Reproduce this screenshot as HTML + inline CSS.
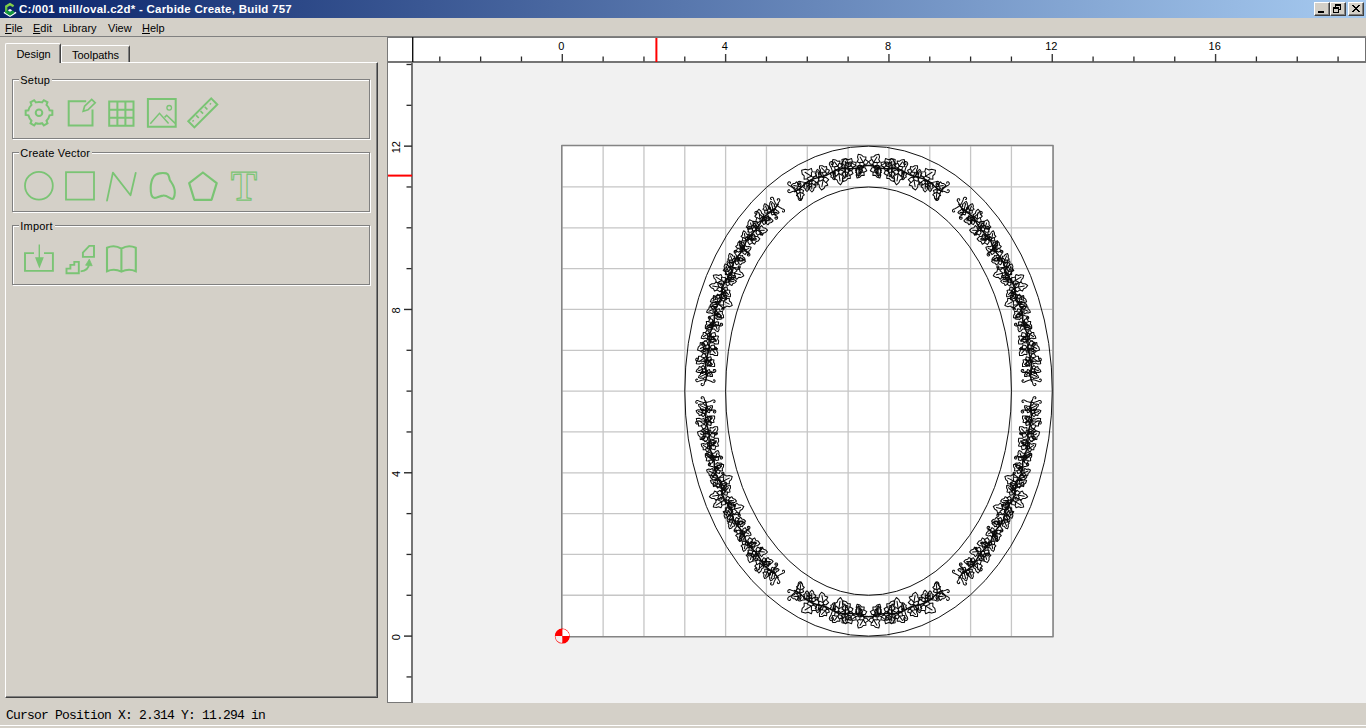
<!DOCTYPE html>
<html lang="en"><head><meta charset="utf-8"><title>Carbide Create</title>
<style>
*{box-sizing:border-box;margin:0;padding:0}
html,body{width:1366px;height:728px;overflow:hidden;background:#d4d0c8}
body{position:relative;font-family:"Liberation Sans",sans-serif;font-size:11px;color:#000;-webkit-font-smoothing:none}
.abs{position:absolute}
#title{position:absolute;left:0;top:0;width:1366px;height:18px;background:linear-gradient(to right,#0a246a 0%,#a6caf0 100%)}
#title .t{position:absolute;left:19px;top:0.5px;height:16px;line-height:16px;color:#fff;font-weight:bold;font-size:11.5px;white-space:nowrap;letter-spacing:0.25px}
.wb{position:absolute;top:2px;width:16px;height:14px;background:#d4d0c8;border-top:1px solid #fff;border-left:1px solid #fff;border-right:1px solid #404040;border-bottom:1px solid #404040}
.wb:after{content:"";position:absolute;left:0;top:0;right:0;bottom:0;border-right:1px solid #808080;border-bottom:1px solid #808080}
#menu{position:absolute;left:0;top:18px;width:1366px;height:18px}
#menu span{position:absolute;top:3px;line-height:14px;white-space:nowrap}
#menu u{text-decoration:underline;text-underline-offset:1px}
.hl{position:absolute;height:1px}
.vl{position:absolute;width:1px}
.tab{position:absolute;background:#d4d0c8;border-top:1px solid #fff;border-left:1px solid #fff;border-right:1px solid #404040;border-top-left-radius:2px;border-top-right-radius:2px;text-align:center;white-space:nowrap}
.tab:after{content:"";position:absolute;top:1px;right:0;bottom:0;width:1px;background:#808080}
.grp{position:absolute;border:1px solid #808080;box-shadow:1px 1px 0 #fff, inset 1px 1px 0 #fff}
.grp .lbl{position:absolute;left:5.8px;top:-7px;background:#d4d0c8;padding:0 2px 0 1.5px;line-height:14px;white-space:nowrap;letter-spacing:0.2px}
#status{position:absolute;left:6px;top:708px;font-family:"Liberation Mono","DejaVu Sans Mono",monospace;font-size:13px;line-height:16px;white-space:pre;letter-spacing:-0.8px}
svg{position:absolute;left:0;top:0;overflow:visible}
svg text{font-family:"Liberation Sans",sans-serif;font-size:11px;fill:#000}
</style></head>
<body>
<svg width="1366" height="728" viewBox="0 0 1366 728">
<rect x="387" y="36" width="979" height="667" fill="#787878"/>
<rect x="388" y="38" width="978" height="24" fill="#fff"/>
<rect x="388" y="62" width="24" height="640" fill="#fff"/>
<rect x="413" y="63" width="953" height="640" fill="#f1f1f1"/>
<rect x="388" y="61" width="978" height="2" fill="#757575"/>
<rect x="411" y="62" width="2" height="641" fill="#757575"/>
<rect x="412" y="37" width="1.4" height="25" fill="#111"/>
<rect x="1365" y="38" width="1" height="24" fill="#707070"/>
<rect x="439.16" y="56.5" width="1.3" height="5" fill="#2a2a2a"/>
<rect x="479.99" y="56.5" width="1.3" height="5" fill="#2a2a2a"/>
<rect x="520.82" y="56.5" width="1.3" height="5" fill="#2a2a2a"/>
<rect x="561.60" y="54" width="1.4" height="8" fill="#3a3a3a"/>
<text x="561.40" y="50" text-anchor="middle">0</text>
<rect x="602.48" y="56.5" width="1.3" height="5" fill="#2a2a2a"/>
<rect x="643.31" y="56.5" width="1.3" height="5" fill="#2a2a2a"/>
<rect x="684.14" y="56.5" width="1.3" height="5" fill="#2a2a2a"/>
<rect x="724.92" y="54" width="1.4" height="8" fill="#3a3a3a"/>
<text x="724.72" y="50" text-anchor="middle">4</text>
<rect x="765.80" y="56.5" width="1.3" height="5" fill="#2a2a2a"/>
<rect x="806.63" y="56.5" width="1.3" height="5" fill="#2a2a2a"/>
<rect x="847.46" y="56.5" width="1.3" height="5" fill="#2a2a2a"/>
<rect x="888.24" y="54" width="1.4" height="8" fill="#3a3a3a"/>
<text x="888.04" y="50" text-anchor="middle">8</text>
<rect x="929.12" y="56.5" width="1.3" height="5" fill="#2a2a2a"/>
<rect x="969.95" y="56.5" width="1.3" height="5" fill="#2a2a2a"/>
<rect x="1010.78" y="56.5" width="1.3" height="5" fill="#2a2a2a"/>
<rect x="1051.56" y="54" width="1.4" height="8" fill="#3a3a3a"/>
<text x="1051.36" y="50" text-anchor="middle">12</text>
<rect x="1092.44" y="56.5" width="1.3" height="5" fill="#2a2a2a"/>
<rect x="1133.27" y="56.5" width="1.3" height="5" fill="#2a2a2a"/>
<rect x="1174.10" y="56.5" width="1.3" height="5" fill="#2a2a2a"/>
<rect x="1214.88" y="54" width="1.4" height="8" fill="#3a3a3a"/>
<text x="1214.68" y="50" text-anchor="middle">16</text>
<rect x="1255.76" y="56.5" width="1.3" height="5" fill="#2a2a2a"/>
<rect x="1296.59" y="56.5" width="1.3" height="5" fill="#2a2a2a"/>
<rect x="1337.42" y="56.5" width="1.3" height="5" fill="#2a2a2a"/>
<rect x="406.5" y="676.28" width="5" height="1.3" fill="#2a2a2a"/>
<rect x="404" y="635.40" width="8" height="1.4" fill="#2a2a2a"/>
<text transform="translate(399.9 637.20) rotate(-90)" text-anchor="middle">0</text>
<rect x="406.5" y="594.62" width="5" height="1.3" fill="#2a2a2a"/>
<rect x="406.5" y="553.79" width="5" height="1.3" fill="#2a2a2a"/>
<rect x="406.5" y="512.96" width="5" height="1.3" fill="#2a2a2a"/>
<rect x="404" y="472.08" width="8" height="1.4" fill="#2a2a2a"/>
<text transform="translate(399.9 473.88) rotate(-90)" text-anchor="middle">4</text>
<rect x="406.5" y="431.30" width="5" height="1.3" fill="#2a2a2a"/>
<rect x="406.5" y="390.47" width="5" height="1.3" fill="#2a2a2a"/>
<rect x="406.5" y="349.64" width="5" height="1.3" fill="#2a2a2a"/>
<rect x="404" y="308.76" width="8" height="1.4" fill="#2a2a2a"/>
<text transform="translate(399.9 310.56) rotate(-90)" text-anchor="middle">8</text>
<rect x="406.5" y="267.98" width="5" height="1.3" fill="#2a2a2a"/>
<rect x="406.5" y="227.15" width="5" height="1.3" fill="#2a2a2a"/>
<rect x="406.5" y="186.32" width="5" height="1.3" fill="#2a2a2a"/>
<rect x="404" y="145.44" width="8" height="1.4" fill="#2a2a2a"/>
<text transform="translate(399.9 147.24) rotate(-90)" text-anchor="middle">12</text>
<rect x="406.5" y="104.66" width="5" height="1.3" fill="#2a2a2a"/>
<rect x="406.5" y="63.83" width="5" height="1.3" fill="#2a2a2a"/>
<rect x="655.4" y="38" width="2" height="24" fill="#f00"/>
<rect x="388" y="174.6" width="24" height="2" fill="#f00"/>
<rect x="562.30" y="146.14" width="489.96" height="489.96" fill="#fff"/>
<path d="M603.13 146.14V636.10M562.30 595.27H1052.26M643.96 146.14V636.10M562.30 554.44H1052.26M684.79 146.14V636.10M562.30 513.61H1052.26M725.62 146.14V636.10M562.30 472.78H1052.26M766.45 146.14V636.10M562.30 431.95H1052.26M807.28 146.14V636.10M562.30 391.12H1052.26M848.11 146.14V636.10M562.30 350.29H1052.26M888.94 146.14V636.10M562.30 309.46H1052.26M929.77 146.14V636.10M562.30 268.63H1052.26M970.60 146.14V636.10M562.30 227.80H1052.26M1011.43 146.14V636.10M562.30 186.97H1052.26" stroke="#c6c6c6" stroke-width="1.3" fill="none"/>
<rect x="561.80" y="145.44" width="491.26" height="491.26" fill="none" stroke="#848484" stroke-width="1.6" stroke-linejoin="round"/>
<ellipse cx="868.52" cy="391.12" rx="183.73" ry="244.98" fill="none" stroke="#111" stroke-width="1"/>
<ellipse cx="868.52" cy="391.12" rx="142.91" ry="204.15" fill="none" stroke="#111" stroke-width="1"/>
<g fill="none" stroke="#0a0a0a" stroke-linejoin="round" stroke-linecap="round">
<path stroke-width="1.5" d="M868.5 165.6l1.5 0 1.5 0.2 1.5 0.3 1.5 0.3 1.5 0.4 1.5 0.4 1.5 0.4 1.4 0.4 1.5 0.3 1.5 0.2 1.5 0.1 1.4 0.1 1.6 0 1.5 0 1.5 0 1.5 0 1.6 0 1.5 0.1 1.5 0.2 1.5 0.3 1.4 0.5 1.5 0.5 1.3 0.6 1.4 0.7 1.3 0.8 1.4 0.7 1.3 0.8 1.3 0.7 1.4 0.6 1.4 0.6 1.4 0.5 1.4 0.4 1.5 0.4 1.5 0.3 1.5 0.3 1.5 0.4 1.4 0.4 1.5 0.4 1.4 0.6 1.4 0.6 1.3 0.8 1.2 0.8 1.3 1 1.1 0.9 1.2 1.1 1.1 1 1.1 1 1.2 1 1.2 0.9 1.2 0.9 1.3 0.7 1.3 0.8 1.3 0.6M868.5 616.7l-1.5 -0.1 -1.5 -0.1 -1.5 -0.3 -1.5 -0.4 -1.5 -0.4 -1.4 -0.4 -1.5 -0.4 -1.5 -0.3 -1.4 -0.3 -1.5 -0.3 -1.5 -0.1 -1.5 -0.1 -1.5 0 -1.5 0 -1.6 0.1 -1.5 0 -1.5 -0.1 -1.5 -0.1 -1.6 -0.2 -1.4 -0.3 -1.5 -0.4 -1.4 -0.6 -1.4 -0.6 -1.4 -0.7 -1.3 -0.7 -1.3 -0.8 -1.4 -0.7 -1.3 -0.7 -1.3 -0.7 -1.4 -0.6 -1.4 -0.4 -1.5 -0.5 -1.4 -0.3 -1.5 -0.4 -1.5 -0.3 -1.5 -0.3 -1.5 -0.4 -1.4 -0.5 -1.5 -0.6 -1.3 -0.6 -1.3 -0.7 -1.3 -0.9 -1.2 -0.9 -1.2 -1 -1.1 -1 -1.1 -1.1 -1.2 -1 -1.1 -1 -1.2 -0.9 -1.2 -0.8 -1.3 -0.8 -1.3 -0.7 -1.4 -0.7M868.5 165.6l-1.5 0 -1.5 0.2 -1.5 0.3 -1.5 0.3 -1.5 0.4 -1.4 0.4 -1.5 0.4 -1.5 0.4 -1.4 0.3 -1.5 0.2 -1.5 0.1 -1.5 0.1 -1.5 0 -1.5 0 -1.6 0 -1.5 0 -1.5 0 -1.5 0.1 -1.6 0.2 -1.4 0.3 -1.5 0.5 -1.4 0.5 -1.4 0.6 -1.4 0.7 -1.3 0.8 -1.3 0.7 -1.4 0.8 -1.3 0.7 -1.3 0.6 -1.4 0.6 -1.4 0.5 -1.5 0.4 -1.4 0.4 -1.5 0.3 -1.5 0.3 -1.5 0.4 -1.5 0.4 -1.4 0.4 -1.5 0.6 -1.3 0.6 -1.3 0.8 -1.3 0.8 -1.2 1 -1.2 0.9 -1.1 1.1 -1.1 1 -1.2 1 -1.1 1 -1.2 0.9 -1.2 0.9 -1.3 0.7 -1.3 0.8 -1.4 0.6M868.5 616.7l1.5 -0.1 1.5 -0.1 1.5 -0.3 1.5 -0.4 1.5 -0.4 1.5 -0.4 1.5 -0.4 1.4 -0.3 1.5 -0.3 1.5 -0.3 1.5 -0.1 1.4 -0.1 1.6 0 1.5 0 1.5 0.1 1.5 0 1.6 -0.1 1.5 -0.1 1.5 -0.2 1.5 -0.3 1.4 -0.4 1.5 -0.6 1.3 -0.6 1.4 -0.7 1.3 -0.7 1.4 -0.8 1.3 -0.7 1.3 -0.7 1.4 -0.7 1.4 -0.6 1.4 -0.4 1.4 -0.5 1.5 -0.3 1.5 -0.4 1.5 -0.3 1.5 -0.3 1.4 -0.4 1.5 -0.5 1.4 -0.6 1.4 -0.6 1.3 -0.7 1.2 -0.9 1.3 -0.9 1.1 -1 1.2 -1 1.1 -1.1 1.1 -1 1.2 -1 1.2 -0.9 1.2 -0.8 1.3 -0.8 1.3 -0.7 1.3 -0.7M1013.4 285.1l0.5 1.4 0.4 1.5 0.3 1.5 0.2 1.5 0.3 1.6 0.2 1.5 0.3 1.5 0.3 1.4 0.5 1.5 0.5 1.4 0.7 1.3 0.7 1.4 0.7 1.4 0.7 1.3 0.7 1.4 0.7 1.4 0.5 1.4 0.4 1.5 0.3 1.4 0.2 1.6 0.1 1.5 0.1 1.5 0 1.6 0.1 1.5 0.2 1.5 0.3 1.5 0.3 1.4 0.5 1.5 0.5 1.4 0.6 1.4 0.6 1.4 0.6 1.4 0.6 1.5 0.4 1.4 0.3 1.5 0.3 1.5 0.1 1.5 0 1.6 -0.1 1.5 0 1.5 -0.1 1.6 0 1.5 0.1 1.5 0.2 1.5 0.2 1.5 0.4 1.4 0.5 1.5 0.4 1.5 0.5 1.4 0.5 1.5 0.3 1.5 0.3 1.5 0.1 1.5 0.1 1.5 -0.1 1.5 -0.2 1.5 -0.2 1.6 -0.2 1.5 -0.1 1.5 -0.1 1.5 0 1.5 0.1 1.5 0.2 1.5 0.2 1.5 0.4 1.5M1013.4 497.1l0.5 -1.4 0.4 -1.5 0.3 -1.5 0.2 -1.5 0.3 -1.5 0.2 -1.5 0.3 -1.5 0.3 -1.5 0.5 -1.4 0.5 -1.4 0.7 -1.4 0.7 -1.4 0.7 -1.3 0.7 -1.4 0.7 -1.3 0.7 -1.4 0.5 -1.5 0.4 -1.4 0.3 -1.5 0.2 -1.5 0.1 -1.5 0.1 -1.6 0 -1.5 0.1 -1.5 0.2 -1.6 0.3 -1.4 0.3 -1.5 0.5 -1.4 0.5 -1.5 0.6 -1.4 0.6 -1.4 0.6 -1.4 0.6 -1.4 0.4 -1.5 0.3 -1.5 0.3 -1.5 0.1 -1.5 0 -1.5 -0.1 -1.6 0 -1.5 -0.1 -1.5 0 -1.5 0.1 -1.6 0.2 -1.5 0.2 -1.4 0.4 -1.5 0.5 -1.5 0.4 -1.4 0.5 -1.5 0.5 -1.5 0.3 -1.4 0.3 -1.5 0.1 -1.5 0.1 -1.6 -0.1 -1.5 -0.2 -1.5 -0.2 -1.5 -0.2 -1.6 -0.1 -1.5 -0.1 -1.5 0 -1.5 0.1 -1.5 0.2 -1.5 0.2 -1.5 0.4 -1.5M723.6 497.1l-0.5 -1.4 -0.4 -1.5 -0.3 -1.5 -0.2 -1.5 -0.2 -1.5 -0.2 -1.5 -0.3 -1.5 -0.4 -1.5 -0.4 -1.4 -0.6 -1.4 -0.6 -1.4 -0.7 -1.4 -0.7 -1.3 -0.8 -1.4 -0.7 -1.3 -0.6 -1.4 -0.5 -1.5 -0.4 -1.4 -0.3 -1.5 -0.2 -1.5 -0.1 -1.5 -0.1 -1.6 -0.1 -1.5 -0.1 -1.5 -0.2 -1.6 -0.2 -1.4 -0.4 -1.5 -0.4 -1.4 -0.6 -1.5 -0.6 -1.4 -0.6 -1.4 -0.6 -1.4 -0.5 -1.4 -0.5 -1.5 -0.3 -1.5 -0.2 -1.5 -0.1 -1.5 0 -1.5 0 -1.6 0.1 -1.5 0.1 -1.5 0 -1.5 -0.1 -1.6 -0.2 -1.5 -0.3 -1.4 -0.4 -1.5 -0.4 -1.5 -0.5 -1.4 -0.5 -1.5 -0.4 -1.5 -0.4 -1.4 -0.2 -1.5 -0.2 -1.5 0 -1.6 0.1 -1.5 0.1 -1.5 0.2 -1.5 0.2 -1.6 0.2 -1.5 0.1 -1.5 0 -1.5 -0.1 -1.5 -0.2 -1.5 -0.3 -1.5 -0.3 -1.5M723.6 285.1l-0.5 1.4 -0.4 1.5 -0.3 1.5 -0.2 1.5 -0.2 1.6 -0.2 1.5 -0.3 1.5 -0.4 1.4 -0.4 1.5 -0.6 1.4 -0.6 1.3 -0.7 1.4 -0.7 1.4 -0.8 1.3 -0.7 1.4 -0.6 1.4 -0.5 1.4 -0.4 1.5 -0.3 1.4 -0.2 1.6 -0.1 1.5 -0.1 1.5 -0.1 1.6 -0.1 1.5 -0.2 1.5 -0.2 1.5 -0.4 1.4 -0.4 1.5 -0.6 1.4 -0.6 1.4 -0.6 1.4 -0.6 1.4 -0.5 1.5 -0.5 1.4 -0.3 1.5 -0.2 1.5 -0.1 1.5 0 1.6 0 1.5 0.1 1.5 0.1 1.6 0 1.5 -0.1 1.5 -0.2 1.5 -0.3 1.5 -0.4 1.4 -0.4 1.5 -0.5 1.5 -0.5 1.4 -0.4 1.5 -0.4 1.5 -0.2 1.5 -0.2 1.5 0 1.5 0.1 1.5 0.1 1.5 0.2 1.6 0.2 1.5 0.2 1.5 0.1 1.5 0 1.5 -0.1 1.5 -0.2 1.5 -0.3 1.5 -0.3 1.5M1013.4 285.1l-0.6 -1.4 -0.7 -1.3 -0.8 -1.3 -0.8 -1.3 -0.9 -1.3 -0.8 -1.3 -0.9 -1.3 -0.7 -1.3 -0.6 -1.3 -0.6 -1.4 -0.4 -1.5 -0.4 -1.5 -0.4 -1.5 -0.4 -1.5 -0.4 -1.4 -0.5 -1.5 -0.6 -1.4 -0.7 -1.3 -0.8 -1.3 -0.9 -1.3 -0.9 -1.2 -1 -1.1 -1 -1.2 -1 -1.2 -0.9 -1.2 -0.8 -1.2 -0.8 -1.4 -0.6 -1.3 -0.6 -1.4 -0.6 -1.4 -0.5 -1.5 -0.6 -1.4 -0.6 -1.4 -0.7 -1.4 -0.8 -1.3 -0.9 -1.2 -0.9 -1.1 -1.1 -1.1 -1.1 -1.1 -1.2 -1 -1.1 -1.1 -1.1 -1.1 -1 -1.1 -0.9 -1.2 -0.9 -1.2 -0.8 -1.3 -0.7 -1.3 -0.7 -1.4 -0.7 -1.3 -0.8 -1.4 -0.8 -1.3 -0.9 -1.2 -1 -1.1 -1.1 -1.1 -1.2 -0.9 -1.2 -1 -1.3 -0.8 -1.3 -0.9 -1.2 -0.9 -1.2 -1 -1.1 -1 -1.1 -1 -1 -1.2 -0.9 -1.2 -0.9 -1.2M1013.4 497.1l-0.6 1.4 -0.7 1.4 -0.8 1.3 -0.8 1.3 -0.9 1.2 -0.8 1.3 -0.9 1.3 -0.7 1.3 -0.6 1.4 -0.6 1.4 -0.4 1.4 -0.4 1.5 -0.4 1.5 -0.4 1.5 -0.4 1.5 -0.5 1.4 -0.6 1.4 -0.7 1.4 -0.8 1.3 -0.9 1.2 -0.9 1.2 -1 1.2 -1 1.1 -1 1.2 -0.9 1.2 -0.8 1.3 -0.8 1.3 -0.6 1.3 -0.6 1.5 -0.6 1.4 -0.5 1.4 -0.6 1.5 -0.6 1.4 -0.7 1.3 -0.8 1.3 -0.9 1.2 -0.9 1.2 -1.1 1.1 -1.1 1 -1.2 1.1 -1.1 1 -1.1 1.1 -1 1.1 -0.9 1.2 -0.9 1.2 -0.8 1.3 -0.7 1.4 -0.7 1.3 -0.7 1.4 -0.8 1.3 -0.8 1.3 -0.9 1.2 -1 1.2 -1.1 1 -1.2 1 -1.2 0.9 -1.3 0.9 -1.3 0.9 -1.2 0.9 -1.2 0.9 -1.1 1 -1.1 1.1 -1 1.1 -0.9 1.2 -0.9 1.2M723.6 497.1l0.6 1.4 0.7 1.4 0.8 1.3 0.9 1.3 0.8 1.2 0.9 1.3 0.8 1.3 0.7 1.3 0.7 1.4 0.5 1.4 0.5 1.4 0.4 1.5 0.4 1.5 0.3 1.5 0.4 1.5 0.5 1.4 0.6 1.4 0.7 1.4 0.8 1.3 0.9 1.2 1 1.2 1 1.2 1 1.1 0.9 1.2 0.9 1.2 0.9 1.3 0.7 1.3 0.7 1.3 0.6 1.5 0.5 1.4 0.5 1.4 0.6 1.5 0.6 1.4 0.7 1.3 0.8 1.3 0.9 1.2 1 1.2 1.1 1.1 1.1 1 1.1 1.1 1.1 1 1.1 1.1 1 1.1 1 1.2 0.8 1.2 0.8 1.3 0.8 1.4 0.7 1.3 0.7 1.4 0.8 1.3 0.8 1.3 0.9 1.2 1 1.2 1.1 1 1.2 1 1.2 0.9 1.3 0.9 1.2 0.9 1.3 0.9 1.1 0.9 1.2 1 1 1.1 1 1.1 1 1.2 0.9 1.2M723.6 285.1l0.6 -1.4 0.7 -1.3 0.8 -1.3 0.9 -1.3 0.8 -1.3 0.9 -1.3 0.8 -1.3 0.7 -1.3 0.7 -1.3 0.5 -1.4 0.5 -1.5 0.4 -1.5 0.4 -1.5 0.3 -1.5 0.4 -1.4 0.5 -1.5 0.6 -1.4 0.7 -1.3 0.8 -1.3 0.9 -1.3 1 -1.2 1 -1.1 1 -1.2 0.9 -1.2 0.9 -1.2 0.9 -1.2 0.7 -1.4 0.7 -1.3 0.6 -1.4 0.5 -1.4 0.5 -1.5 0.6 -1.4 0.6 -1.4 0.7 -1.4 0.8 -1.3 0.9 -1.2 1 -1.1 1.1 -1.1 1.1 -1.1 1.1 -1 1.1 -1.1 1.1 -1.1 1 -1.1 1 -1.2 0.8 -1.2 0.8 -1.3 0.8 -1.3 0.7 -1.4 0.7 -1.3 0.8 -1.4 0.8 -1.3 0.9 -1.2 1 -1.1 1.1 -1.1 1.2 -0.9 1.2 -1 1.3 -0.8 1.2 -0.9 1.3 -0.9 1.1 -1 1.2 -1 1 -1 1 -1.2 1 -1.2 0.9 -1.2"/>
<path stroke-width="1.05" d="M941.2 191.0l-0.7 1.5 -0.6 1.6 -0.5 1.6 -0.4 1.6 -0.2 1.5 -0.2 0.6 -0.4 0.5 -0.4 0.3 -0.5 0.2 -0.4 0 -0.5 0 -0.3 -0.2 -0.3 -0.3 -0.2 -0.3 0 -0.3 0 -0.4 0.1 -0.3 0.2 -0.2 0.2 -0.1 0.2 -0.1 0.2 0M941.2 191.0l1.1 0.1 1.2 0.2 1.1 0.3 1.1 0.4 0.9 0.5 0.6 0.2 0.6 -0.1 0.5 -0.1 0.4 -0.3 0.3 -0.4 0.2 -0.4 0.1 -0.5 -0.1 -0.4 -0.2 -0.3 -0.3 -0.3 -0.3 -0.2 -0.3 0 -0.3 0 -0.2 0.1 -0.2 0.2 -0.1 0.2M941.2 191.0l1.3 -1.4 1.4 -1.4 1.4 -1.2 1.5 -1 1.6 -0.9 0.5 -0.4 0.3 -0.4 0.1 -0.6 0 -0.5 -0.2 -0.5 -0.3 -0.4 -0.3 -0.3 -0.4 -0.2 -0.4 0 -0.4 0.1 -0.3 0.1 -0.2 0.2 -0.1 0.3 -0.1 0.2 0.1 0.3 0.1 0.2M871.8 165.8l0.8 -1.4M872.8 164.0l-2.3 0.3 -1.8 -2.7 2.7 -1.8 -0.4 -2.9 2.8 -0.2 1.8 -1.7 3.2 -0.8 0.8 2.9 -0.9 2.3 1.3 2.4 -2.8 1.1 -0.2 3.2 -3.1 0 -1.1 -2.1M872.8 164.0l4.1 -7M873.5 162.8l-1.2 -3.1M873.5 162.8l3.4 -0.6M873.1 166.1l1 1.2M874.3 167.7l1.1 -2.2 3.4 -0.1 0.1 3.4 2.7 1.3 -1.4 2.4 0.6 2.5 -0.9 3 -2.8 -0.8 -1.6 -1.8 -2.6 0 0.2 -3.1 -2.8 -1.6 1.6 -3 2.4 0M874.3 167.7l4.1 7.3M875.1 169.0l3.4 0.5M875.1 169.0l-1.2 3.3M878.0 167.3l1.6 -0.8 1.6 -0.9 1.5 -1 1.4 -1 1.3 -1.2 0.8 -0.4 0.8 0 0.7 0.3 0.5 0.6 0.2 0.6 -0.1 0.7 -0.4 0.4 -0.5 0.3 -0.5 0 -0.5 -0.2 -0.3 -0.3 -0.1 -0.4 0.1 -0.4 0.2 -0.3 0.3 -0.1 0.2 0M878.0 168.7l1.3 -1 1.9 1 -0.9 1.9 1.2 1.6 -1.5 1 -0.3 1.7 -1.3 1.5 -1.4 -1.4 -0.4 -1.5 -1.5 -0.9 1 -1.7 -1.2 -1.8 1.8 -1.2 1.3 0.8M878.0 168.7l0.3 5.4M875.0 166.5l0.5 0.9 0.4 0.9 0.5 0.8 0.6 0.7 0.6 0.7 0.2 0.5 0.1 0.5 -0.1 0.5 -0.3 0.4 -0.3 0.3 -0.4 0.1 -0.4 -0.1 -0.3 -0.2 -0.2 -0.2 -0.1 -0.4 0 -0.3 0.1 -0.2 0.2 -0.2 0.2 -0.1 0.2 0 0.2 0.1M882.8 168.4l1.2 -1M884.5 167.1l-2.7 -0.9 -0.9 -3.7 3.8 -0.7 0.8 -3.3 3.2 1.2 2.7 -1.1 3.8 0.8 -0.5 3.6 -1.9 2 0.3 3.2 -3.4 -0.1 -1.5 3.4 -3.4 -1.6 -0.3 -2.8M884.5 167.1l7.4 -5.5M885.7 166.1l-0.1 -4M885.7 166.1l3.9 1M886.9 168.7l0.7 1.5M887.9 170.6l0.9 -2.3 3.4 0 0.2 3.5 2.8 1.4 -1.3 2.5 0.7 2.6 -0.8 3.2 -2.8 -1 -1.6 -1.9 -2.6 -0.1 0.1 -3.2 -2.8 -1.8 1.4 -3 2.4 0.1M887.9 170.6l4.3 7.7M888.7 171.9l3.4 0.7M888.7 171.9l-1 3.5M891.7 168.7l-0.1 1.3 -0.1 1.3 0 1.2 0.1 1.3 0.2 1.2 0 0.7 -0.4 0.6 -0.4 0.4 -0.6 0.1 -0.5 -0.1 -0.4 -0.3 -0.3 -0.5 0 -0.5 0.2 -0.4 0.2 -0.3 0.4 -0.1 0.3 0 0.3 0.2 0.1 0.3 0 0.2 0 0.2M891.7 167.3l-1.5 1 -2.1 -1.2 1.2 -2.2 -1.4 -1.8 1.8 -1.1 0.4 -1.8 1.7 -1.5 1.7 1.6 0.4 1.8 1.8 1.2 -1.4 1.7 1 2.3 -2.1 1 -1.5 -1M891.7 167.3l0.1 -6.1M888.6 168.7l0.3 -0.7 0.4 -0.7 0.4 -0.6 0.4 -0.6 0.5 -0.5 0.2 -0.5 0.1 -0.5 0 -0.5 -0.3 -0.4 -0.3 -0.3 -0.4 -0.2 -0.4 0 -0.3 0 -0.3 0.2 -0.3 0.3 -0.1 0.2 0 0.3 0.1 0.2 0.1 0.2 0.2 0.1 0.2 0.1M897.2 169.1l0.9 -1.4M898.3 167.4l-2.1 -0.1 -1.4 -2.6 2.6 -1.2 -0.2 -2.5 2.5 0.2 1.7 -1.3 2.9 -0.3 0.5 2.7 -0.8 1.9 0.9 2.2 -2.5 0.6 -0.4 2.8 -2.9 -0.5 -0.8 -1.9M898.3 167.4l4.2 -5.5M899.1 166.4l-1 -2.9M899.1 166.4l3 0M898.5 169.3l0.1 1.6M898.5 171.5l2.3 -1.2 2.7 2.3 -2.2 3 1.3 3.1 -2.6 1.2 -1.1 2.7 -2.5 2.2 -1.7 -2.8 -0.1 -2.8 -2.1 -1.9 2.1 -2.6 -1.2 -3.5 3.2 -1.5 1.9 1.8M898.5 171.5l-1.5 9.4M898.2 173.2l2.3 2.9M898.2 173.2l-3 2.1M904.6 171.9l0.4 -1.5 0.4 -1.5 0.5 -1.4 0.7 -1.3 0.8 -1.2 0.3 -1 -0.1 -1 -0.5 -0.8 -0.8 -0.5 -0.9 -0.2 -0.8 0.2 -0.6 0.5 -0.3 0.6 0 0.7 0.3 0.5 0.4 0.4 0.5 0.1 0.5 0 0.4 -0.2 0.2 -0.4 0 -0.3M904.3 173.1l1.3 -0.5 1.3 1.3 -1.2 1.4 0.6 1.6 -1.4 0.5 -0.7 1.3 -1.4 1 -0.9 -1.5 0 -1.4 -1.1 -1.1 1.3 -1.2 -0.5 -1.8 1.7 -0.6 1 1M904.3 173.1l-1.1 4.7M901.8 170.5l0.3 0.8 0.2 0.8 0.3 0.8 0.4 0.8 0.4 0.6 0.1 0.4 0.1 0.4 -0.1 0.4 -0.2 0.3 -0.3 0.2 -0.2 0.1 -0.3 0.1 -0.3 0 -0.2 -0.1 -0.2 -0.2 -0.1 -0.2 -0.1 -0.2 0 -0.2 0.1 -0.1 0.1 -0.2 0.1 0M909.3 174.5l1.1 -1.2M910.6 173.0l-2 -0.2 -1 -2.6 2.7 -1.1 0.2 -2.5 2.4 0.3 1.8 -1.2 2.8 0 0.1 2.6 -1.1 1.8 0.6 2.3 -2.5 0.5 -0.8 2.7 -2.7 -0.6 -0.5 -2M910.6 173.0l4.8 -5.2M911.5 172.1l-0.5 -2.9M911.5 172.1l2.9 0.1M913.0 176.1l0.5 1.5M913.6 178.1l1.9 -1.9 3.6 1 -1.2 3.3 2.4 2.2 -2.4 1.9 -0.2 2.7 -2.1 2.7 -2.7 -1.7 -0.9 -2.3 -2.8 -0.8 1.4 -3 -2.3 -2.5 2.8 -2.4 2.5 0.8M913.6 178.1l1.5 8.4M913.9 179.6l3.3 1.6M913.9 179.6l-2.5 2.9M917.7 177.4l0.4 1.2 0.4 1.1 0.2 1.2 0.1 1.2 0 1.2 0.2 0.8 0.5 0.6 0.6 0.3 0.7 0 0.6 -0.2 0.4 -0.5 0.2 -0.5 0 -0.6 -0.2 -0.4 -0.4 -0.3 -0.5 -0.1 -0.3 0.1 -0.3 0.2 -0.2 0.3 0 0.4 0.1 0.2M918.1 176.1l-1.3 0.5 -1.5 -1.3 1.3 -1.5 -0.7 -1.6 1.6 -0.5 0.7 -1.3 1.6 -1 1 1.7 -0.1 1.4 1.2 1.2 -1.4 1.1 0.4 2 -1.9 0.4 -0.9 -1.1M918.1 176.1l1.2 -4.7M914.8 176.7l0.5 -0.6 0.5 -0.6 0.5 -0.5 0.5 -0.5 0.6 -0.4 0.4 -0.4 0.2 -0.5 -0.1 -0.5 -0.2 -0.4 -0.3 -0.3 -0.4 -0.2 -0.4 0 -0.4 0.2 -0.2 0.2 -0.1 0.3 0 0.3 0.1 0.3 0.2 0.1 0.2 0.1 0.2 0 0.2 -0.1M922.5 178.5l1.2 -1.1M924.1 177.1l-2.6 -1.1 -0.7 -4 3.9 -0.2 1 -3.4 3.2 1.6 2.7 -0.8 3.9 1.1 -0.7 3.7 -2 1.9 0.1 3.3 -3.5 -0.5 -1.8 3.3 -3.3 -2 -0.2 -2.9M924.1 177.1l8 -4.9M925.5 176.3l0.2 -4.1M925.5 176.3l3.9 1.4M925.5 179.6l-0.2 1.6M925.3 181.6l1.6 -1.2 2.5 1.4 -1.3 2.6 1.4 2.2 -2 1.3 -0.5 2.1 -1.9 2 -1.7 -1.9 -0.4 -2.1 -1.9 -1.2 1.5 -2.3 -1.4 -2.5 2.4 -1.6 1.7 1.2M925.3 181.6l-0.1 7.4M925.3 182.9l2.2 1.9M925.3 182.9l-2.2 2M930.2 182.5l1.4 -0.1 1.4 -0.1 1.3 -0.2 1.3 -0.3 1.3 -0.4 0.7 -0.1 0.8 0.2 0.5 0.5 0.4 0.5 0.1 0.6 -0.1 0.6 -0.2 0.5 -0.5 0.3 -0.4 0.1 -0.5 0 -0.4 -0.2 -0.2 -0.3 -0.2 -0.3 0 -0.3 0.2 -0.3 0.1 -0.1M930.2 183.8l1.3 -0.9 1.9 1.1 -1 1.9 1 1.6 -1.5 1 -0.4 1.6 -1.5 1.4 -1.3 -1.5 -0.3 -1.5 -1.5 -1 1.2 -1.6 -1 -1.9 1.8 -1.1 1.3 0.9M930.2 183.8l-0.1 5.4M927.7 180.7l0 0.9 -0.1 0.8 0 0.8 0.1 0.8 0.2 0.8 -0.1 0.5 -0.1 0.5 -0.3 0.4 -0.3 0.2 -0.4 0.2 -0.4 0 -0.4 -0.1 -0.3 -0.2 -0.2 -0.2 -0.1 -0.3 0 -0.3 0.1 -0.2 0.1 -0.2 0.1 -0.2 0.2 0 0.2 0M935.3 187.0l1.5 -0.6M937.2 186.4l-1.3 -1.3 0.7 -2.4 2.4 0.8 1.5 -1.7 1.4 1.6 1.9 0.2 2 1.5 -1.4 1.9 -1.7 0.6 -0.8 1.9 -2 -1 -1.9 1.5 -1.5 -1.9 0.7 -1.7M937.2 186.4l6 -1M938.2 186.2l1.2 -2.3M938.2 186.2l2 1.7M937.4 188.7l-0.1 1.6M937.2 190.6l1.7 -0.9 2.1 1.6 -1.5 2.2 1.1 2.1 -2 1 -0.7 1.9 -2 1.6 -1.4 -1.9 -0.1 -2 -1.6 -1.3 1.6 -1.9 -1 -2.5 2.4 -1.1 1.4 1.2M937.2 190.6l-0.9 6.8M937.1 191.8l1.8 2M937.1 191.8l-2.3 1.6M795.9 591.3l0.6 -1.6 0.7 -1.6 0.5 -1.6 0.4 -1.5 0.2 -1.6 0.2 -0.6 0.3 -0.4 0.4 -0.3 0.5 -0.2 0.5 -0.1 0.4 0.1 0.4 0.2 0.2 0.2 0.2 0.3 0.1 0.4 -0.1 0.3 -0.1 0.3 -0.2 0.2 -0.2 0.2 -0.2 0 -0.2 0M795.9 591.3l-1.2 -0.2 -1.1 -0.2 -1.1 -0.3 -1.1 -0.4 -1 -0.5 -0.6 -0.1 -0.5 0 -0.6 0.2 -0.4 0.3 -0.3 0.4 -0.2 0.4 0 0.4 0.1 0.4 0.2 0.4 0.2 0.2 0.3 0.2 0.3 0.1 0.3 -0.1 0.2 -0.1 0.2 -0.1 0.1 -0.2M795.9 591.3l-1.4 1.4 -1.3 1.3 -1.4 1.2 -1.5 1.1 -1.7 0.8 -0.4 0.4 -0.3 0.5 -0.2 0.5 0.1 0.5 0.1 0.5 0.3 0.4 0.4 0.3 0.4 0.2 0.4 0 0.4 0 0.3 -0.2 0.2 -0.2 0.1 -0.2 0 -0.3 0 -0.2 -0.1 -0.2M865.2 616.4l-0.7 1.4M864.2 618.2l2.4 -0.2 1.8 2.6 -2.8 1.8 0.4 2.9 -2.8 0.2 -1.7 1.8 -3.2 0.7 -0.8 -2.9 0.8 -2.3 -1.2 -2.3 2.8 -1.2 0.1 -3.2 3.2 0.1 1 2M864.2 618.2l-4.1 7M863.5 619.5l1.3 3M863.5 619.5l-3.3 0.6M864.0 616.2l-1 -1.3M862.7 614.5l-1 2.2 -3.5 0.1 0 -3.3 -2.8 -1.3 1.4 -2.5 -0.6 -2.4 0.9 -3.1 2.8 0.8 1.6 1.9 2.7 0 -0.3 3.1 2.9 1.6 -1.6 3 -2.5 -0.1M862.7 614.5l-4.1 -7.3M862.0 613.2l-3.5 -0.5M862.0 613.2l1.1 -3.3M859.1 614.9l-1.6 0.9 -1.6 0.9 -1.6 0.9 -1.4 1.1 -1.3 1.1 -0.7 0.4 -0.9 0 -0.7 -0.3 -0.5 -0.5 -0.2 -0.7 0.2 -0.6 0.3 -0.5 0.5 -0.3 0.6 0 0.4 0.2 0.4 0.3 0.1 0.4 -0.1 0.4 -0.2 0.3 -0.3 0.1 -0.3 0M859.0 613.6l-1.2 0.9 -2 -0.9 1 -2 -1.2 -1.6 1.4 -1 0.3 -1.6 1.3 -1.6 1.4 1.4 0.5 1.6 1.5 0.8 -1 1.7 1.1 1.9 -1.7 1.2 -1.4 -0.8M859.0 613.6l-0.3 -5.5M862.0 615.7l-0.4 -0.9 -0.5 -0.8 -0.5 -0.8 -0.5 -0.8 -0.6 -0.7 -0.3 -0.4 -0.1 -0.6 0.1 -0.5 0.3 -0.4 0.4 -0.2 0.4 -0.1 0.3 0 0.4 0.2 0.2 0.3 0.1 0.3 0 0.3 -0.2 0.3 -0.1 0.1 -0.2 0.1 -0.2 0 -0.2 -0.1M854.3 613.8l-1.3 1M852.6 615.1l2.7 0.9 0.9 3.7 -3.8 0.7 -0.8 3.3 -3.2 -1.2 -2.7 1.1 -3.8 -0.8 0.5 -3.5 1.8 -2.1 -0.2 -3.2 3.4 0.2 1.5 -3.4 3.4 1.6 0.3 2.7M852.6 615.1l-7.5 5.6M851.3 616.1l0.1 4M851.3 616.1l-3.9 -1M850.1 613.5l-0.7 -1.4M849.2 611.6l-1 2.3 -3.3 0.1 -0.3 -3.6 -2.7 -1.4 1.2 -2.5 -0.7 -2.6 0.9 -3.1 2.8 0.9 1.6 2 2.6 0.1 -0.2 3.2 2.9 1.7 -1.4 3.1 -2.4 -0.2M849.2 611.6l-4.4 -7.6M848.3 610.3l-3.4 -0.7M848.3 610.3l1 -3.4M845.4 613.6l0.1 -1.3 0.1 -1.3 0 -1.3 -0.1 -1.2 -0.2 -1.2 0 -0.7 0.3 -0.6 0.5 -0.4 0.5 -0.2 0.6 0.2 0.4 0.3 0.2 0.4 0 0.5 -0.1 0.4 -0.3 0.3 -0.3 0.1 -0.4 0 -0.2 -0.2 -0.2 -0.2 0 -0.3 0.1 -0.2M845.3 614.9l1.5 -0.9 2.1 1.2 -1.1 2.1 1.4 1.8 -1.8 1.1 -0.4 1.8 -1.7 1.6 -1.8 -1.7 -0.4 -1.8 -1.7 -1.2 1.4 -1.7 -1.1 -2.2 2.2 -1.1 1.4 1M845.3 614.9l0 6.2M848.4 613.5l-0.3 0.7 -0.3 0.7 -0.4 0.6 -0.4 0.6 -0.5 0.6 -0.3 0.4 -0.1 0.5 0.1 0.5 0.2 0.4 0.3 0.3 0.4 0.2 0.4 0.1 0.4 -0.1 0.3 -0.2 0.2 -0.2 0.1 -0.3 0 -0.3 0 -0.2 -0.2 -0.2 -0.2 -0.1 -0.1 0M839.8 613.2l-0.9 1.3M838.7 614.9l2.1 0.1 1.5 2.5 -2.6 1.2 0.2 2.6 -2.6 -0.2 -1.7 1.3 -2.8 0.2 -0.6 -2.6 0.9 -1.9 -1 -2.3 2.6 -0.6 0.3 -2.8 2.9 0.5 0.8 2M838.7 614.9l-4.2 5.5M838.0 615.8l0.9 2.9M838.0 615.8l-3.1 0.1M838.5 612.9l0 -1.6"/>
<path stroke-width="1.05" d="M838.6 610.7l-2.4 1.3 -2.7 -2.4 2.2 -3 -1.2 -3.1 2.6 -1.2 1 -2.7 2.5 -2.1 1.7 2.7 0.2 2.9 2.1 1.9 -2.1 2.6 1.2 3.5 -3.2 1.5 -1.9 -1.9M838.6 610.7l1.4 -9.4M838.8 609.1l-2.3 -2.9M838.8 609.1l3.1 -2.2M832.5 610.4l-0.4 1.5 -0.5 1.4 -0.5 1.4 -0.7 1.4 -0.8 1.2 -0.3 1 0.2 0.9 0.5 0.8 0.8 0.6 0.9 0.1 0.8 -0.2 0.6 -0.4 0.3 -0.7 0 -0.6 -0.3 -0.6 -0.5 -0.4 -0.5 -0.1 -0.5 0.1 -0.3 0.2 -0.2 0.3 0 0.3M832.8 609.1l-1.3 0.5 -1.4 -1.3 1.3 -1.4 -0.6 -1.6 1.4 -0.5 0.6 -1.3 1.5 -0.9 0.9 1.4 -0.1 1.5 1.1 1.1 -1.2 1.1 0.5 1.8 -1.8 0.6 -0.9 -1M832.8 609.1l1 -4.6M835.2 611.7l-0.2 -0.8 -0.3 -0.8 -0.3 -0.8 -0.3 -0.7 -0.5 -0.7 -0.1 -0.4 0 -0.4 0.1 -0.3 0.2 -0.3 0.2 -0.3 0.3 -0.1 0.3 -0.1 0.2 0.1 0.3 0.1 0.1 0.1 0.2 0.2 0 0.2 0 0.2 -0.1 0.2 0 0.1 -0.2 0.1M827.7 607.7l-1 1.2M826.4 609.3l2 0.2 1 2.6 -2.6 1 -0.2 2.6 -2.4 -0.4 -1.8 1.2 -2.8 0.1 -0.2 -2.7 1.1 -1.8 -0.6 -2.3 2.6 -0.4 0.7 -2.7 2.7 0.6 0.5 2M826.4 609.3l-4.8 5.2M825.6 610.2l0.5 2.9M825.6 610.2l-3 -0.1M824.1 606.2l-0.5 -1.5M823.5 604.2l-2 1.8 -3.5 -0.9 1.2 -3.4 -2.4 -2.1 2.3 -2 0.3 -2.6 2.1 -2.7 2.6 1.6 1 2.4 2.7 0.8 -1.4 2.9 2.3 2.5 -2.7 2.5 -2.5 -0.8M823.5 604.2l-1.6 -8.5M823.2 602.7l-3.4 -1.6M823.2 602.7l2.4 -3M819.3 604.9l-0.4 -1.2 -0.3 -1.2 -0.3 -1.2 -0.1 -1.2 0 -1.1 -0.2 -0.8 -0.4 -0.6 -0.6 -0.3 -0.7 -0.1 -0.6 0.3 -0.5 0.4 -0.2 0.6 0 0.5 0.3 0.5 0.4 0.3 0.4 0 0.4 -0.1 0.3 -0.2 0.1 -0.3 0 -0.3 -0.1 -0.2M819.0 606.1l1.3 -0.5 1.4 1.4 -1.3 1.4 0.7 1.7 -1.5 0.5 -0.7 1.3 -1.6 0.9 -1 -1.6 0 -1.5 -1.1 -1.2 1.4 -1.1 -0.4 -1.9 1.8 -0.5 1 1.1M819.0 606.1l-1.2 4.7M822.2 605.6l-0.4 0.6 -0.5 0.5 -0.5 0.6 -0.6 0.4 -0.6 0.4 -0.3 0.4 -0.2 0.5 0 0.5 0.2 0.5 0.4 0.3 0.4 0.1 0.4 0 0.3 -0.1 0.3 -0.3 0.1 -0.3 0 -0.3 -0.1 -0.2 -0.2 -0.2 -0.2 -0.1 -0.3 0 -0.1 0.1M814.6 603.7l-1.2 1.1M812.9 605.1l2.7 1.2 0.6 3.9 -3.9 0.3 -0.9 3.3 -3.2 -1.6 -2.8 0.9 -3.8 -1.2 0.6 -3.6 2 -2 -0.1 -3.3 3.5 0.5 1.8 -3.3 3.4 2 0.1 2.9M812.9 605.1l-7.9 4.9M811.5 606.0l-0.1 4.1M811.5 606.0l-3.9 -1.5M811.5 602.7l0.3 -1.6M811.8 600.6l-1.7 1.3 -2.5 -1.4 1.4 -2.7 -1.5 -2.1 2 -1.3 0.5 -2.2 1.9 -2 1.7 1.9 0.4 2.2 1.9 1.2 -1.4 2.2 1.4 2.6 -2.4 1.5 -1.7 -1.2M811.8 600.6l0 -7.3M811.8 599.3l-2.3 -1.9M811.8 599.3l2.1 -2M806.8 599.8l-1.4 0 -1.3 0.2 -1.4 0.1 -1.3 0.3 -1.2 0.5 -0.8 0 -0.7 -0.2 -0.6 -0.4 -0.4 -0.6 -0.1 -0.6 0.1 -0.6 0.3 -0.4 0.4 -0.4 0.5 -0.1 0.4 0 0.4 0.2 0.3 0.3 0.1 0.3 0 0.3 -0.1 0.3 -0.2 0.2M806.8 598.4l-1.3 0.9 -1.9 -1.1 1.1 -1.9 -1.1 -1.6 1.5 -0.9 0.5 -1.6 1.4 -1.4 1.4 1.4 0.3 1.6 1.4 0.9 -1.1 1.6 1 1.9 -1.9 1.1 -1.3 -0.9M806.8 598.4l0.1 -5.4M809.3 601.5l0.1 -0.8 0 -0.9 0 -0.8 -0.1 -0.8 -0.1 -0.8 0 -0.5 0.2 -0.5 0.2 -0.3 0.4 -0.3 0.4 -0.2 0.4 0 0.3 0.1 0.3 0.2 0.2 0.2 0.1 0.3 0.1 0.3 -0.1 0.3 -0.1 0.2 -0.2 0.1 -0.2 0.1 -0.1 0M801.7 595.3l-1.5 0.5M799.9 595.9l1.2 1.3 -0.7 2.4 -2.3 -0.8 -1.6 1.6 -1.4 -1.6 -1.9 -0.1 -1.9 -1.5 1.3 -1.9 1.8 -0.7 0.8 -1.9 1.9 1.1 2 -1.6 1.5 2 -0.7 1.7M799.9 595.9l-6.1 0.9M798.8 596.1l-1.2 2.2M798.8 596.1l-1.9 -1.8M799.6 593.6l0.2 -1.6M799.8 591.6l-1.7 0.9 -2.1 -1.5 1.6 -2.3 -1.1 -2.1 1.9 -1 0.8 -1.9 1.9 -1.6 1.4 1.9 0.2 2 1.6 1.4 -1.6 1.8 0.9 2.5 -2.3 1.1 -1.5 -1.2M799.8 591.6l0.9 -6.7M800.0 590.4l-1.9 -2M800.0 590.4l2.2 -1.6M795.9 191.0l0.6 1.5 0.7 1.6 0.5 1.6 0.4 1.6 0.2 1.5 0.2 0.6 0.3 0.5 0.4 0.3 0.5 0.2 0.5 0 0.4 0 0.4 -0.2 0.2 -0.3 0.2 -0.3 0.1 -0.3 -0.1 -0.4 -0.1 -0.3 -0.2 -0.2 -0.2 -0.1 -0.2 -0.1 -0.2 0M795.9 191.0l-1.2 0.1 -1.1 0.2 -1.1 0.3 -1.1 0.4 -1 0.5 -0.6 0.2 -0.5 -0.1 -0.6 -0.1 -0.4 -0.3 -0.3 -0.4 -0.2 -0.4 0 -0.5 0.1 -0.4 0.2 -0.3 0.2 -0.3 0.3 -0.2 0.3 0 0.3 0 0.2 0.1 0.2 0.2 0.1 0.2M795.9 191.0l-1.4 -1.4 -1.3 -1.4 -1.4 -1.2 -1.5 -1 -1.7 -0.9 -0.4 -0.4 -0.3 -0.4 -0.2 -0.6 0.1 -0.5 0.1 -0.5 0.3 -0.4 0.4 -0.3 0.4 -0.2 0.4 0 0.4 0.1 0.3 0.1 0.2 0.2 0.1 0.3 0 0.2 0 0.3 -0.1 0.2M865.2 165.8l-0.7 -1.4M864.2 164.0l2.4 0.3 1.8 -2.7 -2.8 -1.8 0.4 -2.9 -2.8 -0.2 -1.7 -1.7 -3.2 -0.8 -0.8 2.9 0.8 2.3 -1.2 2.4 2.8 1.1 0.1 3.2 3.2 0 1 -2.1M864.2 164.0l-4.1 -7M863.5 162.8l1.3 -3.1M863.5 162.8l-3.3 -0.6M864.0 166.1l-1 1.2M862.7 167.7l-1 -2.2 -3.5 -0.1 0 3.4 -2.8 1.3 1.4 2.4 -0.6 2.5 0.9 3 2.8 -0.8 1.6 -1.8 2.7 0 -0.3 -3.1 2.9 -1.6 -1.6 -3 -2.5 0M862.7 167.7l-4.1 7.3M862.0 169.0l-3.5 0.5M862.0 169.0l1.1 3.3M859.1 167.3l-1.6 -0.8 -1.6 -0.9 -1.6 -1 -1.4 -1 -1.3 -1.2 -0.7 -0.4 -0.9 0 -0.7 0.3 -0.5 0.6 -0.2 0.6 0.2 0.7 0.3 0.4 0.5 0.3 0.6 0 0.4 -0.2 0.4 -0.3 0.1 -0.4 -0.1 -0.4 -0.2 -0.3 -0.3 -0.1 -0.3 0M859.0 168.7l-1.2 -1 -2 1 1 1.9 -1.2 1.6 1.4 1 0.3 1.7 1.3 1.5 1.4 -1.4 0.5 -1.5 1.5 -0.9 -1 -1.7 1.1 -1.8 -1.7 -1.2 -1.4 0.8M859.0 168.7l-0.3 5.4M862.0 166.5l-0.4 0.9 -0.5 0.9 -0.5 0.8 -0.5 0.7 -0.6 0.7 -0.3 0.5 -0.1 0.5 0.1 0.5 0.3 0.4 0.4 0.3 0.4 0.1 0.3 -0.1 0.4 -0.2 0.2 -0.2 0.1 -0.4 0 -0.3 -0.2 -0.2 -0.1 -0.2 -0.2 -0.1 -0.2 0 -0.2 0.1M854.3 168.4l-1.3 -1M852.6 167.1l2.7 -0.9 0.9 -3.7 -3.8 -0.7 -0.8 -3.3 -3.2 1.2 -2.7 -1.1 -3.8 0.8 0.5 3.6 1.8 2 -0.2 3.2 3.4 -0.1 1.5 3.4 3.4 -1.6 0.3 -2.8M852.6 167.1l-7.5 -5.5M851.3 166.1l0.1 -4M851.3 166.1l-3.9 1M850.1 168.7l-0.7 1.5M849.2 170.6l-1 -2.3 -3.3 0 -0.3 3.5 -2.7 1.4 1.2 2.5 -0.7 2.6 0.9 3.2 2.8 -1 1.6 -1.9 2.6 -0.1 -0.2 -3.2 2.9 -1.8 -1.4 -3 -2.4 0.1M849.2 170.6l-4.4 7.7M848.3 171.9l-3.4 0.7M848.3 171.9l1 3.5M845.4 168.7l0.1 1.3 0.1 1.3 0 1.2 -0.1 1.3 -0.2 1.2 0 0.7 0.3 0.6 0.5 0.4 0.5 0.1 0.6 -0.1 0.4 -0.3 0.2 -0.5 0 -0.5 -0.1 -0.4 -0.3 -0.3 -0.3 -0.1 -0.4 0 -0.2 0.2 -0.2 0.3 0 0.2 0.1 0.2M845.3 167.3l1.5 1 2.1 -1.2 -1.1 -2.2 1.4 -1.8 -1.8 -1.1 -0.4 -1.8 -1.7 -1.5 -1.8 1.6 -0.4 1.8 -1.7 1.2 1.4 1.7 -1.1 2.3 2.2 1 1.4 -1M845.3 167.3l0 -6.1M848.4 168.7l-0.3 -0.7 -0.3 -0.7 -0.4 -0.6 -0.4 -0.6 -0.5 -0.5 -0.3 -0.5 -0.1 -0.5 0.1 -0.5 0.2 -0.4 0.3 -0.3 0.4 -0.2 0.4 0 0.4 0 0.3 0.2 0.2 0.3 0.1 0.2 0 0.3 0 0.2 -0.2 0.2 -0.2 0.1 -0.1 0.1M839.8 169.1l-0.9 -1.4M838.7 167.4l2.1 -0.1 1.5 -2.6 -2.6 -1.2 0.2 -2.5 -2.6 0.2 -1.7 -1.3 -2.8 -0.3 -0.6 2.7 0.9 1.9 -1 2.2 2.6 0.6 0.3 2.8 2.9 -0.5 0.8 -1.9M838.7 167.4l-4.2 -5.5M838.0 166.4l0.9 -2.9M838.0 166.4l-3.1 0M838.5 169.3l0 1.6M838.6 171.5l-2.4 -1.2 -2.7 2.3 2.2 3 -1.2 3.1 2.6 1.2 1 2.7 2.5 2.2 1.7 -2.8 0.2 -2.8 2.1 -1.9 -2.1 -2.6 1.2 -3.5 -3.2 -1.5 -1.9 1.8M838.6 171.5l1.4 9.4M838.8 173.2l-2.3 2.9M838.8 173.2l3.1 2.1M832.5 171.9l-0.4 -1.5 -0.5 -1.5 -0.5 -1.4 -0.7 -1.3 -0.8 -1.2 -0.3 -1 0.2 -1 0.5 -0.8 0.8 -0.5 0.9 -0.2 0.8 0.2 0.6 0.5 0.3 0.6 0 0.7 -0.3 0.5 -0.5 0.4 -0.5 0.1 -0.5 0 -0.3 -0.2 -0.2 -0.4 0 -0.3M832.8 173.1l-1.3 -0.5 -1.4 1.3 1.3 1.4 -0.6 1.6 1.4 0.5 0.6 1.3 1.5 1 0.9 -1.5 -0.1 -1.4 1.1 -1.1 -1.2 -1.2 0.5 -1.8 -1.8 -0.6 -0.9 1M832.8 173.1l1 4.7M835.2 170.5l-0.2 0.8 -0.3 0.8 -0.3 0.8 -0.3 0.8 -0.5 0.6 -0.1 0.4 0 0.4 0.1 0.4 0.2 0.3 0.2 0.2 0.3 0.1 0.3 0.1 0.2 0 0.3 -0.1 0.1 -0.2 0.2 -0.2 0 -0.2 0 -0.2 -0.1 -0.1 0 -0.2 -0.2 0M827.7 174.5l-1 -1.2M826.4 173.0l2 -0.2 1 -2.6 -2.6 -1.1 -0.2 -2.5 -2.4 0.3 -1.8 -1.2 -2.8 0 -0.2 2.6 1.1 1.8 -0.6 2.3 2.6 0.5 0.7 2.7 2.7 -0.6 0.5 -2M826.4 173.0l-4.8 -5.2M825.6 172.1l0.5 -2.9M825.6 172.1l-3 0.1M824.1 176.1l-0.5 1.5M823.5 178.1l-2 -1.9 -3.5 1 1.2 3.3 -2.4 2.2 2.3 1.9 0.3 2.7 2.1 2.7 2.6 -1.7 1 -2.3 2.7 -0.8 -1.4 -3 2.3 -2.5 -2.7 -2.4 -2.5 0.8M823.5 178.1l-1.6 8.4M823.2 179.6l-3.4 1.6M823.2 179.6l2.4 2.9M819.3 177.4l-0.4 1.2 -0.3 1.1 -0.3 1.2 -0.1 1.2 0 1.2 -0.2 0.8 -0.4 0.6 -0.6 0.3 -0.7 0 -0.6 -0.2 -0.5 -0.5 -0.2 -0.5 0 -0.6 0.3 -0.4 0.4 -0.3 0.4 -0.1 0.4 0.1 0.3 0.2 0.1 0.3 0 0.4 -0.1 0.2M819.0 176.1l1.3 0.5 1.4 -1.3 -1.3 -1.5 0.7 -1.6 -1.5 -0.5 -0.7 -1.3 -1.6 -1 -1 1.7 0 1.4 -1.1 1.2 1.4 1.1 -0.4 2 1.8 0.4 1 -1.1M819.0 176.1l-1.2 -4.7M822.2 176.7l-0.4 -0.6 -0.5 -0.6 -0.5 -0.5 -0.6 -0.5 -0.6 -0.4 -0.3 -0.4 -0.2 -0.5 0 -0.5 0.2 -0.4 0.4 -0.3 0.4 -0.2 0.4 0 0.3 0.2 0.3 0.2 0.1 0.3 0 0.3 -0.1 0.3 -0.2 0.1 -0.2 0.1 -0.3 0 -0.1 -0.1M814.6 178.5l-1.2 -1.1M812.9 177.1l2.7 -1.1 0.6 -4 -3.9 -0.2 -0.9 -3.4 -3.2 1.6 -2.8 -0.8 -3.8 1.1 0.6 3.7 2 1.9 -0.1 3.3 3.5 -0.5 1.8 3.3 3.4 -2 0.1 -2.9M812.9 177.1l-7.9 -4.9M811.5 176.3l-0.1 -4.1M811.5 176.3l-3.9 1.4M811.5 179.6l0.3 1.6M811.8 181.6l-1.7 -1.2 -2.5 1.4 1.4 2.6 -1.5 2.2 2 1.3 0.5 2.1 1.9 2 1.7 -1.9 0.4 -2.1 1.9 -1.2 -1.4 -2.3 1.4 -2.5 -2.4 -1.6 -1.7 1.2M811.8 181.6l0 7.4M811.8 182.9l-2.3 1.9M811.8 182.9l2.1 2M806.8 182.5l-1.4 -0.1 -1.3 -0.1 -1.4 -0.2 -1.3 -0.3 -1.2 -0.4 -0.8 -0.1 -0.7 0.2 -0.6 0.5 -0.4 0.5 -0.1 0.6 0.1 0.6 0.3 0.5 0.4 0.3 0.5 0.1 0.4 0 0.4 -0.2 0.3 -0.3 0.1 -0.3 0 -0.3 -0.1 -0.3 -0.2 -0.1M806.8 183.8l-1.3 -0.9 -1.9 1.1 1.1 1.9 -1.1 1.6 1.5 1 0.5 1.6 1.4 1.4 1.4 -1.5 0.3 -1.5 1.4 -1 -1.1 -1.6 1 -1.9 -1.9 -1.1 -1.3 0.9M806.8 183.8l0.1 5.4M809.3 180.7l0.1 0.9 0 0.8 0 0.8 -0.1 0.8 -0.1 0.8 0 0.5 0.2 0.5 0.2 0.4 0.4 0.2 0.4 0.2 0.4 0 0.3 -0.1 0.3 -0.2 0.2 -0.2 0.1 -0.3 0.1 -0.3 -0.1 -0.2 -0.1 -0.2 -0.2 -0.2 -0.2 0 -0.1 0M801.7 187.0l-1.5 -0.6"/>
<path stroke-width="1.05" d="M799.9 186.4l1.2 -1.3 -0.7 -2.4 -2.3 0.8 -1.6 -1.7 -1.4 1.6 -1.9 0.2 -1.9 1.5 1.3 1.9 1.8 0.6 0.8 1.9 1.9 -1 2 1.5 1.5 -1.9 -0.7 -1.7M799.9 186.4l-6.1 -1M798.8 186.2l-1.2 -2.3M798.8 186.2l-1.9 1.7M799.6 188.7l0.2 1.6M799.8 190.6l-1.7 -0.9 -2.1 1.6 1.6 2.2 -1.1 2.1 1.9 1 0.8 1.9 1.9 1.6 1.4 -1.9 0.2 -2 1.6 -1.3 -1.6 -1.9 0.9 -2.5 -2.3 -1.1 -1.5 1.2M799.8 190.6l0.9 6.8M800.0 191.8l-1.9 2M800.0 191.8l2.2 1.6M941.2 591.3l-0.7 -1.6 -0.6 -1.6 -0.5 -1.6 -0.4 -1.5 -0.2 -1.6 -0.2 -0.6 -0.4 -0.4 -0.4 -0.3 -0.5 -0.2 -0.4 -0.1 -0.5 0.1 -0.3 0.2 -0.3 0.2 -0.2 0.3 0 0.4 0 0.3 0.1 0.3 0.2 0.2 0.2 0.2 0.2 0 0.2 0M941.2 591.3l1.1 -0.2 1.2 -0.2 1.1 -0.3 1.1 -0.4 0.9 -0.5 0.6 -0.1 0.6 0 0.5 0.2 0.4 0.3 0.3 0.4 0.2 0.4 0.1 0.4 -0.1 0.4 -0.2 0.4 -0.3 0.2 -0.3 0.2 -0.3 0.1 -0.3 -0.1 -0.2 -0.1 -0.2 -0.1 -0.1 -0.2M941.2 591.3l1.3 1.4 1.4 1.3 1.4 1.2 1.5 1.1 1.6 0.8 0.5 0.4 0.3 0.5 0.1 0.5 0 0.5 -0.2 0.5 -0.3 0.4 -0.3 0.3 -0.4 0.2 -0.4 0 -0.4 0 -0.3 -0.2 -0.2 -0.2 -0.1 -0.2 -0.1 -0.3 0.1 -0.2 0.1 -0.2M871.8 616.4l0.8 1.4M872.8 618.2l-2.3 -0.2 -1.8 2.6 2.7 1.8 -0.4 2.9 2.8 0.2 1.8 1.8 3.2 0.7 0.8 -2.9 -0.9 -2.3 1.3 -2.3 -2.8 -1.2 -0.2 -3.2 -3.1 0.1 -1.1 2M872.8 618.2l4.1 7M873.5 619.5l-1.2 3M873.5 619.5l3.4 0.6M873.1 616.2l1 -1.3M874.3 614.5l1.1 2.2 3.4 0.1 0.1 -3.3 2.7 -1.3 -1.4 -2.5 0.6 -2.4 -0.9 -3.1 -2.8 0.8 -1.6 1.9 -2.6 0 0.2 3.1 -2.8 1.6 1.6 3 2.4 -0.1M874.3 614.5l4.1 -7.3M875.1 613.2l3.4 -0.5M875.1 613.2l-1.2 -3.3M878.0 614.9l1.6 0.9 1.6 0.9 1.5 0.9 1.4 1.1 1.3 1.1 0.8 0.4 0.8 0 0.7 -0.3 0.5 -0.5 0.2 -0.7 -0.1 -0.6 -0.4 -0.5 -0.5 -0.3 -0.5 0 -0.5 0.2 -0.3 0.3 -0.1 0.4 0.1 0.4 0.2 0.3 0.3 0.1 0.2 0M878.0 613.6l1.3 0.9 1.9 -0.9 -0.9 -2 1.2 -1.6 -1.5 -1 -0.3 -1.6 -1.3 -1.6 -1.4 1.4 -0.4 1.6 -1.5 0.8 1 1.7 -1.2 1.9 1.8 1.2 1.3 -0.8M878.0 613.6l0.3 -5.5M875.0 615.7l0.5 -0.9 0.4 -0.8 0.5 -0.8 0.6 -0.8 0.6 -0.7 0.2 -0.4 0.1 -0.6 -0.1 -0.5 -0.3 -0.4 -0.3 -0.2 -0.4 -0.1 -0.4 0 -0.3 0.2 -0.2 0.3 -0.1 0.3 0 0.3 0.1 0.3 0.2 0.1 0.2 0.1 0.2 0 0.2 -0.1M882.8 613.8l1.2 1M884.5 615.1l-2.7 0.9 -0.9 3.7 3.8 0.7 0.8 3.3 3.2 -1.2 2.7 1.1 3.8 -0.8 -0.5 -3.5 -1.9 -2.1 0.3 -3.2 -3.4 0.2 -1.5 -3.4 -3.4 1.6 -0.3 2.7M884.5 615.1l7.4 5.6M885.7 616.1l-0.1 4M885.7 616.1l3.9 -1M886.9 613.5l0.7 -1.4M887.9 611.6l0.9 2.3 3.4 0.1 0.2 -3.6 2.8 -1.4 -1.3 -2.5 0.7 -2.6 -0.8 -3.1 -2.8 0.9 -1.6 2 -2.6 0.1 0.1 3.2 -2.8 1.7 1.4 3.1 2.4 -0.2M887.9 611.6l4.3 -7.6M888.7 610.3l3.4 -0.7M888.7 610.3l-1 -3.4M891.7 613.6l-0.1 -1.3 -0.1 -1.3 0 -1.3 0.1 -1.2 0.2 -1.2 0 -0.7 -0.4 -0.6 -0.4 -0.4 -0.6 -0.2 -0.5 0.2 -0.4 0.3 -0.3 0.4 0 0.5 0.2 0.4 0.2 0.3 0.4 0.1 0.3 0 0.3 -0.2 0.1 -0.2 0 -0.3 0 -0.2M891.7 614.9l-1.5 -0.9 -2.1 1.2 1.2 2.1 -1.4 1.8 1.8 1.1 0.4 1.8 1.7 1.6 1.7 -1.7 0.4 -1.8 1.8 -1.2 -1.4 -1.7 1 -2.2 -2.1 -1.1 -1.5 1M891.7 614.9l0.1 6.2M888.6 613.5l0.3 0.7 0.4 0.7 0.4 0.6 0.4 0.6 0.5 0.6 0.2 0.4 0.1 0.5 0 0.5 -0.3 0.4 -0.3 0.3 -0.4 0.2 -0.4 0.1 -0.3 -0.1 -0.3 -0.2 -0.3 -0.2 -0.1 -0.3 0 -0.3 0.1 -0.2 0.1 -0.2 0.2 -0.1 0.2 0M897.2 613.2l0.9 1.3M898.3 614.9l-2.1 0.1 -1.4 2.5 2.6 1.2 -0.2 2.6 2.5 -0.2 1.7 1.3 2.9 0.2 0.5 -2.6 -0.8 -1.9 0.9 -2.3 -2.5 -0.6 -0.4 -2.8 -2.9 0.5 -0.8 2M898.3 614.9l4.2 5.5M899.1 615.8l-1 2.9M899.1 615.8l3 0.1M898.5 612.9l0.1 -1.6M898.5 610.7l2.3 1.3 2.7 -2.4 -2.2 -3 1.3 -3.1 -2.6 -1.2 -1.1 -2.7 -2.5 -2.1 -1.7 2.7 -0.1 2.9 -2.1 1.9 2.1 2.6 -1.2 3.5 3.2 1.5 1.9 -1.9M898.5 610.7l-1.5 -9.4M898.2 609.1l2.3 -2.9M898.2 609.1l-3 -2.2M904.6 610.4l0.4 1.5 0.4 1.4 0.5 1.4 0.7 1.4 0.8 1.2 0.3 1 -0.1 0.9 -0.5 0.8 -0.8 0.6 -0.9 0.1 -0.8 -0.2 -0.6 -0.4 -0.3 -0.7 0 -0.6 0.3 -0.6 0.4 -0.4 0.5 -0.1 0.5 0.1 0.4 0.2 0.2 0.3 0 0.3M904.3 609.1l1.3 0.5 1.3 -1.3 -1.2 -1.4 0.6 -1.6 -1.4 -0.5 -0.7 -1.3 -1.4 -0.9 -0.9 1.4 0 1.5 -1.1 1.1 1.3 1.1 -0.5 1.8 1.7 0.6 1 -1M904.3 609.1l-1.1 -4.6M901.8 611.7l0.3 -0.8 0.2 -0.8 0.3 -0.8 0.4 -0.7 0.4 -0.7 0.1 -0.4 0.1 -0.4 -0.1 -0.3 -0.2 -0.3 -0.3 -0.3 -0.2 -0.1 -0.3 -0.1 -0.3 0.1 -0.2 0.1 -0.2 0.1 -0.1 0.2 -0.1 0.2 0 0.2 0.1 0.2 0.1 0.1 0.1 0.1M909.3 607.7l1.1 1.2M910.6 609.3l-2 0.2 -1 2.6 2.7 1 0.2 2.6 2.4 -0.4 1.8 1.2 2.8 0.1 0.1 -2.7 -1.1 -1.8 0.6 -2.3 -2.5 -0.4 -0.8 -2.7 -2.7 0.6 -0.5 2M910.6 609.3l4.8 5.2M911.5 610.2l-0.5 2.9M911.5 610.2l2.9 -0.1M913.0 606.2l0.5 -1.5M913.6 604.2l1.9 1.8 3.6 -0.9 -1.2 -3.4 2.4 -2.1 -2.4 -2 -0.2 -2.6 -2.1 -2.7 -2.7 1.6 -0.9 2.4 -2.8 0.8 1.4 2.9 -2.3 2.5 2.8 2.5 2.5 -0.8M913.6 604.2l1.5 -8.5M913.9 602.7l3.3 -1.6M913.9 602.7l-2.5 -3M917.7 604.9l0.4 -1.2 0.4 -1.2 0.2 -1.2 0.1 -1.2 0 -1.1 0.2 -0.8 0.5 -0.6 0.6 -0.3 0.7 -0.1 0.6 0.3 0.4 0.4 0.2 0.6 0 0.5 -0.2 0.5 -0.4 0.3 -0.5 0 -0.3 -0.1 -0.3 -0.2 -0.2 -0.3 0 -0.3 0.1 -0.2M918.1 606.1l-1.3 -0.5 -1.5 1.4 1.3 1.4 -0.7 1.7 1.6 0.5 0.7 1.3 1.6 0.9 1 -1.6 -0.1 -1.5 1.2 -1.2 -1.4 -1.1 0.4 -1.9 -1.9 -0.5 -0.9 1.1M918.1 606.1l1.2 4.7M914.8 605.6l0.5 0.6 0.5 0.5 0.5 0.6 0.5 0.4 0.6 0.4 0.4 0.4 0.2 0.5 -0.1 0.5 -0.2 0.5 -0.3 0.3 -0.4 0.1 -0.4 0 -0.4 -0.1 -0.2 -0.3 -0.1 -0.3 0 -0.3 0.1 -0.2 0.2 -0.2 0.2 -0.1 0.2 0 0.2 0.1M922.5 603.7l1.2 1.1M924.1 605.1l-2.6 1.2 -0.7 3.9 3.9 0.3 1 3.3 3.2 -1.6 2.7 0.9 3.9 -1.2 -0.7 -3.6 -2 -2 0.1 -3.3 -3.5 0.5 -1.8 -3.3 -3.3 2 -0.2 2.9M924.1 605.1l8 4.9M925.5 606.0l0.2 4.1M925.5 606.0l3.9 -1.5M925.5 602.7l-0.2 -1.6M925.3 600.6l1.6 1.3 2.5 -1.4 -1.3 -2.7 1.4 -2.1 -2 -1.3 -0.5 -2.2 -1.9 -2 -1.7 1.9 -0.4 2.2 -1.9 1.2 1.5 2.2 -1.4 2.6 2.4 1.5 1.7 -1.2M925.3 600.6l-0.1 -7.3M925.3 599.3l2.2 -1.9M925.3 599.3l-2.2 -2M930.2 599.8l1.4 0 1.4 0.2 1.3 0.1 1.3 0.3 1.3 0.5 0.7 0 0.8 -0.2 0.5 -0.4 0.4 -0.6 0.1 -0.6 -0.1 -0.6 -0.2 -0.4 -0.5 -0.4 -0.4 -0.1 -0.5 0 -0.4 0.2 -0.2 0.3 -0.2 0.3 0 0.3 0.2 0.3 0.1 0.2M930.2 598.4l1.3 0.9 1.9 -1.1 -1 -1.9 1 -1.6 -1.5 -0.9 -0.4 -1.6 -1.5 -1.4 -1.3 1.4 -0.3 1.6 -1.5 0.9 1.2 1.6 -1 1.9 1.8 1.1 1.3 -0.9M930.2 598.4l-0.1 -5.4M927.7 601.5l0 -0.8 -0.1 -0.9 0 -0.8 0.1 -0.8 0.2 -0.8 -0.1 -0.5 -0.1 -0.5 -0.3 -0.3 -0.3 -0.3 -0.4 -0.2 -0.4 0 -0.4 0.1 -0.3 0.2 -0.2 0.2 -0.1 0.3 0 0.3 0.1 0.3 0.1 0.2 0.1 0.1 0.2 0.1 0.2 0M935.3 595.3l1.5 0.5M937.2 595.9l-1.3 1.3 0.7 2.4 2.4 -0.8 1.5 1.6 1.4 -1.6 1.9 -0.1 2 -1.5 -1.4 -1.9 -1.7 -0.7 -0.8 -1.9 -2 1.1 -1.9 -1.6 -1.5 2 0.7 1.7M937.2 595.9l6 0.9M938.2 596.1l1.2 2.2M938.2 596.1l2 -1.8M937.4 593.6l-0.1 -1.6M937.2 591.6l1.7 0.9 2.1 -1.5 -1.5 -2.3 1.1 -2.1 -2 -1 -0.7 -1.9 -2 -1.6 -1.4 1.9 -0.1 2 -1.6 1.4 1.6 1.8 -1 2.5 2.4 1.1 1.4 -1.2M937.2 591.6l-0.9 -6.7M937.1 590.4l1.8 -2M937.1 590.4l-2.3 -1.6M1031.1 379.6l-1.4 0.4 -1.5 0.4 -1.3 0.5 -1.3 0.6 -1.2 0.7 -0.6 0.1 -0.5 0 -0.4 -0.1 -0.4 -0.2 -0.3 -0.3 -0.2 -0.4 0 -0.4 0 -0.3 0.2 -0.3 0.2 -0.2 0.2 -0.2 0.3 -0.1 0.2 0 0.2 0.1 0.2 0.1 0.1 0.2M1031.1 379.6l0.5 0.9 0.5 1 0.4 0.9 0.3 0.9 0.2 1 0.2 0.5 0.3 0.4 0.4 0.2 0.4 0.2 0.5 0 0.4 -0.1 0.3 -0.3 0.2 -0.2 0.2 -0.3 0 -0.4 0 -0.3 -0.2 -0.2 -0.1 -0.2 -0.2 -0.1 -0.2 0 -0.2 0M1031.1 379.6l1.7 0.2 1.7 0.3 1.6 0.3 1.5 0.5 1.5 0.7 0.5 0.1 0.5 0 0.4 -0.2 0.4 -0.3 0.2 -0.4 0.2 -0.4 0 -0.3 -0.1 -0.4 -0.2 -0.3 -0.2 -0.2 -0.3 -0.2 -0.2 0 -0.3 0 -0.2 0.2 -0.1 0.1 -0.1 0.2M1014.3 287.8l1.4 -0.2M1016.1 287.5l-1.6 -1.5 1 -2.9 3.2 0.8 2 -2.1 1.9 1.9 2.5 0 2.6 1.7 -1.8 2.4 -2.3 1 -1.1 2.3 -2.7 -1.2 -2.6 1.9 -2.1 -2.3 1 -2M1016.1 287.5l8.2 -1.5M1017.6 287.2l1.7 -2.8M1017.6 287.2l2.6 2M1014.3 288.0l-0.9 1M1013.1 289.3l1.9 0.2 0.8 2.5 -2.5 1 -0.3 2.5 -2.2 -0.3 -1.7 1.2 -2.5 0.3 0 -2.5 1 -1.8 -0.6 -2 2.4 -0.7 0.7 -2.6 2.6 0.4 0.4 1.8M1013.1 289.3l-4.6 5.3M1012.3 290.3l0.3 2.7M1012.3 290.3l-2.8 0M1015.2 293.4l1.4 0.8 1.4 0.9 1.5 0.7 1.5 0.6 1.5 0.5 0.6 0.3 0.4 0.5 0.2 0.6 -0.1 0.6 -0.2 0.5 -0.4 0.3 -0.4 0.2 -0.5 -0.1 -0.4 -0.1 -0.2 -0.3 -0.2 -0.3 0 -0.4 0.1 -0.3 0.2 -0.2 0.3 -0.1 0.2 0.1M1014.4 294.4l1.4 0 0.7 1.7 -1.7 0.8 0 1.7 -1.5 -0.2 -1.1 0.9 -1.7 0.2 -0.3 -1.6 0.6 -1.3 -0.5 -1.4 1.6 -0.5 0.3 -1.8 1.8 0.2 0.4 1.3M1014.4 294.4l-2.8 3.7M1014.8 290.7l-0.5 0.4 -0.5 0.5 -0.4 0.5 -0.4 0.5 -0.3 0.5 -0.3 0.3 -0.5 0.2 -0.4 0 -0.4 -0.1 -0.3 -0.3 -0.2 -0.3 0 -0.3 0 -0.4 0.2 -0.2 0.3 -0.2 0.2 0 0.3 0 0.2 0.2 0.1 0.1 0 0.2 0 0.2M1016.0 297.3l1.3 0.5M1017.7 298.0l-0.4 -2 2.1 -1.9 1.7 2.2 2.5 -0.7 0.4 2.3 1.7 1.3 0.9 2.5 -2.4 1.1 -2 -0.4 -1.9 1.4 -1.3 -2.2 -2.7 0.3 -0.3 -2.8 1.7 -1.1M1017.7 298.0l6.3 2.6M1018.8 298.4l2.5 -1.4M1018.8 298.4l0.8 2.8M1016.8 299.5l-1.3 0.7M1015.1 300.4l2.2 1.3 0 3.4 -3.3 -0.2 -1.4 2.8 -2.3 -1.6 -2.4 0.6 -3 -1.1 0.9 -3 1.8 -1.6 0.1 -2.8 3 0.5 1.8 -2.7 2.8 1.9 -0.2 2.5M1015.1 300.4l-7.2 3.7M1013.8 301.1l-0.6 3.4M1013.8 301.1l-3.2 -1.5M1019.0 304.0l-0.9 0.8 -1 0.8 -1 0.7 -1.1 0.7 -1.1 0.4 -0.5 0.5 -0.3 0.6 0 0.6 0.2 0.5 0.5 0.4 0.5 0.1 0.5 -0.1 0.4 -0.4 0.2 -0.4 -0.1 -0.4 -0.1 -0.3 -0.3 -0.2 -0.3 0 -0.3 0.1 -0.2 0.1 -0.1 0.3"/>
<path stroke-width="1.05" d="M1020.3 304.2l-0.6 -1.3 1.2 -1.5 1.5 1.2 1.6 -0.8 0.6 1.5 1.4 0.6 1 1.6 -1.5 1 -1.4 0 -1.1 1.2 -1.2 -1.3 -1.9 0.6 -0.6 -1.8 1 -1M1020.3 304.2l4.8 0.9M1017.7 301.6l0.7 0.2 0.6 0.3 0.5 0.3 0.6 0.3 0.5 0.4 0.4 0.2 0.4 0 0.5 -0.1 0.3 -0.3 0.1 -0.4 0.1 -0.3 -0.1 -0.4 -0.2 -0.2 -0.3 -0.2 -0.3 0 -0.2 0 -0.2 0.2 -0.1 0.2 0 0.2 0 0.1 0.1 0.2M1021.0 307.8l1.2 0.8M1022.5 308.7l-0.3 -1.8 1.9 -1.5 1.5 1.9 2.2 -0.5 0.3 2.1 1.5 1.2 0.8 2.2 -2.1 0.8 -1.8 -0.4 -1.7 1.2 -1.1 -2 -2.5 0.2 -0.2 -2.4 1.5 -1M1022.5 308.7l5.6 2.5M1023.5 309.1l2.3 -1.1M1023.5 309.1l0.7 2.5M1021.7 309.9l-0.9 1.1M1020.5 311.3l1.9 0.4 0.5 2.5 -2.5 0.7 -0.6 2.3 -2.1 -0.5 -1.7 1 -2.5 0 0.2 -2.4 1.2 -1.7 -0.4 -2 2.4 -0.4 0.9 -2.5 2.5 0.7 0.2 1.9M1020.5 311.3l-4.9 4.5M1019.6 312.1l0.1 2.7M1019.6 312.1l-2.7 -0.3M1022.5 314.9l1 0.3 1 0.4 0.9 0.3 1 0.2 1 0.1 0.6 0.2 0.5 0.5 0.2 0.7 0 0.6 -0.4 0.5 -0.5 0.3 -0.5 0 -0.5 -0.2 -0.3 -0.4 -0.1 -0.4 0.1 -0.4 0.2 -0.3 0.3 -0.1 0.4 0 0.2 0.2 0.1 0.2M1021.4 315.5l1.3 0.6 -0.1 2 -2 0 -0.9 1.6 -1.4 -0.8 -1.5 0.4 -1.8 -0.6 0.6 -1.8 1.2 -0.9 0.1 -1.7 1.8 0.3 1.2 -1.7 1.7 1.1 -0.2 1.5M1021.4 315.5l-4.5 2.3M1022.2 312.2l-0.4 0.5 -0.4 0.4 -0.3 0.5 -0.3 0.5 -0.3 0.5 -0.3 0.3 -0.3 0.2 -0.4 0.1 -0.4 -0.1 -0.3 -0.2 -0.1 -0.3 -0.1 -0.3 0 -0.2 0.2 -0.3 0.2 -0.1 0.2 -0.1 0.2 0 0.2 0.1 0.1 0.1 0 0.2 0 0.1M1022.9 320.5l1.2 0.8M1024.4 321.5l0.2 -1.9 2.5 -1 1.1 2.7 2.5 0.3 -0.3 2.3 1.2 1.7 0.2 2.7 -2.6 0.1 -1.9 -1.1 -2.2 0.6 -0.5 -2.5 -2.7 -0.7 0.5 -2.7 2 -0.5M1024.4 321.5l5.2 4.8M1025.3 322.4l2.8 -0.4M1025.3 322.4l-0.1 2.9M1023.0 321.6l-0.7 1.2M1022.2 323.2l1.9 -0.4 1.8 1.9 -2 1.7 0.7 2.3 -2.2 0.4 -1.1 1.6 -2.2 1 -1.1 -2.2 0.2 -1.9 -1.4 -1.7 2 -1.3 -0.4 -2.5 2.6 -0.4 1.2 1.5M1022.2 323.2l-2.2 6M1021.8 324.3l1.5 2.3M1021.8 324.3l-2.6 0.9M1024.3 326.6l-1.6 -0.4 -1.7 -0.2 -1.6 -0.2 -1.6 0 -1.5 0.2 -0.7 -0.1 -0.6 -0.3 -0.4 -0.5 -0.1 -0.6 0.1 -0.6 0.3 -0.4 0.5 -0.3 0.5 0 0.4 0.1 0.3 0.3 0.2 0.3 0 0.4 -0.2 0.3 -0.2 0.2 -0.3 0 -0.2 0M1025.5 326.9l-0.4 -1.2 1.2 -1.3 1.3 1.2 1.5 -0.6 0.5 1.4 1.2 0.6 0.8 1.5 -1.4 0.8 -1.4 0 -1 1 -1.1 -1.3 -1.7 0.4 -0.4 -1.7 0.9 -0.8M1025.5 326.9l4.4 1.1M1023.5 324.0l0.9 0.5 0.8 0.5 0.8 0.6 0.8 0.6 0.6 0.7 0.4 0.2 0.3 0.1 0.4 0 0.3 -0.1 0.3 -0.2 0.2 -0.3 0.1 -0.3 0 -0.3 -0.1 -0.2 -0.2 -0.2 -0.1 -0.1 -0.2 -0.1 -0.2 0 -0.2 0.1 -0.1 0.1 -0.1 0.1M1026.7 332.3l1.2 0.8M1028.2 333.3l-0.1 -1.8 2.1 -1.1 1.3 2.2 2.3 -0.1 0.1 2.1 1.4 1.4 0.6 2.3 -2.3 0.4 -1.8 -0.7 -1.9 0.7 -0.9 -2.1 -2.5 -0.3 0.1 -2.4 1.6 -0.6M1028.2 333.3l5.4 3.5M1029.2 333.9l2.4 -0.7M1029.2 333.9l0.4 2.5M1027.3 334.1l-0.9 1.1M1026.1 335.6l2.4 0.3 1.3 3.1 -3.1 1.1 -0.1 3 -2.8 -0.5 -1.9 1.4 -3.2 0 -0.3 -3 1.1 -2.1 -1 -2.6 3 -0.6 0.5 -3.1 3.3 0.7 0.8 2.3M1026.1 335.6l-5.2 6M1025.2 336.6l0.7 3.4M1025.2 336.6l-3.5 -0.1M1028.0 338.7l1.2 0.8 1.2 0.9 1.2 0.7 1.3 0.6 1.3 0.5 0.8 0.6 0.5 0.9 -0.1 0.9 -0.4 0.8 -0.7 0.4 -0.8 0 -0.7 -0.3 -0.4 -0.6 0 -0.7 0.2 -0.5 0.4 -0.4 0.5 -0.1 0.5 0.2 0.2 0.3 0.1 0.4 -0.1 0.3M1026.8 339.0l1 0.9 -0.5 1.7 -1.7 -0.5 -1.1 1.2 -1.1 -1 -1.3 0 -1.5 -0.8 0.9 -1.4 1.2 -0.6 0.5 -1.4 1.5 0.6 1.4 -1.2 1.2 1.3 -0.5 1.2M1026.8 339.0l-4.4 1M1027.8 336.0l-0.7 0.3 -0.6 0.4 -0.6 0.3 -0.5 0.4 -0.5 0.4 -0.4 0.3 -0.4 0 -0.4 0 -0.4 -0.2 -0.2 -0.2 -0.2 -0.3 -0.1 -0.3 0.1 -0.3 0.1 -0.3 0.2 -0.2 0.2 -0.1 0.2 0 0.2 0 0.2 0.1 0.1 0.1 0 0.2M1027.9 344.2l1.4 0.4M1029.7 344.8l-0.2 -2.4 2.6 -1.9 1.8 2.7 2.9 -0.6 0.2 2.8 1.8 1.7 0.8 3 -2.9 1 -2.3 -0.6 -2.4 1.4 -1.2 -2.7 -3.2 0.1 0 -3.3 2.1 -1.2M1029.7 344.8l7 3.7M1030.9 345.5l3.1 -1.5M1030.9 345.5l0.6 3.3M1027.9 346.4l-1 1M1026.6 347.7l2.2 0.4 1.2 2.9 -2.9 1 -0.2 2.7 -2.5 -0.5 -1.9 1.3 -2.9 0.1 -0.3 -2.9 1.1 -1.9 -0.9 -2.4 2.8 -0.6 0.6 -2.9 3 0.7 0.7 2.1M1026.6 347.7l-5 5.6M1025.7 348.7l0.6 3.2M1025.7 348.7l-3.2 -0.1M1028.3 350.6l-1.3 -0.4 -1.3 -0.3 -1.3 -0.2 -1.3 -0.1 -1.3 0 -0.5 -0.1 -0.5 -0.3 -0.3 -0.5 -0.1 -0.5 0.1 -0.4 0.3 -0.4 0.4 -0.2 0.4 -0.1 0.4 0.1 0.2 0.2 0.2 0.3 0 0.3 -0.1 0.3 -0.1 0.1 -0.3 0.1 -0.1 0M1029.6 350.8l-0.6 -1.2 1 -1.5 1.5 1.1 1.5 -0.8 0.7 1.3 1.3 0.5 1 1.4 -1.3 1.1 -1.4 0.1 -1 1.2 -1.2 -1.2 -1.7 0.6 -0.7 -1.6 0.9 -1M1029.6 350.8l4.5 0.6M1028.0 348.0l0.9 0.2 0.9 0.2 0.9 0.2 0.8 0.4 0.7 0.4 0.4 0.1 0.3 0 0.3 -0.2 0.3 -0.2 0.1 -0.2 0.1 -0.3 -0.1 -0.3 -0.1 -0.2 -0.1 -0.2 -0.2 0 -0.2 -0.1 -0.2 0.1 -0.2 0.1 0 0.1 -0.1 0.1 0 0.2M1029.8 355.8l1.2 0.8M1031.4 356.9l-0.1 -2.3 2.8 -1.2 1.6 2.8 2.8 0.1 0 2.6 1.7 1.9 0.5 2.9 -2.9 0.4 -2.2 -1.1 -2.4 0.9 -1 -2.8 -3.2 -0.5 0.3 -3 2.1 -0.7M1031.4 356.9l6.6 4.8M1032.6 357.7l3.1 -0.7M1032.6 357.7l0.3 3.2M1030.5 358.0l-0.9 1.1M1029.4 359.4l1.9 0.3 0.8 2.6 -2.6 0.9 -0.4 2.5 -2.2 -0.5 -1.8 1.1 -2.6 0.1 0 -2.6 1.1 -1.7 -0.6 -2.2 2.5 -0.5 0.8 -2.6 2.6 0.6 0.5 2M1029.4 359.4l-4.9 5M1028.5 360.3l0.3 2.8M1028.5 360.3l-2.9 -0.2M1031.3 361.8l1.7 -0.3 1.6 -0.3 1.7 -0.1 1.6 0 1.6 0.2 0.7 -0.1 0.6 -0.4 0.4 -0.5 0.1 -0.7 -0.1 -0.6 -0.3 -0.5 -0.5 -0.3 -0.4 -0.1 -0.5 0.1 -0.3 0.3 -0.2 0.4 -0.1 0.3 0.1 0.4 0.2 0.2 0.3 0.1 0.2 0M1030.3 362.6l1.2 0.3 0.2 1.7 -1.6 0.3 -0.5 1.4 -1.3 -0.5 -1.2 0.6 -1.5 -0.3 0.2 -1.5 0.8 -1 -0.1 -1.3 1.5 -0.1 0.7 -1.5 1.6 0.6 0 1.3M1030.3 362.6l-3.3 2.5M1030.8 359.2l-0.7 0.2 -0.7 0.3 -0.7 0.3 -0.7 0.4 -0.5 0.4 -0.4 0.1 -0.3 0.1 -0.4 -0.1 -0.2 -0.1 -0.3 -0.2 -0.1 -0.3 -0.1 -0.2 0 -0.3 0.1 -0.2 0.2 -0.2 0.1 -0.1 0.2 0 0.2 0 0.1 0 0.1 0.1 0.1 0.1M1031.2 367.9l1.2 0.7M1032.8 368.7l-0.6 -1.6 1.8 -1.6 1.7 1.7 2.1 -0.6 0.5 1.9 1.6 1 1 2 -2 1 -1.8 -0.3 -1.6 1.2 -1.3 -1.7 -2.4 0.3 -0.4 -2.3 1.4 -1M1032.8 368.7l5.8 2M1033.8 369.0l2.1 -1.2M1033.8 369.0l0.9 2.3M1030.8 370.4l-0.9 1M1029.7 371.6l1.5 0.4 0.5 1.9 -1.9 0.5 -0.3 1.9 -1.7 -0.5 -1.3 0.8 -1.9 -0.1 0 -1.9 0.8 -1.2 -0.3 -1.7 1.8 -0.2 0.6 -1.9 1.9 0.6 0.3 1.4M1029.7 371.6l-3.6 3.5M1029.1 372.3l0.2 2.1M1029.1 372.3l-2.1 -0.3M1030.6 373.7l-1.6 -0.5 -1.5 -0.4 -1.6 -0.3 -1.5 -0.2 -1.5 0.1 -0.7 -0.2 -0.6 -0.5 -0.3 -0.5 -0.1 -0.7 0.3 -0.5 0.4 -0.4 0.5 -0.2 0.5 0 0.4 0.2 0.3 0.3 0.1 0.4 -0.1 0.4 -0.2 0.3 -0.3 0.1 -0.2 0 -0.3 -0.1M1031.7 374.3l-0.2 -1.5 1.7 -1.3 1.3 1.7 1.9 -0.3 0.2 1.8 1.3 1 0.7 1.9 -1.9 0.7 -1.6 -0.4 -1.5 0.9 -0.9 -1.7 -2.2 0.1 -0.1 -2.1 1.3 -0.8M1031.7 374.3l4.9 2.3M1030.8 371.1l0.6 0.3 0.6 0.3 0.5 0.4 0.6 0.4 0.4 0.5 0.5 0.3 0.5 0.1 0.5 -0.2 0.4 -0.3 0.2 -0.4 0.1 -0.4 -0.1 -0.4 -0.3 -0.3 -0.3 -0.2 -0.3 0 -0.3 0.1 -0.2 0.2 -0.1 0.2 0 0.3 0.1 0.1 0.1 0.2M1031.1 402.6l-1.4 -0.4 -1.5 -0.4 -1.3 -0.4 -1.3 -0.6 -1.2 -0.7 -0.6 -0.2 -0.5 0 -0.4 0.1 -0.4 0.3 -0.3 0.3 -0.2 0.3 0 0.4 0 0.4 0.2 0.3 0.2 0.2 0.2 0.1 0.3 0.1 0.2 0 0.2 -0.1 0.2 -0.1 0.1 -0.1M1031.1 402.6l0.5 -0.9 0.5 -0.9 0.4 -1 0.3 -0.9 0.2 -0.9 0.2 -0.5 0.3 -0.4 0.4 -0.3 0.4 -0.1 0.5 0 0.4 0.1 0.3 0.2 0.2 0.3 0.2 0.3 0 0.3 0 0.3 -0.2 0.2 -0.1 0.2 -0.2 0.1 -0.2 0.1 -0.2 -0.1M1031.1 402.6l1.7 -0.2 1.7 -0.2 1.6 -0.4 1.5 -0.5 1.5 -0.7 0.5 -0.1 0.5 0.1 0.4 0.1 0.4 0.3 0.2 0.4 0.2 0.4 0 0.4 -0.1 0.4 -0.2 0.3 -0.2 0.2 -0.3 0.1 -0.2 0 -0.3 0 -0.2 -0.1 -0.1 -0.2 -0.1 -0.1M1014.3 494.5l1.4 0.2M1016.1 494.8l-1.6 1.5 1 2.9 3.2 -0.9 2 2.1 1.9 -1.8 2.5 -0.1 2.6 -1.7 -1.8 -2.4 -2.3 -0.9 -1.1 -2.4 -2.7 1.2 -2.6 -1.9 -2.1 2.3 1 2.1M1016.1 494.8l8.2 1.4M1017.6 495.0l1.7 2.8M1017.6 495.0l2.6 -2M1014.3 494.3l-0.9 -1.1M1013.1 492.9l1.9 -0.1 0.8 -2.5 -2.5 -1.1 -0.3 -2.4 -2.2 0.3 -1.7 -1.3 -2.5 -0.2 0 2.4 1 1.8 -0.6 2.1 2.4 0.6 0.7 2.7 2.6 -0.4 0.4 -1.9M1013.1 492.9l-4.6 -5.2M1012.3 492.0l0.3 -2.8M1012.3 492.0l-2.8 -0.1M1015.2 488.9l1.4 -0.9 1.4 -0.9 1.5 -0.7 1.5 -0.6 1.5 -0.4 0.6 -0.4 0.4 -0.5 0.2 -0.5 -0.1 -0.6 -0.2 -0.5 -0.4 -0.4 -0.4 -0.1 -0.5 0 -0.4 0.2 -0.2 0.2 -0.2 0.4 0 0.3 0.1 0.3 0.2 0.2 0.3 0.1 0.2 0M1014.4 487.9l1.4 -0.1 0.7 -1.7 -1.7 -0.7 0 -1.7 -1.5 0.1 -1.1 -0.9 -1.7 -0.2 -0.3 1.7 0.6 1.2 -0.5 1.4 1.6 0.5 0.3 1.8 1.8 -0.2 0.4 -1.2M1014.4 487.9l-2.8 -3.7M1014.8 491.5l-0.5 -0.4 -0.5 -0.4 -0.4 -0.5 -0.4 -0.5 -0.3 -0.5 -0.3 -0.4 -0.5 -0.2 -0.4 0 -0.4 0.1 -0.3 0.3 -0.2 0.3 0 0.4 0 0.3 0.2 0.2 0.3 0.2 0.2 0 0.3 0 0.2 -0.1 0.1 -0.2 0 -0.2 0 -0.1M1016.0 485.0l1.3 -0.6M1017.7 484.3l-0.4 2 2.1 1.8 1.7 -2.1 2.5 0.6 0.4 -2.3 1.7 -1.3 0.9 -2.5 -2.4 -1 -2 0.3 -1.9 -1.4 -1.3 2.2 -2.7 -0.3 -0.3 2.8 1.7 1.2M1017.7 484.3l6.3 -2.6M1018.8 483.8l2.5 1.5M1018.8 483.8l0.8 -2.8M1016.8 482.7l-1.3 -0.6M1015.1 481.8l2.2 -1.3 0 -3.4 -3.3 0.2 -1.4 -2.7 -2.3 1.5 -2.4 -0.5 -3 1 0.9 3 1.8 1.6 0.1 2.8 3 -0.5 1.8 2.8 2.8 -2 -0.2 -2.5M1015.1 481.8l-7.2 -3.7M1013.8 481.2l-0.6 -3.5M1013.8 481.2l-3.2 1.5M1019.0 478.3l-0.9 -0.9 -1 -0.8 -1 -0.7 -1.1 -0.6 -1.1 -0.5 -0.5 -0.4 -0.3 -0.6 0 -0.6 0.2 -0.6 0.5 -0.3 0.5 -0.1 0.5 0.1 0.4 0.3 0.2 0.4 -0.1 0.4 -0.1 0.3 -0.3 0.2 -0.3 0.1 -0.3 -0.1 -0.2 -0.2 -0.1 -0.2M1020.3 478.0l-0.6 1.3 1.2 1.5 1.5 -1.2 1.6 0.8 0.6 -1.5 1.4 -0.6 1 -1.5 -1.5 -1.1 -1.4 0 -1.1 -1.2 -1.2 1.3 -1.9 -0.6 -0.6 1.8 1 1M1020.3 478.0l4.8 -0.8M1017.7 480.6l0.7 -0.2 0.6 -0.2 0.5 -0.3 0.6 -0.4 0.5 -0.3 0.4 -0.2 0.4 -0.1 0.5 0.2 0.3 0.3 0.1 0.3 0.1 0.4 -0.1 0.3 -0.2 0.3 -0.3 0.1 -0.3 0.1 -0.2 -0.1 -0.2 -0.1 -0.1 -0.2 0 -0.2 0 -0.2 0.1 -0.1M1021.0 474.4l1.2 -0.7M1022.5 473.5l-0.3 1.8 1.9 1.5 1.5 -1.9 2.2 0.5 0.3 -2.1 1.5 -1.1 0.8 -2.2 -2.1 -0.9 -1.8 0.4 -1.7 -1.1 -1.1 1.9 -2.5 -0.2 -0.2 2.5 1.5 0.9"/>
<path stroke-width="1.05" d="M1022.5 473.5l5.6 -2.5M1023.5 473.1l2.3 1.2M1023.5 473.1l0.7 -2.5M1021.7 472.3l-0.9 -1.1M1020.5 470.9l1.9 -0.3 0.5 -2.5 -2.5 -0.8 -0.6 -2.3 -2.1 0.5 -1.7 -1 -2.5 0.1 0.2 2.4 1.2 1.6 -0.4 2.1 2.4 0.3 0.9 2.5 2.5 -0.7 0.2 -1.9M1020.5 470.9l-4.9 -4.5M1019.6 470.1l0.1 -2.7M1019.6 470.1l-2.7 0.3M1022.5 467.4l1 -0.4 1 -0.4 0.9 -0.2 1 -0.2 1 -0.1 0.6 -0.3 0.5 -0.5 0.2 -0.6 0 -0.7 -0.4 -0.5 -0.5 -0.3 -0.5 0 -0.5 0.2 -0.3 0.4 -0.1 0.4 0.1 0.4 0.2 0.3 0.3 0.1 0.4 0 0.2 -0.1 0.1 -0.2M1021.4 466.8l1.3 -0.7 -0.1 -2 -2 0 -0.9 -1.6 -1.4 0.8 -1.5 -0.3 -1.8 0.5 0.6 1.8 1.2 1 0.1 1.6 1.8 -0.2 1.2 1.6 1.7 -1.1 -0.2 -1.4M1021.4 466.8l-4.5 -2.3M1022.2 470.0l-0.4 -0.4 -0.4 -0.5 -0.3 -0.4 -0.3 -0.5 -0.3 -0.6 -0.3 -0.3 -0.3 -0.2 -0.4 -0.1 -0.4 0.1 -0.3 0.2 -0.1 0.3 -0.1 0.3 0 0.3 0.2 0.2 0.2 0.2 0.2 0.1 0.2 -0.1 0.2 0 0.1 -0.2 0 -0.1 0 -0.2M1022.9 461.7l1.2 -0.7M1024.4 460.7l0.2 2 2.5 0.9 1.1 -2.6 2.5 -0.3 -0.3 -2.3 1.2 -1.8 0.2 -2.7 -2.6 0 -1.9 1.1 -2.2 -0.6 -0.5 2.5 -2.7 0.7 0.5 2.6 2 0.5M1024.4 460.7l5.2 -4.7M1025.3 459.9l2.8 0.4M1025.3 459.9l-0.1 -2.9M1023.0 460.6l-0.7 -1.2M1022.2 459.0l1.9 0.5 1.8 -2 -2 -1.7 0.7 -2.3 -2.2 -0.4 -1.1 -1.6 -2.2 -0.9 -1.1 2.2 0.2 1.9 -1.4 1.6 2 1.3 -0.4 2.5 2.6 0.4 1.2 -1.5M1022.2 459.0l-2.2 -6M1021.8 458.0l1.5 -2.4M1021.8 458.0l-2.6 -0.9M1024.3 455.7l-1.6 0.3 -1.7 0.3 -1.6 0.1 -1.6 0 -1.5 -0.2 -0.7 0.1 -0.6 0.3 -0.4 0.6 -0.1 0.5 0.1 0.6 0.3 0.4 0.5 0.3 0.5 0.1 0.4 -0.2 0.3 -0.3 0.2 -0.3 0 -0.4 -0.2 -0.2 -0.2 -0.2 -0.3 -0.1 -0.2 0M1025.5 455.4l-0.4 1.2 1.2 1.3 1.3 -1.2 1.5 0.6 0.5 -1.4 1.2 -0.6 0.8 -1.5 -1.4 -0.9 -1.4 0.1 -1 -1 -1.1 1.2 -1.7 -0.4 -0.4 1.7 0.9 0.9M1025.5 455.4l4.4 -1.1M1023.5 458.2l0.9 -0.5 0.8 -0.5 0.8 -0.5 0.8 -0.7 0.6 -0.6 0.4 -0.3 0.3 -0.1 0.4 0 0.3 0.2 0.3 0.2 0.2 0.2 0.1 0.3 0 0.3 -0.1 0.3 -0.2 0.1 -0.1 0.2 -0.2 0 -0.2 0 -0.2 0 -0.1 -0.1 -0.1 -0.2M1026.7 449.9l1.2 -0.7M1028.2 449.0l-0.1 1.7 2.1 1.1 1.3 -2.1 2.3 0 0.1 -2 1.4 -1.4 0.6 -2.4 -2.3 -0.3 -1.8 0.7 -1.9 -0.8 -0.9 2.1 -2.5 0.3 0.1 2.4 1.6 0.7M1028.2 449.0l5.4 -3.6M1029.2 448.4l2.4 0.6M1029.2 448.4l0.4 -2.6M1027.3 448.1l-0.9 -1.1M1026.1 446.7l2.4 -0.4 1.3 -3.1 -3.1 -1.1 -0.1 -3 -2.8 0.6 -1.9 -1.4 -3.2 -0.1 -0.3 3 1.1 2.1 -1 2.6 3 0.6 0.5 3.2 3.3 -0.7 0.8 -2.3M1026.1 446.7l-5.2 -6.1M1025.2 445.6l0.7 -3.4M1025.2 445.6l-3.5 0.1M1028.0 443.6l1.2 -0.9 1.2 -0.8 1.2 -0.8 1.3 -0.6 1.3 -0.4 0.8 -0.6 0.5 -0.9 -0.1 -1 -0.4 -0.7 -0.7 -0.4 -0.8 -0.1 -0.7 0.4 -0.4 0.6 0 0.6 0.2 0.6 0.4 0.3 0.5 0.1 0.5 -0.2 0.2 -0.3 0.1 -0.4 -0.1 -0.3M1026.8 443.3l1 -0.9 -0.5 -1.7 -1.7 0.4 -1.1 -1.2 -1.1 1 -1.3 0 -1.5 0.9 0.9 1.4 1.2 0.6 0.5 1.4 1.5 -0.6 1.4 1.2 1.2 -1.3 -0.5 -1.2M1026.8 443.3l-4.4 -1.1M1027.8 446.2l-0.7 -0.3 -0.6 -0.3 -0.6 -0.4 -0.5 -0.4 -0.5 -0.4 -0.4 -0.2 -0.4 -0.1 -0.4 0 -0.4 0.2 -0.2 0.2 -0.2 0.3 -0.1 0.3 0.1 0.3 0.1 0.3 0.2 0.2 0.2 0.1 0.2 0 0.2 0 0.2 -0.1 0.1 -0.1 0 -0.1M1027.9 438.1l1.4 -0.5M1029.7 437.4l-0.2 2.4 2.6 2 1.8 -2.7 2.9 0.5 0.2 -2.8 1.8 -1.6 0.8 -3.1 -2.9 -1 -2.3 0.6 -2.4 -1.4 -1.2 2.7 -3.2 -0.1 0 3.3 2.1 1.2M1029.7 437.4l7 -3.7M1030.9 436.8l3.1 1.4M1030.9 436.8l0.6 -3.4M1027.9 435.8l-1 -0.9M1026.6 434.5l2.2 -0.3 1.2 -2.9 -2.9 -1 -0.2 -2.8 -2.5 0.5 -1.9 -1.3 -2.9 0 -0.3 2.8 1.1 2 -0.9 2.4 2.8 0.5 0.6 3 3 -0.7 0.7 -2.2M1026.6 434.5l-5 -5.6M1025.7 433.5l0.6 -3.1M1025.7 433.5l-3.2 0.2M1028.3 431.6l-1.3 0.4 -1.3 0.3 -1.3 0.3 -1.3 0.1 -1.3 -0.1 -0.5 0.2 -0.5 0.3 -0.3 0.4 -0.1 0.5 0.1 0.5 0.3 0.3 0.4 0.2 0.4 0.1 0.4 -0.1 0.2 -0.2 0.2 -0.3 0 -0.3 -0.1 -0.2 -0.1 -0.2 -0.3 -0.1 -0.1 0M1029.6 431.5l-0.6 1.1 1 1.5 1.5 -1 1.5 0.8 0.7 -1.4 1.3 -0.5 1 -1.4 -1.3 -1 -1.4 -0.2 -1 -1.1 -1.2 1.1 -1.7 -0.6 -0.7 1.7 0.9 1M1029.6 431.5l4.5 -0.6M1028.0 434.2l0.9 -0.1 0.9 -0.2 0.9 -0.3 0.8 -0.3 0.7 -0.5 0.4 -0.1 0.3 0.1 0.3 0.1 0.3 0.2 0.1 0.3 0.1 0.2 -0.1 0.3 -0.1 0.2 -0.1 0.2 -0.2 0.1 -0.2 0 -0.2 0 -0.2 -0.1 0 -0.2 -0.1 -0.1 0 -0.1M1029.8 426.4l1.2 -0.8M1031.4 425.4l-0.1 2.2 2.8 1.3 1.6 -2.9 2.8 0 0 -2.6 1.7 -1.9 0.5 -3 -2.9 -0.3 -2.2 1 -2.4 -0.8 -1 2.7 -3.2 0.5 0.3 3.1 2.1 0.7M1031.4 425.4l6.6 -4.8M1032.6 424.5l3.1 0.8M1032.6 424.5l0.3 -3.2M1030.5 424.2l-0.9 -1.1M1029.4 422.9l1.9 -0.4 0.8 -2.6 -2.6 -0.9 -0.4 -2.5 -2.2 0.5 -1.8 -1.1 -2.6 0 0 2.5 1.1 1.8 -0.6 2.1 2.5 0.5 0.8 2.7 2.6 -0.7 0.5 -1.9M1029.4 422.9l-4.9 -5M1028.5 422.0l0.3 -2.9M1028.5 422.0l-2.9 0.1M1031.3 420.4l1.7 0.4 1.6 0.2 1.7 0.2 1.6 0 1.6 -0.2 0.7 0.1 0.6 0.3 0.4 0.6 0.1 0.6 -0.1 0.6 -0.3 0.5 -0.5 0.3 -0.4 0.1 -0.5 -0.1 -0.3 -0.3 -0.2 -0.3 -0.1 -0.4 0.1 -0.3 0.2 -0.3 0.3 -0.1 0.2 0M1030.3 419.7l1.2 -0.4 0.2 -1.7 -1.6 -0.2 -0.5 -1.5 -1.3 0.5 -1.2 -0.5 -1.5 0.2 0.2 1.5 0.8 1 -0.1 1.4 1.5 0 0.7 1.5 1.6 -0.6 0 -1.2M1030.3 419.7l-3.3 -2.6M1030.8 423.1l-0.7 -0.3 -0.7 -0.3 -0.7 -0.3 -0.7 -0.3 -0.5 -0.5 -0.4 -0.1 -0.3 0 -0.4 0 -0.2 0.2 -0.3 0.2 -0.1 0.2 -0.1 0.3 0 0.2 0.1 0.2 0.2 0.2 0.1 0.1 0.2 0.1 0.2 0 0.1 -0.1 0.1 0 0.1 -0.1M1031.2 414.3l1.2 -0.6M1032.8 413.5l-0.6 1.7 1.8 1.5 1.7 -1.7 2.1 0.6 0.5 -1.9 1.6 -1 1 -2 -2 -0.9 -1.8 0.2 -1.6 -1.2 -1.3 1.8 -2.4 -0.3 -0.4 2.2 1.4 1M1032.8 413.5l5.8 -2M1033.8 413.2l2.1 1.3M1033.8 413.2l0.9 -2.3M1030.8 411.9l-0.9 -1.1M1029.7 410.6l1.5 -0.3 0.5 -2 -1.9 -0.5 -0.3 -1.8 -1.7 0.4 -1.3 -0.7 -1.9 0.1 0 1.8 0.8 1.3 -0.3 1.6 1.8 0.2 0.6 2 1.9 -0.6 0.3 -1.5M1029.7 410.6l-3.6 -3.4M1029.1 410.0l0.2 -2.1M1029.1 410.0l-2.1 0.2M1030.6 408.5l-1.6 0.5 -1.5 0.4 -1.6 0.3 -1.5 0.2 -1.5 0 -0.7 0.2 -0.6 0.4 -0.3 0.6 -0.1 0.6 0.3 0.6 0.4 0.4 0.5 0.2 0.5 0 0.4 -0.3 0.3 -0.3 0.1 -0.4 -0.1 -0.3 -0.2 -0.3 -0.3 -0.2 -0.2 0 -0.3 0.1M1031.7 407.9l-0.2 1.6 1.7 1.2 1.3 -1.7 1.9 0.4 0.2 -1.8 1.3 -1 0.7 -2 -1.9 -0.6 -1.6 0.3 -1.5 -0.9 -0.9 1.7 -2.2 0 -0.1 2.1 1.3 0.7M1031.7 407.9l4.9 -2.3M1030.8 411.2l0.6 -0.4 0.6 -0.3 0.5 -0.4 0.6 -0.4 0.4 -0.4 0.5 -0.3 0.5 -0.1 0.5 0.1 0.4 0.3 0.2 0.4 0.1 0.5 -0.1 0.4 -0.3 0.3 -0.3 0.1 -0.3 0.1 -0.3 -0.1 -0.2 -0.2 -0.1 -0.3 0 -0.2 0.1 -0.2 0.1 -0.1M705.9 402.6l1.5 -0.4 1.4 -0.4 1.4 -0.4 1.3 -0.6 1.2 -0.7 0.5 -0.2 0.5 0 0.5 0.1 0.4 0.3 0.2 0.3 0.2 0.3 0.1 0.4 -0.1 0.4 -0.1 0.3 -0.2 0.2 -0.3 0.1 -0.2 0.1 -0.3 0 -0.2 -0.1 -0.1 -0.1 -0.1 -0.1M705.9 402.6l-0.5 -0.9 -0.5 -0.9 -0.4 -1 -0.2 -0.9 -0.2 -0.9 -0.2 -0.5 -0.4 -0.4 -0.4 -0.3 -0.4 -0.1 -0.4 0 -0.4 0.1 -0.3 0.2 -0.3 0.3 -0.1 0.3 -0.1 0.3 0.1 0.3 0.1 0.2 0.2 0.2 0.2 0.1 0.2 0.1 0.2 -0.1M705.9 402.6l-1.7 -0.2 -1.6 -0.2 -1.6 -0.4 -1.6 -0.5 -1.4 -0.7 -0.5 -0.1 -0.5 0.1 -0.5 0.1 -0.3 0.3 -0.3 0.4 -0.1 0.4 0 0.4 0 0.4 0.2 0.3 0.3 0.2 0.2 0.1 0.3 0 0.2 0 0.2 -0.1 0.2 -0.2 0 -0.1M722.8 494.5l-1.4 0.2M720.9 494.8l1.7 1.5 -1.1 2.9 -3.1 -0.9 -2.1 2.1 -1.9 -1.8 -2.5 -0.1 -2.5 -1.7 1.8 -2.4 2.3 -0.9 1 -2.4 2.7 1.2 2.7 -1.9 2 2.3 -1 2.1M720.9 494.8l-8.2 1.4M719.5 495.0l-1.7 2.8M719.5 495.0l-2.6 -2M722.7 494.3l1 -1.1M723.9 492.9l-1.9 -0.1 -0.8 -2.5 2.5 -1.1 0.4 -2.4 2.1 0.3 1.7 -1.3 2.5 -0.2 0.1 2.4 -1 1.8 0.5 2.1 -2.4 0.6 -0.6 2.7 -2.6 -0.4 -0.5 -1.9M723.9 492.9l4.6 -5.2M724.7 492.0l-0.3 -2.8M724.7 492.0l2.8 -0.1M721.9 488.9l-1.5 -0.9 -1.4 -0.9 -1.5 -0.7 -1.4 -0.6 -1.6 -0.4 -0.5 -0.4 -0.4 -0.5 -0.2 -0.5 0 -0.6 0.3 -0.5 0.3 -0.4 0.5 -0.1 0.4 0 0.4 0.2 0.3 0.2 0.1 0.4 0 0.3 -0.1 0.3 -0.2 0.2 -0.2 0.1 -0.2 0M722.6 487.9l-1.3 -0.1 -0.7 -1.7 1.6 -0.7 0.1 -1.7 1.5 0.1 1.1 -0.9 1.7 -0.2 0.2 1.7 -0.6 1.2 0.6 1.4 -1.6 0.5 -0.3 1.8 -1.8 -0.2 -0.5 -1.2M722.6 487.9l2.8 -3.7M722.2 491.5l0.5 -0.4 0.5 -0.4 0.5 -0.5 0.3 -0.5 0.4 -0.5 0.3 -0.4 0.4 -0.2 0.5 0 0.4 0.1 0.3 0.3 0.2 0.3 0 0.4 -0.1 0.3 -0.2 0.2 -0.2 0.2 -0.3 0 -0.2 0 -0.2 -0.1 -0.1 -0.2 -0.1 -0.2 0.1 -0.1M721.1 485.0l-1.3 -0.6M719.4 484.3l0.4 2 -2.1 1.8 -1.8 -2.1 -2.4 0.6 -0.4 -2.3 -1.7 -1.3 -1 -2.5 2.4 -1 2.1 0.3 1.9 -1.4 1.2 2.2 2.8 -0.3 0.3 2.8 -1.7 1.2M719.4 484.3l-6.4 -2.6M718.3 483.8l-2.6 1.5M718.3 483.8l-0.9 -2.8M720.3 482.7l1.2 -0.6M721.9 481.8l-2.1 -1.3 0 -3.4 3.3 0.2 1.3 -2.7 2.4 1.5 2.4 -0.5 3 1 -0.9 3 -1.9 1.6 -0.1 2.8 -3 -0.5 -1.7 2.8 -2.8 -2 0.1 -2.5M721.9 481.8l7.3 -3.7M723.2 481.2l0.6 -3.5M723.2 481.2l3.2 1.5M718.0 478.3l1 -0.9 1 -0.8 1 -0.7 1 -0.6 1.1 -0.5 0.6 -0.4 0.3 -0.6 0 -0.6 -0.3 -0.6 -0.4 -0.3 -0.6 -0.1 -0.5 0.1 -0.3 0.3 -0.2 0.4 0 0.4 0.2 0.3 0.3 0.2 0.3 0.1 0.3 -0.1 0.2 -0.2 0 -0.2M716.8 478.0l0.5 1.3 -1.1 1.5 -1.6 -1.2 -1.6 0.8 -0.6 -1.5 -1.3 -0.6 -1.1 -1.5 1.5 -1.1 1.5 0 1.1 -1.2 1.2 1.3 1.8 -0.6 0.6 1.8 -0.9 1M716.8 478.0l-4.8 -0.8M719.3 480.6l-0.6 -0.2 -0.6 -0.2 -0.6 -0.3 -0.5 -0.4 -0.5 -0.3 -0.4 -0.2 -0.5 -0.1 -0.4 0.2 -0.3 0.3 -0.2 0.3 0 0.4 0.1 0.3 0.2 0.3 0.2 0.1 0.3 0.1 0.3 -0.1 0.2 -0.1 0.1 -0.2 0 -0.2 -0.1 -0.2 -0.1 -0.1M716.1 474.4l-1.2 -0.7M714.5 473.5l0.4 1.8 -1.9 1.5 -1.6 -1.9 -2.2 0.5 -0.3 -2.1 -1.5 -1.1 -0.8 -2.2 2.2 -0.9 1.8 0.4 1.7 -1.1 1.1 1.9 2.4 -0.2 0.2 2.5 -1.5 0.9M714.5 473.5l-5.6 -2.5M713.6 473.1l-2.3 1.2M713.6 473.1l-0.7 -2.5M715.3 472.3l0.9 -1.1M716.5 470.9l-1.8 -0.3 -0.6 -2.5 2.6 -0.8 0.6 -2.3 2 0.5 1.8 -1 2.5 0.1 -0.2 2.4 -1.2 1.6 0.3 2.1 -2.3 0.3 -0.9 2.5 -2.5 -0.7 -0.3 -1.9"/>
<path stroke-width="1.05" d="M716.5 470.9l5 -4.5M717.4 470.1l-0.1 -2.7M717.4 470.1l2.7 0.3M714.5 467.4l-1 -0.4 -0.9 -0.4 -1 -0.2 -0.9 -0.2 -1 -0.1 -0.7 -0.3 -0.5 -0.5 -0.2 -0.6 0.1 -0.7 0.3 -0.5 0.5 -0.3 0.6 0 0.4 0.2 0.3 0.4 0.1 0.4 -0.1 0.4 -0.2 0.3 -0.3 0.1 -0.3 0 -0.2 -0.1 -0.2 -0.2M715.7 466.8l-1.3 -0.7 0 -2 2.1 0 0.8 -1.6 1.5 0.8 1.4 -0.3 1.8 0.5 -0.6 1.8 -1.1 1 -0.2 1.6 -1.8 -0.2 -1.1 1.6 -1.7 -1.1 0.2 -1.4M715.7 466.8l4.5 -2.3M714.8 470.0l0.4 -0.4 0.4 -0.5 0.4 -0.4 0.3 -0.5 0.2 -0.6 0.3 -0.3 0.4 -0.2 0.4 -0.1 0.3 0.1 0.3 0.2 0.2 0.3 0.1 0.3 -0.1 0.3 -0.1 0.2 -0.2 0.2 -0.2 0.1 -0.2 -0.1 -0.2 0 -0.1 -0.2 -0.1 -0.1 0 -0.2M714.2 461.7l-1.2 -0.7M712.7 460.7l-0.2 2 -2.6 0.9 -1 -2.6 -2.6 -0.3 0.4 -2.3 -1.3 -1.8 -0.1 -2.7 2.6 0 1.8 1.1 2.2 -0.6 0.6 2.5 2.7 0.7 -0.6 2.6 -1.9 0.5M712.7 460.7l-5.3 -4.7M711.8 459.9l-2.9 0.4M711.8 459.9l0 -2.9M714.0 460.6l0.7 -1.2M714.9 459.0l-1.9 0.5 -1.8 -2 1.9 -1.7 -0.7 -2.3 2.2 -0.4 1.1 -1.6 2.3 -0.9 1.1 2.2 -0.3 1.9 1.4 1.6 -2 1.3 0.5 2.5 -2.7 0.4 -1.1 -1.5M714.9 459.0l2.2 -6M715.2 458.0l-1.4 -2.4M715.2 458.0l2.6 -0.9M712.7 455.7l1.7 0.3 1.6 0.3 1.6 0.1 1.6 0 1.6 -0.2 0.7 0.1 0.6 0.3 0.4 0.6 0.1 0.5 -0.2 0.6 -0.3 0.4 -0.4 0.3 -0.5 0.1 -0.5 -0.2 -0.3 -0.3 -0.1 -0.3 0 -0.4 0.1 -0.2 0.2 -0.2 0.3 -0.1 0.2 0M711.5 455.4l0.5 1.2 -1.2 1.3 -1.4 -1.2 -1.5 0.6 -0.4 -1.4 -1.2 -0.6 -0.9 -1.5 1.5 -0.9 1.3 0.1 1.1 -1 1 1.2 1.7 -0.4 0.5 1.7 -1 0.9M711.5 455.4l-4.3 -1.1M713.6 458.2l-0.9 -0.5 -0.9 -0.5 -0.8 -0.5 -0.7 -0.7 -0.7 -0.6 -0.3 -0.3 -0.4 -0.1 -0.4 0 -0.3 0.2 -0.3 0.2 -0.1 0.2 -0.1 0.3 0 0.3 0.1 0.3 0.1 0.1 0.2 0.2 0.2 0 0.2 0 0.1 0 0.2 -0.1 0 -0.2M710.4 449.9l-1.2 -0.7M708.9 449.0l0.1 1.7 -2.1 1.1 -1.4 -2.1 -2.3 0 0 -2 -1.4 -1.4 -0.6 -2.4 2.3 -0.3 1.8 0.7 1.8 -0.8 0.9 2.1 2.6 0.3 -0.1 2.4 -1.6 0.7M708.9 449.0l-5.5 -3.6M707.9 448.4l-2.5 0.6M707.9 448.4l-0.4 -2.6M709.7 448.1l1 -1.1M711.0 446.7l-2.5 -0.4 -1.3 -3.1 3.1 -1.1 0.2 -3 2.7 0.6 2 -1.4 3.1 -0.1 0.4 3 -1.1 2.1 0.9 2.6 -2.9 0.6 -0.6 3.2 -3.3 -0.7 -0.7 -2.3M711.0 446.7l5.2 -6.1M711.9 445.6l-0.8 -3.4M711.9 445.6l3.5 0.1M709.0 443.6l-1.2 -0.9 -1.2 -0.8 -1.2 -0.8 -1.3 -0.6 -1.2 -0.4 -0.9 -0.6 -0.4 -0.9 0 -1 0.5 -0.7 0.7 -0.4 0.8 -0.1 0.6 0.4 0.4 0.6 0.1 0.6 -0.3 0.6 -0.4 0.3 -0.5 0.1 -0.4 -0.2 -0.3 -0.3 -0.1 -0.4 0.2 -0.3M710.2 443.3l-0.9 -0.9 0.5 -1.7 1.7 0.4 1.1 -1.2 1 1 1.4 0 1.4 0.9 -0.9 1.4 -1.2 0.6 -0.5 1.4 -1.5 -0.6 -1.3 1.2 -1.2 -1.3 0.4 -1.2M710.2 443.3l4.4 -1.1M709.3 446.2l0.6 -0.3 0.7 -0.3 0.5 -0.4 0.6 -0.4 0.5 -0.4 0.4 -0.2 0.4 -0.1 0.4 0 0.3 0.2 0.3 0.2 0.2 0.3 0 0.3 0 0.3 -0.1 0.3 -0.2 0.2 -0.2 0.1 -0.3 0 -0.2 0 -0.1 -0.1 -0.1 -0.1 -0.1 -0.1M709.1 438.1l-1.3 -0.5M707.4 437.4l0.2 2.4 -2.7 2 -1.8 -2.7 -2.8 0.5 -0.2 -2.8 -1.8 -1.6 -0.8 -3.1 2.9 -1 2.3 0.6 2.3 -1.4 1.2 2.7 3.2 -0.1 0 3.3 -2 1.2M707.4 437.4l-7 -3.7M706.1 436.8l-3.1 1.4M706.1 436.8l-0.6 -3.4M709.2 435.8l1 -0.9M710.5 434.5l-2.3 -0.3 -1.1 -2.9 2.8 -1 0.2 -2.8 2.6 0.5 1.9 -1.3 2.9 0 0.3 2.8 -1.1 2 0.8 2.4 -2.7 0.5 -0.6 3 -3.1 -0.7 -0.6 -2.2M710.5 434.5l4.9 -5.6M711.3 433.5l-0.6 -3.1M711.3 433.5l3.3 0.2M708.7 431.6l1.3 0.4 1.3 0.3 1.3 0.3 1.3 0.1 1.3 -0.1 0.6 0.2 0.5 0.3 0.2 0.4 0.1 0.5 -0.1 0.5 -0.3 0.3 -0.3 0.2 -0.4 0.1 -0.4 -0.1 -0.3 -0.2 -0.1 -0.3 -0.1 -0.3 0.1 -0.2 0.2 -0.2 0.2 -0.1 0.2 0M707.5 431.5l0.6 1.1 -1.1 1.5 -1.5 -1 -1.5 0.8 -0.6 -1.4 -1.3 -0.5 -1.1 -1.4 1.4 -1 1.4 -0.2 1 -1.1 1.2 1.1 1.7 -0.6 0.6 1.7 -0.8 1M707.5 431.5l-4.6 -0.6M709.1 434.2l-0.9 -0.1 -0.9 -0.2 -0.9 -0.3 -0.8 -0.3 -0.8 -0.5 -0.3 -0.1 -0.4 0.1 -0.3 0.1 -0.2 0.2 -0.2 0.3 0 0.2 0 0.3 0.1 0.2 0.2 0.2 0.2 0.1 0.2 0 0.2 0 0.1 -0.1 0.1 -0.2 0 -0.1 0 -0.1M707.2 426.4l-1.1 -0.8M705.7 425.4l0 2.2 -2.7 1.3 -1.6 -2.9 -2.9 0 0 -2.6 -1.6 -1.9 -0.6 -3 2.9 -0.3 2.3 1 2.4 -0.8 1 2.7 3.1 0.5 -0.2 3.1 -2.1 0.7M705.7 425.4l-6.7 -4.8M704.5 424.5l-3.2 0.8M704.5 424.5l-0.4 -3.2M706.5 424.2l0.9 -1.1M707.7 422.9l-2 -0.4 -0.8 -2.6 2.7 -0.9 0.3 -2.5 2.3 0.5 1.8 -1.1 2.6 0 0 2.5 -1.1 1.8 0.5 2.1 -2.5 0.5 -0.7 2.7 -2.7 -0.7 -0.4 -1.9M707.7 422.9l4.8 -5M708.5 422.0l-0.3 -2.9M708.5 422.0l2.9 0.1M705.7 420.4l-1.6 0.4 -1.7 0.2 -1.6 0.2 -1.6 0 -1.6 -0.2 -0.7 0.1 -0.6 0.3 -0.4 0.6 -0.2 0.6 0.1 0.6 0.4 0.5 0.4 0.3 0.5 0.1 0.4 -0.1 0.4 -0.3 0.2 -0.3 0 -0.4 -0.1 -0.3 -0.2 -0.3 -0.2 -0.1 -0.3 0M706.7 419.7l-1.1 -0.4 -0.3 -1.7 1.7 -0.2 0.4 -1.5 1.3 0.5 1.2 -0.5 1.6 0.2 -0.3 1.5 -0.8 1 0.1 1.4 -1.5 0 -0.7 1.5 -1.5 -0.6 -0.1 -1.2M706.7 419.7l3.4 -2.6M706.2 423.1l0.7 -0.3 0.8 -0.3 0.7 -0.3 0.6 -0.3 0.6 -0.5 0.3 -0.1 0.4 0 0.3 0 0.3 0.2 0.2 0.2 0.2 0.2 0 0.3 0 0.2 -0.1 0.2 -0.1 0.2 -0.2 0.1 -0.1 0.1 -0.2 0 -0.2 -0.1 -0.1 0 -0.1 -0.1M705.9 414.3l-1.3 -0.6M704.3 413.5l0.5 1.7 -1.7 1.5 -1.8 -1.7 -2.1 0.6 -0.5 -1.9 -1.6 -1 -1 -2 2 -0.9 1.9 0.2 1.5 -1.2 1.3 1.8 2.4 -0.3 0.5 2.2 -1.4 1M704.3 413.5l-5.8 -2M703.3 413.2l-2.2 1.3M703.3 413.2l-1 -2.3M706.2 411.9l0.9 -1.1M707.3 410.6l-1.4 -0.3 -0.6 -2 2 -0.5 0.3 -1.8 1.6 0.4 1.3 -0.7 2 0.1 -0.1 1.8 -0.8 1.3 0.4 1.6 -1.9 0.2 -0.6 2 -1.9 -0.6 -0.3 -1.5M707.3 410.6l3.6 -3.4M708.0 410.0l-0.2 -2.1M708.0 410.0l2.1 0.2M706.5 408.5l1.5 0.5 1.6 0.4 1.5 0.3 1.5 0.2 1.5 0 0.8 0.2 0.5 0.4 0.4 0.6 0 0.6 -0.2 0.6 -0.4 0.4 -0.5 0.2 -0.5 0 -0.5 -0.3 -0.3 -0.3 0 -0.4 0 -0.3 0.2 -0.3 0.3 -0.2 0.3 0 0.2 0.1M705.3 407.9l0.2 1.6 -1.7 1.2 -1.3 -1.7 -1.9 0.4 -0.2 -1.8 -1.3 -1 -0.6 -2 1.9 -0.6 1.5 0.3 1.6 -0.9 0.9 1.7 2.1 0 0.1 2.1 -1.3 0.7M705.3 407.9l-4.8 -2.3M706.3 411.2l-0.6 -0.4 -0.6 -0.3 -0.6 -0.4 -0.5 -0.4 -0.5 -0.4 -0.5 -0.3 -0.5 -0.1 -0.5 0.1 -0.4 0.3 -0.2 0.4 0 0.5 0.1 0.4 0.2 0.3 0.3 0.1 0.4 0.1 0.3 -0.1 0.2 -0.2 0.1 -0.3 0 -0.2 -0.1 -0.2 -0.2 -0.1M705.9 379.6l1.5 0.4 1.4 0.4 1.4 0.5 1.3 0.6 1.2 0.7 0.5 0.1 0.5 0 0.5 -0.1 0.4 -0.2 0.2 -0.3 0.2 -0.4 0.1 -0.4 -0.1 -0.3 -0.1 -0.3 -0.2 -0.2 -0.3 -0.2 -0.2 -0.1 -0.3 0 -0.2 0.1 -0.1 0.1 -0.1 0.2M705.9 379.6l-0.5 0.9 -0.5 1 -0.4 0.9 -0.2 0.9 -0.2 1 -0.2 0.5 -0.4 0.4 -0.4 0.2 -0.4 0.2 -0.4 0 -0.4 -0.1 -0.3 -0.3 -0.3 -0.2 -0.1 -0.3 -0.1 -0.4 0.1 -0.3 0.1 -0.2 0.2 -0.2 0.2 -0.1 0.2 0 0.2 0M705.9 379.6l-1.7 0.2 -1.6 0.3 -1.6 0.3 -1.6 0.5 -1.4 0.7 -0.5 0.1 -0.5 0 -0.5 -0.2 -0.3 -0.3 -0.3 -0.4 -0.1 -0.4 0 -0.3 0 -0.4 0.2 -0.3 0.3 -0.2 0.2 -0.2 0.3 0 0.2 0 0.2 0.2 0.2 0.1 0 0.2M722.8 287.8l-1.4 -0.2M720.9 287.5l1.7 -1.5 -1.1 -2.9 -3.1 0.8 -2.1 -2.1 -1.9 1.9 -2.5 0 -2.5 1.7 1.8 2.4 2.3 1 1 2.3 2.7 -1.2 2.7 1.9 2 -2.3 -1 -2M720.9 287.5l-8.2 -1.5M719.5 287.2l-1.7 -2.8M719.5 287.2l-2.6 2M722.7 288.0l1 1M723.9 289.3l-1.9 0.2 -0.8 2.5 2.5 1 0.4 2.5 2.1 -0.3 1.7 1.2 2.5 0.3 0.1 -2.5 -1 -1.8 0.5 -2 -2.4 -0.7 -0.6 -2.6 -2.6 0.4 -0.5 1.8M723.9 289.3l4.6 5.3M724.7 290.3l-0.3 2.7M724.7 290.3l2.8 0M721.9 293.4l-1.5 0.8 -1.4 0.9 -1.5 0.7 -1.4 0.6 -1.6 0.5 -0.5 0.3 -0.4 0.5 -0.2 0.6 0 0.6 0.3 0.5 0.3 0.3 0.5 0.2 0.4 -0.1 0.4 -0.1 0.3 -0.3 0.1 -0.3 0 -0.4 -0.1 -0.3 -0.2 -0.2 -0.2 -0.1 -0.2 0.1M722.6 294.4l-1.3 0 -0.7 1.7 1.6 0.8 0.1 1.7 1.5 -0.2 1.1 0.9 1.7 0.2 0.2 -1.6 -0.6 -1.3 0.6 -1.4 -1.6 -0.5 -0.3 -1.8 -1.8 0.2 -0.5 1.3M722.6 294.4l2.8 3.7M722.2 290.7l0.5 0.4 0.5 0.5 0.5 0.5 0.3 0.5 0.4 0.5 0.3 0.3 0.4 0.2 0.5 0 0.4 -0.1 0.3 -0.3 0.2 -0.3 0 -0.3 -0.1 -0.4 -0.2 -0.2 -0.2 -0.2 -0.3 0 -0.2 0 -0.2 0.2 -0.1 0.1 -0.1 0.2 0.1 0.2M721.1 297.3l-1.3 0.5M719.4 298.0l0.4 -2 -2.1 -1.9 -1.8 2.2 -2.4 -0.7 -0.4 2.3 -1.7 1.3 -1 2.5 2.4 1.1 2.1 -0.4 1.9 1.4 1.2 -2.2 2.8 0.3 0.3 -2.8 -1.7 -1.1M719.4 298.0l-6.4 2.6M718.3 298.4l-2.6 -1.4M718.3 298.4l-0.9 2.8M720.3 299.5l1.2 0.7M721.9 300.4l-2.1 1.3 0 3.4 3.3 -0.2 1.3 2.8 2.4 -1.6 2.4 0.6 3 -1.1 -0.9 -3 -1.9 -1.6 -0.1 -2.8 -3 0.5 -1.7 -2.7 -2.8 1.9 0.1 2.5M721.9 300.4l7.3 3.7M723.2 301.1l0.6 3.4M723.2 301.1l3.2 -1.5M718.0 304.0l1 0.8 1 0.8 1 0.7 1 0.7 1.1 0.4 0.6 0.5 0.3 0.6 0 0.6 -0.3 0.5 -0.4 0.4 -0.6 0.1 -0.5 -0.1 -0.3 -0.4 -0.2 -0.4 0 -0.4 0.2 -0.3 0.3 -0.2 0.3 0 0.3 0.1 0.2 0.1 0 0.3M716.8 304.2l0.5 -1.3 -1.1 -1.5 -1.6 1.2 -1.6 -0.8 -0.6 1.5 -1.3 0.6 -1.1 1.6 1.5 1 1.5 0 1.1 1.2 1.2 -1.3 1.8 0.6 0.6 -1.8 -0.9 -1M716.8 304.2l-4.8 0.9M719.3 301.6l-0.6 0.2 -0.6 0.3 -0.6 0.3 -0.5 0.3 -0.5 0.4 -0.4 0.2 -0.5 0 -0.4 -0.1 -0.3 -0.3 -0.2 -0.4 0 -0.3 0.1 -0.4 0.2 -0.2 0.2 -0.2 0.3 0 0.3 0 0.2 0.2 0.1 0.2 0 0.2 -0.1 0.1 -0.1 0.2M716.1 307.8l-1.2 0.8M714.5 308.7l0.4 -1.8 -1.9 -1.5 -1.6 1.9 -2.2 -0.5 -0.3 2.1 -1.5 1.2 -0.8 2.2 2.2 0.8 1.8 -0.4 1.7 1.2 1.1 -2 2.4 0.2 0.2 -2.4 -1.5 -1M714.5 308.7l-5.6 2.5M713.6 309.1l-2.3 -1.1M713.6 309.1l-0.7 2.5M715.3 309.9l0.9 1.1M716.5 311.3l-1.8 0.4 -0.6 2.5 2.6 0.7 0.6 2.3 2 -0.5 1.8 1 2.5 0 -0.2 -2.4 -1.2 -1.7 0.3 -2 -2.3 -0.4 -0.9 -2.5 -2.5 0.7 -0.3 1.9M716.5 311.3l5 4.5M717.4 312.1l-0.1 2.7M717.4 312.1l2.7 -0.3M714.5 314.9l-1 0.3 -0.9 0.4 -1 0.3 -0.9 0.2 -1 0.1 -0.7 0.2 -0.5 0.5 -0.2 0.7 0.1 0.6 0.3 0.5 0.5 0.3 0.6 0 0.4 -0.2 0.3 -0.4 0.1 -0.4 -0.1 -0.4 -0.2 -0.3 -0.3 -0.1 -0.3 0 -0.2 0.2 -0.2 0.2M715.7 315.5l-1.3 0.6 0 2 2.1 0 0.8 1.6 1.5 -0.8 1.4 0.4 1.8 -0.6 -0.6 -1.8 -1.1 -0.9 -0.2 -1.7 -1.8 0.3 -1.1 -1.7 -1.7 1.1 0.2 1.5"/>
<path stroke-width="1.05" d="M715.7 315.5l4.5 2.3M714.8 312.2l0.4 0.5 0.4 0.4 0.4 0.5 0.3 0.5 0.2 0.5 0.3 0.3 0.4 0.2 0.4 0.1 0.3 -0.1 0.3 -0.2 0.2 -0.3 0.1 -0.3 -0.1 -0.2 -0.1 -0.3 -0.2 -0.1 -0.2 -0.1 -0.2 0 -0.2 0.1 -0.1 0.1 -0.1 0.2 0 0.1M714.2 320.5l-1.2 0.8M712.7 321.5l-0.2 -1.9 -2.6 -1 -1 2.7 -2.6 0.3 0.4 2.3 -1.3 1.7 -0.1 2.7 2.6 0.1 1.8 -1.1 2.2 0.6 0.6 -2.5 2.7 -0.7 -0.6 -2.7 -1.9 -0.5M712.7 321.5l-5.3 4.8M711.8 322.4l-2.9 -0.4M711.8 322.4l0 2.9M714.0 321.6l0.7 1.2M714.9 323.2l-1.9 -0.4 -1.8 1.9 1.9 1.7 -0.7 2.3 2.2 0.4 1.1 1.6 2.3 1 1.1 -2.2 -0.3 -1.9 1.4 -1.7 -2 -1.3 0.5 -2.5 -2.7 -0.4 -1.1 1.5M714.9 323.2l2.2 6M715.2 324.3l-1.4 2.3M715.2 324.3l2.6 0.9M712.7 326.6l1.7 -0.4 1.6 -0.2 1.6 -0.2 1.6 0 1.6 0.2 0.7 -0.1 0.6 -0.3 0.4 -0.5 0.1 -0.6 -0.2 -0.6 -0.3 -0.4 -0.4 -0.3 -0.5 0 -0.5 0.1 -0.3 0.3 -0.1 0.3 0 0.4 0.1 0.3 0.2 0.2 0.3 0 0.2 0M711.5 326.9l0.5 -1.2 -1.2 -1.3 -1.4 1.2 -1.5 -0.6 -0.4 1.4 -1.2 0.6 -0.9 1.5 1.5 0.8 1.3 0 1.1 1 1 -1.3 1.7 0.4 0.5 -1.7 -1 -0.8M711.5 326.9l-4.3 1.1M713.6 324.0l-0.9 0.5 -0.9 0.5 -0.8 0.6 -0.7 0.6 -0.7 0.7 -0.3 0.2 -0.4 0.1 -0.4 0 -0.3 -0.1 -0.3 -0.2 -0.1 -0.3 -0.1 -0.3 0 -0.3 0.1 -0.2 0.1 -0.2 0.2 -0.1 0.2 -0.1 0.2 0 0.1 0.1 0.2 0.1 0 0.1M710.4 332.3l-1.2 0.8M708.9 333.3l0.1 -1.8 -2.1 -1.1 -1.4 2.2 -2.3 -0.1 0 2.1 -1.4 1.4 -0.6 2.3 2.3 0.4 1.8 -0.7 1.8 0.7 0.9 -2.1 2.6 -0.3 -0.1 -2.4 -1.6 -0.6M708.9 333.3l-5.5 3.5M707.9 333.9l-2.5 -0.7M707.9 333.9l-0.4 2.5M709.7 334.1l1 1.1M711.0 335.6l-2.5 0.3 -1.3 3.1 3.1 1.1 0.2 3 2.7 -0.5 2 1.4 3.1 0 0.4 -3 -1.1 -2.1 0.9 -2.6 -2.9 -0.6 -0.6 -3.1 -3.3 0.7 -0.7 2.3M711.0 335.6l5.2 6M711.9 336.6l-0.8 3.4M711.9 336.6l3.5 -0.1M709.0 338.7l-1.2 0.8 -1.2 0.9 -1.2 0.7 -1.3 0.6 -1.2 0.5 -0.9 0.6 -0.4 0.9 0 0.9 0.5 0.8 0.7 0.4 0.8 0 0.6 -0.3 0.4 -0.6 0.1 -0.7 -0.3 -0.5 -0.4 -0.4 -0.5 -0.1 -0.4 0.2 -0.3 0.3 -0.1 0.4 0.2 0.3M710.2 339.0l-0.9 0.9 0.5 1.7 1.7 -0.5 1.1 1.2 1 -1 1.4 0 1.4 -0.8 -0.9 -1.4 -1.2 -0.6 -0.5 -1.4 -1.5 0.6 -1.3 -1.2 -1.2 1.3 0.4 1.2M710.2 339.0l4.4 1M709.3 336.0l0.6 0.3 0.7 0.4 0.5 0.3 0.6 0.4 0.5 0.4 0.4 0.3 0.4 0 0.4 0 0.3 -0.2 0.3 -0.2 0.2 -0.3 0 -0.3 0 -0.3 -0.1 -0.3 -0.2 -0.2 -0.2 -0.1 -0.3 0 -0.2 0 -0.1 0.1 -0.1 0.1 -0.1 0.2M709.1 344.2l-1.3 0.4M707.4 344.8l0.2 -2.4 -2.7 -1.9 -1.8 2.7 -2.8 -0.6 -0.2 2.8 -1.8 1.7 -0.8 3 2.9 1 2.3 -0.6 2.3 1.4 1.2 -2.7 3.2 0.1 0 -3.3 -2 -1.2M707.4 344.8l-7 3.7M706.1 345.5l-3.1 -1.5M706.1 345.5l-0.6 3.3M709.2 346.4l1 1M710.5 347.7l-2.3 0.4 -1.1 2.9 2.8 1 0.2 2.7 2.6 -0.5 1.9 1.3 2.9 0.1 0.3 -2.9 -1.1 -1.9 0.8 -2.4 -2.7 -0.6 -0.6 -2.9 -3.1 0.7 -0.6 2.1M710.5 347.7l4.9 5.6M711.3 348.7l-0.6 3.2M711.3 348.7l3.3 -0.1M708.7 350.6l1.3 -0.4 1.3 -0.3 1.3 -0.2 1.3 -0.1 1.3 0 0.6 -0.1 0.5 -0.3 0.2 -0.5 0.1 -0.5 -0.1 -0.4 -0.3 -0.4 -0.3 -0.2 -0.4 -0.1 -0.4 0.1 -0.3 0.2 -0.1 0.3 -0.1 0.3 0.1 0.3 0.2 0.1 0.2 0.1 0.2 0M707.5 350.8l0.6 -1.2 -1.1 -1.5 -1.5 1.1 -1.5 -0.8 -0.6 1.3 -1.3 0.5 -1.1 1.4 1.4 1.1 1.4 0.1 1 1.2 1.2 -1.2 1.7 0.6 0.6 -1.6 -0.8 -1M707.5 350.8l-4.6 0.6M709.1 348.0l-0.9 0.2 -0.9 0.2 -0.9 0.2 -0.8 0.4 -0.8 0.4 -0.3 0.1 -0.4 0 -0.3 -0.2 -0.2 -0.2 -0.2 -0.2 0 -0.3 0 -0.3 0.1 -0.2 0.2 -0.2 0.2 0 0.2 -0.1 0.2 0.1 0.1 0.1 0.1 0.1 0 0.1 0 0.2M707.2 355.8l-1.1 0.8M705.7 356.9l0 -2.3 -2.7 -1.2 -1.6 2.8 -2.9 0.1 0 2.6 -1.6 1.9 -0.6 2.9 2.9 0.4 2.3 -1.1 2.4 0.9 1 -2.8 3.1 -0.5 -0.2 -3 -2.1 -0.7M705.7 356.9l-6.7 4.8M704.5 357.7l-3.2 -0.7M704.5 357.7l-0.4 3.2M706.5 358.0l0.9 1.1M707.7 359.4l-2 0.3 -0.8 2.6 2.7 0.9 0.3 2.5 2.3 -0.5 1.8 1.1 2.6 0.1 0 -2.6 -1.1 -1.7 0.5 -2.2 -2.5 -0.5 -0.7 -2.6 -2.7 0.6 -0.4 2M707.7 359.4l4.8 5M708.5 360.3l-0.3 2.8M708.5 360.3l2.9 -0.2M705.7 361.8l-1.6 -0.3 -1.7 -0.3 -1.6 -0.1 -1.6 0 -1.6 0.2 -0.7 -0.1 -0.6 -0.4 -0.4 -0.5 -0.2 -0.7 0.1 -0.6 0.4 -0.5 0.4 -0.3 0.5 -0.1 0.4 0.1 0.4 0.3 0.2 0.4 0 0.3 -0.1 0.4 -0.2 0.2 -0.2 0.1 -0.3 0M706.7 362.6l-1.1 0.3 -0.3 1.7 1.7 0.3 0.4 1.4 1.3 -0.5 1.2 0.6 1.6 -0.3 -0.3 -1.5 -0.8 -1 0.1 -1.3 -1.5 -0.1 -0.7 -1.5 -1.5 0.6 -0.1 1.3M706.7 362.6l3.4 2.5M706.2 359.2l0.7 0.2 0.8 0.3 0.7 0.3 0.6 0.4 0.6 0.4 0.3 0.1 0.4 0.1 0.3 -0.1 0.3 -0.1 0.2 -0.2 0.2 -0.3 0 -0.2 0 -0.3 -0.1 -0.2 -0.1 -0.2 -0.2 -0.1 -0.1 0 -0.2 0 -0.2 0 -0.1 0.1 -0.1 0.1M705.9 367.9l-1.3 0.7M704.3 368.7l0.5 -1.6 -1.7 -1.6 -1.8 1.7 -2.1 -0.6 -0.5 1.9 -1.6 1 -1 2 2 1 1.9 -0.3 1.5 1.2 1.3 -1.7 2.4 0.3 0.5 -2.3 -1.4 -1M704.3 368.7l-5.8 2M703.3 369.0l-2.2 -1.2M703.3 369.0l-1 2.3M706.2 370.4l0.9 1M707.3 371.6l-1.4 0.4 -0.6 1.9 2 0.5 0.3 1.9 1.6 -0.5 1.3 0.8 2 -0.1 -0.1 -1.9 -0.8 -1.2 0.4 -1.7 -1.9 -0.2 -0.6 -1.9 -1.9 0.6 -0.3 1.4M707.3 371.6l3.6 3.5M708.0 372.3l-0.2 2.1M708.0 372.3l2.1 -0.3M706.5 373.7l1.5 -0.5 1.6 -0.4 1.5 -0.3 1.5 -0.2 1.5 0.1 0.8 -0.2 0.5 -0.5 0.4 -0.5 0 -0.7 -0.2 -0.5 -0.4 -0.4 -0.5 -0.2 -0.5 0 -0.5 0.2 -0.3 0.3 0 0.4 0 0.4 0.2 0.3 0.3 0.1 0.3 0 0.2 -0.1M705.3 374.3l0.2 -1.5 -1.7 -1.3 -1.3 1.7 -1.9 -0.3 -0.2 1.8 -1.3 1 -0.6 1.9 1.9 0.7 1.5 -0.4 1.6 0.9 0.9 -1.7 2.1 0.1 0.1 -2.1 -1.3 -0.8M705.3 374.3l-4.8 2.3M706.3 371.1l-0.6 0.3 -0.6 0.3 -0.6 0.4 -0.5 0.4 -0.5 0.5 -0.5 0.3 -0.5 0.1 -0.5 -0.2 -0.4 -0.3 -0.2 -0.4 0 -0.4 0.1 -0.4 0.2 -0.3 0.3 -0.2 0.4 0 0.3 0.1 0.2 0.2 0.1 0.2 0 0.3 -0.1 0.1 -0.2 0.2M959.9 205.6l-1.2 0.9 -1.3 0.8 -1.2 0.8 -1.3 0.6 -1.3 0.5 -0.5 0.3 -0.3 0.3 -0.2 0.5 -0.1 0.4 0 0.4 0.2 0.4 0.2 0.3 0.3 0.1 0.3 0.1 0.3 0 0.3 -0.1 0.2 -0.1 0.2 -0.2 0.1 -0.2 0 -0.2 -0.1 -0.2M959.9 205.6l-0.4 -0.9 -0.4 -1 -0.4 -0.9 -0.5 -0.8 -0.7 -0.8 -0.2 -0.4 -0.1 -0.5 0.1 -0.5 0.1 -0.4 0.3 -0.4 0.4 -0.2 0.3 -0.1 0.4 0 0.3 0.1 0.3 0.1 0.2 0.3 0.1 0.2 0 0.3 0 0.2 -0.1 0.2 -0.2 0.1M959.9 205.6l0.9 -1.4 0.9 -1.4 0.8 -1.4 0.6 -1.5 0.4 -1.6 0.3 -0.4 0.4 -0.4 0.4 -0.2 0.4 -0.1 0.5 0.1 0.4 0.1 0.3 0.3 0.2 0.3 0.1 0.3 0.1 0.4 -0.1 0.2 -0.2 0.3 -0.2 0.1 -0.2 0.1 -0.2 0 -0.2 0M1012.2 282.6l1.2 -0.8M1013.8 281.5l-0.2 2.3 2.7 1.4 1.8 -2.8 2.9 0.2 0.2 -2.6 1.8 -1.8 0.7 -2.9 -2.9 -0.6 -2.3 0.9 -2.4 -1.1 -1.2 2.7 -3.2 0.4 0 3.1 2.1 0.8M1013.8 281.5l7.1 -4.4M1015.1 280.7l3.1 1M1015.1 280.7l0.5 -3.2M1012.1 282.4l-1.4 -0.2M1010.3 282.2l1.3 -1.4 -1 -2.4 -2.6 0.9 -1.9 -1.5 -1.4 1.6 -2.1 0.3 -2 1.5 1.6 1.8 2 0.6 0.9 1.9 2.3 -1.1 2.2 1.5 1.7 -2 -1 -1.7M1010.3 282.2l-6.9 -0.8M1009.1 282.0l-1.6 -2.2M1009.1 282.0l-2.1 1.9M1009.2 277.8l0.4 -1.6 0.5 -1.6 0.6 -1.5 0.7 -1.5 0.8 -1.3 0.2 -0.7 -0.1 -0.6 -0.2 -0.5 -0.4 -0.4 -0.6 -0.2 -0.5 0 -0.4 0.1 -0.3 0.4 -0.2 0.3 0 0.4 0.1 0.4 0.3 0.2 0.2 0.2 0.3 0 0.2 -0.1 0.2 -0.2M1007.9 277.6l0.9 -1 -0.5 -1.7 -1.8 0.6 -1.2 -1.2 -1 1.1 -1.4 0.1 -1.4 1 1 1.3 1.2 0.6 0.6 1.4 1.5 -0.7 1.4 1.1 1.2 -1.4 -0.5 -1.2M1007.9 277.6l-4.5 -0.8M1010.7 280.1l-0.7 0 -0.6 -0.1 -0.7 0 -0.6 -0.1 -0.6 -0.2 -0.5 0 -0.4 0.1 -0.4 0.3 -0.2 0.4 0 0.4 0.1 0.3 0.2 0.3 0.2 0.2 0.4 0.1 0.2 -0.1 0.3 -0.1 0.1 -0.2 0.1 -0.2 -0.1 -0.2 -0.1 -0.2 -0.1 -0.1M1007.1 274.4l0.6 -1.3M1007.9 272.8l1 1.7 2.8 -0.1 -0.1 -2.7 2.2 -1.2 -1.3 -2 0.4 -2.1 -1 -2.5 -2.5 0.9 -1.2 1.6 -2.3 0.3 0.5 2.5 -2.2 1.6 1.6 2.2 2.1 -0.2M1007.9 272.8l2.9 -6.3M1008.4 271.7l2.8 -0.7M1008.4 271.7l-1.3 -2.7M1006.2 272.2l-1.4 0.4M1004.3 272.7l0.8 -2.4 -2.4 -2.5 -2.3 2.3 -2.8 -1.1 -0.7 2.8 -2.1 1.2 -1.5 2.8 2.6 1.6 2.5 -0.1 1.9 2 1.9 -2.4 3.2 0.8 0.7 -3.3 -1.8 -1.7M1004.3 272.7l-7.8 2.1M1003.0 273.1l-2.9 -2.2M1003.0 273.1l-1.4 3.2M1004.8 267.4l-1.3 0 -1.3 0.1 -1.2 0.2 -1.2 0.2 -1.1 0.4 -0.7 0.1 -0.6 -0.2 -0.4 -0.5 -0.2 -0.6 0.1 -0.5 0.3 -0.5 0.5 -0.2 0.4 0 0.4 0.1 0.3 0.3 0.1 0.4 -0.1 0.3 -0.2 0.3 -0.3 0.1 -0.2 0 -0.2 -0.1M1005.6 266.4l0.4 1.3 1.9 0.3 0.3 -1.9 1.7 -0.5 -0.5 -1.5 0.6 -1.4 -0.3 -1.8 -1.8 0.2 -1.1 1 -1.6 -0.1 -0.1 1.7 -1.7 0.9 0.8 1.7 1.4 0.1M1005.6 266.4l2.9 -3.9M1005.5 270.0l0.3 -0.6 0.2 -0.6 0.3 -0.6 0.1 -0.6 0.1 -0.6 0.2 -0.4 0.3 -0.3 0.4 -0.2 0.5 0 0.3 0.1 0.3 0.3 0.2 0.3 0 0.3 -0.1 0.3 -0.2 0.2 -0.2 0.1 -0.3 0.1 -0.2 -0.1 -0.1 -0.1 -0.1 -0.2 0 -0.1M1003.6 263.3l0.4 -1.4M1004.1 261.6l1 1.5 2.4 -0.2 -0.1 -2.5 1.9 -1.1 -1.2 -1.7 0.3 -1.9 -0.9 -2.2 -2.1 0.9 -1.1 1.5 -2 0.3 0.5 2.2 -1.9 1.6 1.5 1.9 1.7 -0.3M1004.1 261.6l2.5 -5.7M1004.6 260.6l2.4 -0.7M1004.6 260.6l-1.2 -2.3M1002.7 261.2l-1.4 -0.2M1000.9 261.0l1.1 -1.5 -1.3 -2.2 -2.4 1.2 -1.9 -1.3 -1.2 1.8 -2 0.5 -1.7 1.7 1.7 1.6 2 0.4 1.1 1.7 2 -1.3 2.4 1.2 1.3 -2.2 -1.1 -1.6M1000.9 261.0l-6.7 0.1M999.7 261.0l-1.7 -2M999.7 261.0l-1.8 2.1M1000.0 257.0l0.4 -0.9 0.5 -0.9 0.5 -0.9 0.6 -0.8 0.6 -0.7 0.3 -0.7 0 -0.7 -0.3 -0.6 -0.5 -0.4 -0.6 -0.1 -0.5 0.1 -0.4 0.4 -0.2 0.4 0 0.5 0.2 0.4 0.4 0.2 0.3 0.1 0.4 -0.2 0.2 -0.2 0 -0.2 0 -0.3M998.7 257.4l0.5 -1.4 -1.4 -1.4 -1.5 1.4 -1.7 -0.6 -0.5 1.6 -1.3 0.7 -1 1.7 1.7 0.9 1.5 -0.1 1.2 1.1 1.2 -1.5 2 0.5 0.4 -2 -1.1 -0.9M998.7 257.4l-4.8 1.4M1001.6 259.2l-0.6 -0.1 -0.6 0 -0.6 -0.1 -0.6 -0.2 -0.5 -0.2 -0.4 -0.1 -0.4 0.1 -0.4 0.3 -0.2 0.3 -0.1 0.3 0.1 0.3 0.1 0.3 0.3 0.2 0.2 0.1 0.3 0 0.2 -0.1 0.1 -0.2 0.1 -0.2 0 -0.2 -0.1 -0.1 -0.1 -0.1M996.4 252.7l0.3 -1.4M996.7 250.9l1.5 1.3 2.5 -1.1 -1 -2.6 1.6 -2 -1.8 -1.4 -0.3 -2.2 -1.8 -2 -1.9 1.7 -0.6 2.1 -2 1.1 1.3 2.2 -1.4 2.4 2.2 1.5 1.7 -1M996.7 250.9l0.6 -7.1"/>
<path stroke-width="1.05" d="M996.8 249.7l2.4 -1.7M996.8 249.7l-2 -2.1M995.7 251.8l-1.4 -0.4M994.0 251.2l1.7 -1 -0.1 -2.6 -2.6 0.1 -1 -2.1 -1.9 1.2 -1.9 -0.4 -2.3 0.9 0.7 2.3 1.5 1.2 0.2 2.1 2.3 -0.4 1.4 2.1 2.2 -1.5 -0.2 -1.9M994.0 251.2l-5.7 -2.8M993.0 250.7l-0.5 -2.7M993.0 250.7l-2.5 1.1M993.2 247.3l-0.9 1.4 -1 1.3 -1.1 1.2 -1.2 1.1 -1.2 0.9 -0.5 0.6 -0.2 0.6 0.1 0.7 0.3 0.5 0.5 0.3 0.5 0.1 0.5 -0.2 0.4 -0.2 0.3 -0.4 0 -0.5 -0.1 -0.3 -0.3 -0.3 -0.3 -0.1 -0.3 0 -0.2 0.2 -0.1 0.2M993.9 246.3l0.5 1.1 1.8 0.1 0.1 -1.7 1.5 -0.6 -0.6 -1.4 0.4 -1.3 -0.4 -1.6 -1.6 0.4 -1 0.9 -1.4 0 0.1 1.7 -1.5 0.9 0.8 1.5 1.3 0M993.9 246.3l2.4 -3.8M994.4 249.7l0.3 -1 0.3 -0.9 0.2 -1 0.1 -0.9 0 -1 0.1 -0.4 0.2 -0.3 0.2 -0.3 0.3 -0.1 0.4 0 0.3 0 0.3 0.2 0.2 0.2 0.1 0.2 0 0.3 0 0.2 -0.1 0.2 -0.2 0.1 -0.2 0.1 -0.1 0 -0.1 -0.1M991.0 241.5l0.3 -1.4M991.4 239.8l1.1 1.3 2.3 -0.6 -0.5 -2.6 1.6 -1.5 -1.4 -1.5 0 -2 -1.2 -2.1 -1.9 1.3 -0.8 1.8 -1.8 0.8 0.8 2.1 -1.6 2 1.7 1.7 1.7 -0.7M991.4 239.8l1.4 -6.4M991.6 238.7l2.3 -1.2M991.6 238.7l-1.4 -2.1M990.1 239.8l-1.4 -0.1M988.3 239.6l1.5 -1.9 -1.3 -3.2 -3 1.4 -2.2 -2 -1.5 2.3 -2.4 0.4 -2.3 2.2 1.9 2.3 2.2 0.7 1.1 2.5 2.5 -1.6 2.6 1.9 1.9 -2.8 -1 -2.2M988.3 239.6l-8 -0.6M986.9 239.5l-1.9 -3M986.9 239.5l-2.4 2.5M987.5 236.0l0.2 -1.4 0.3 -1.5 0.3 -1.3 0.5 -1.4 0.6 -1.2 0.2 -1 -0.4 -1 -0.7 -0.6 -0.8 -0.3 -0.8 0.3 -0.6 0.5 -0.2 0.7 0.1 0.7 0.4 0.5 0.6 0.2 0.6 0 0.4 -0.3 0.1 -0.5 0 -0.4 -0.2 -0.3 -0.3 -0.1M986.4 236.7l0.1 -1.3 -1.6 -0.9 -0.9 1.5 -1.6 -0.1 -0.1 1.5 -0.9 0.9 -0.5 1.6 1.7 0.4 1.2 -0.4 1.4 0.6 0.6 -1.4 1.8 -0.1 0 -1.8 -1.2 -0.5M986.4 236.7l-3.9 2.3M989.1 238.1l-0.6 0.2 -0.7 0.2 -0.7 0.2 -0.6 0.1 -0.7 0 -0.4 0.1 -0.4 0.3 -0.2 0.3 -0.2 0.3 0 0.4 0.1 0.3 0.2 0.3 0.2 0.2 0.3 0.1 0.2 0 0.3 -0.1 0.1 -0.1 0.2 -0.2 0 -0.2 0 -0.1 0 -0.2M983.5 232.2l0.7 -1.3M984.3 230.5l1.5 1.8 3.3 -0.4 -0.6 -3.2 2.4 -1.7 -1.9 -2.1 0.1 -2.5 -1.7 -2.7 -2.7 1.4 -1.2 2.1 -2.6 0.6 1.1 2.8 -2.3 2.2 2.3 2.3 2.3 -0.6M984.3 230.5l2.3 -7.6M984.7 229.2l3.2 -1.2M984.7 229.2l-1.9 -2.9M981.9 230.6l-1.4 0.1M980.1 230.6l1.3 -1.8 -1.2 -2.9 -2.8 1.4 -2.1 -1.8 -1.4 2.2 -2.2 0.5 -2.1 2 1.8 2.2 2.1 0.5 1.1 2.3 2.4 -1.6 2.4 1.7 1.7 -2.7 -1 -2M980.1 230.6l-7.5 -0.3M978.8 230.6l-1.9 -2.7M978.8 230.6l-2.2 2.4M979.2 227.4l-0.6 1.2 -0.7 1.1 -0.7 1.1 -0.9 1 -0.9 0.9 -0.3 0.5 -0.1 0.5 0.1 0.6 0.3 0.4 0.4 0.2 0.4 0.1 0.4 -0.2 0.4 -0.2 0.2 -0.3 0 -0.4 -0.1 -0.3 -0.2 -0.2 -0.2 -0.1 -0.3 0 -0.2 0.1 -0.1 0.1M980.0 226.4l0.4 1.2 1.8 0.3 0.3 -1.8 1.6 -0.5 -0.5 -1.4 0.6 -1.3 -0.3 -1.7 -1.7 0.2 -1.1 0.9 -1.5 -0.1 0 1.7 -1.7 0.8 0.8 1.6 1.3 0.1M980.0 226.4l2.8 -3.7M980.8 229.5l0.6 -0.8 0.5 -0.8 0.4 -0.8 0.3 -0.8 0.3 -0.9 0.1 -0.3 0.3 -0.2 0.3 -0.1 0.3 -0.1 0.3 0.1 0.2 0.2 0.2 0.2 0.1 0.2 0 0.3 -0.1 0.2 -0.1 0.1 -0.2 0.1 -0.2 0.1 -0.1 -0.1 -0.1 0 -0.1 -0.1M976.6 222.7l0.2 -1.4M976.9 220.8l1.6 1.6 2.8 -1.1 -1 -3.1 2 -2.1 -2 -1.8 -0.2 -2.6 -1.9 -2.5 -2.2 2 -0.7 2.3 -2.3 1.2 1.3 2.6 -1.7 2.7 2.3 1.9 2 -1.1M976.9 220.8l1 -8.1M977.1 219.4l2.7 -1.8M977.1 219.4l-2.1 -2.5M975.5 220.7l-1.4 -0.1M973.6 220.6l1.2 -1.7 -1.4 -2.4 -2.4 1.3 -2.1 -1.4 -1.2 2 -2 0.5 -1.8 1.9 1.8 1.7 2 0.4 1.2 1.9 2.1 -1.5 2.4 1.3 1.4 -2.4 -1.2 -1.6M973.6 220.6l-6.9 0.1M972.4 220.6l-1.8 -2.2M972.4 220.6l-1.8 2.2M973.2 217.5l1.4 -1 1.3 -1 1.3 -1.1 1.1 -1.2 0.9 -1.3 0.6 -0.5 0.6 -0.1 0.7 0.1 0.6 0.3 0.4 0.5 0.1 0.6 -0.1 0.5 -0.2 0.4 -0.4 0.3 -0.5 0.1 -0.4 -0.1 -0.3 -0.3 -0.1 -0.3 -0.1 -0.3 0.1 -0.3 0.2 -0.1M972.0 217.7l0.5 -1.1 -1 -1.3 -1.4 1 -1.3 -0.7 -0.6 1.3 -1.1 0.5 -0.9 1.3 1.2 0.9 1.3 0 0.9 1.1 1.1 -1.1 1.6 0.5 0.6 -1.5 -0.9 -0.9M972.0 217.7l-4.1 0.7M974.8 219.6l-0.7 0.4 -0.7 0.3 -0.7 0.3 -0.7 0.2 -0.7 0.2 -0.3 0.1 -0.3 0.2 -0.2 0.3 -0.1 0.3 0 0.3 0.1 0.3 0.2 0.2 0.1 0.2 0.3 0.1 0.2 0 0.2 0 0.1 -0.1 0.2 -0.2 0 -0.1 0.1 -0.1 -0.1 -0.2M968.7 213.4l0.3 -1.3M969.1 211.7l0.9 1.5 2.3 -0.2 -0.1 -2.5 1.9 -1.1 -1.1 -1.7 0.4 -1.8 -0.9 -2.2 -2.1 0.9 -1 1.5 -1.9 0.4 0.4 2.1 -1.8 1.6 1.4 1.9 1.6 -0.4M969.1 211.7l2.4 -5.6M969.6 210.7l2.3 -0.7M969.6 210.7l-1.1 -2.2M966.6 212.0l-1.4 0M964.9 212.0l0.8 -1.3 -1.1 -1.7 -1.7 1.1 -1.6 -1 -0.7 1.5 -1.5 0.5 -1.2 1.5 1.4 1.2 1.5 0.2 1 1.4 1.4 -1.2 1.8 0.8 0.8 -1.8 -0.9 -1.2M964.9 212.0l-4.9 0.4M964.1 212.1l-1.5 -1.6M964.1 212.1l-1.3 1.7M963.9 210.0l-0.6 1.5 -0.8 1.4 -0.7 1.3 -0.9 1.3 -1.1 1.1 -0.3 0.6 -0.1 0.7 0.2 0.7 0.4 0.4 0.6 0.2 0.6 0 0.5 -0.3 0.3 -0.3 0.1 -0.5 0 -0.4 -0.2 -0.4 -0.4 -0.2 -0.3 0 -0.3 0.1 -0.2 0.2 -0.1 0.2M964.3 208.7l1 1.2 2.1 -0.4 -0.5 -2.1 1.6 -1.2 -1.2 -1.4 0 -1.6 -1 -1.8 -1.8 1 -0.7 1.4 -1.7 0.5 0.7 1.9 -1.5 1.5 1.5 1.5 1.5 -0.5M964.3 208.7l1.4 -5.2M966.0 211.6l0.2 -0.7 0.2 -0.7 0.1 -0.6 0 -0.7 0 -0.6 0.1 -0.6 0.3 -0.4 0.4 -0.3 0.5 -0.1 0.4 0.1 0.4 0.3 0.2 0.3 0.1 0.4 -0.1 0.3 -0.2 0.3 -0.3 0.2 -0.3 0 -0.2 -0.1 -0.2 -0.2 -0.1 -0.2 0 -0.1M959.9 576.6l-1.2 -0.9 -1.3 -0.8 -1.2 -0.7 -1.3 -0.7 -1.3 -0.4 -0.5 -0.3 -0.3 -0.4 -0.2 -0.4 -0.1 -0.5 0 -0.4 0.2 -0.3 0.2 -0.3 0.3 -0.2 0.3 -0.1 0.3 0 0.3 0.1 0.2 0.2 0.2 0.2 0.1 0.2 0 0.2 -0.1 0.1M959.9 576.6l-0.4 1 -0.4 0.9 -0.4 0.9 -0.5 0.9 -0.7 0.7 -0.2 0.5 -0.1 0.5 0.1 0.5 0.1 0.4 0.3 0.3 0.4 0.2 0.3 0.2 0.4 0 0.3 -0.1 0.3 -0.2 0.2 -0.2 0.1 -0.3 0 -0.2 0 -0.3 -0.1 -0.1 -0.2 -0.1M959.9 576.6l0.9 1.4 0.9 1.4 0.8 1.5 0.6 1.5 0.4 1.5 0.3 0.5 0.4 0.3 0.4 0.2 0.4 0.1 0.5 0 0.4 -0.2 0.3 -0.2 0.2 -0.4 0.1 -0.3 0.1 -0.3 -0.1 -0.3 -0.2 -0.2 -0.2 -0.2 -0.2 -0.1 -0.2 0 -0.2 0.1M1012.2 499.7l1.2 0.8M1013.8 500.7l-0.2 -2.2 2.7 -1.4 1.8 2.7 2.9 -0.1 0.2 2.6 1.8 1.7 0.7 3 -2.9 0.6 -2.3 -0.9 -2.4 1 -1.2 -2.7 -3.2 -0.4 0 -3.1 2.1 -0.8M1013.8 500.7l7.1 4.4M1015.1 501.5l3.1 -0.9M1015.1 501.5l0.5 3.2M1012.1 499.8l-1.4 0.2M1010.3 500.0l1.3 1.4 -1 2.4 -2.6 -0.9 -1.9 1.6 -1.4 -1.7 -2.1 -0.2 -2 -1.5 1.6 -1.9 2 -0.6 0.9 -1.9 2.3 1.1 2.2 -1.5 1.7 2.1 -1 1.6M1010.3 500.0l-6.9 0.8M1009.1 500.2l-1.6 2.2M1009.1 500.2l-2.1 -1.8M1009.2 504.4l0.4 1.6 0.5 1.6 0.6 1.6 0.7 1.4 0.8 1.4 0.2 0.6 -0.1 0.6 -0.2 0.6 -0.4 0.4 -0.6 0.2 -0.5 0 -0.4 -0.2 -0.3 -0.3 -0.2 -0.4 0 -0.4 0.1 -0.3 0.3 -0.3 0.2 -0.1 0.3 0 0.2 0.1 0.2 0.1M1007.9 504.7l0.9 0.9 -0.5 1.7 -1.8 -0.5 -1.2 1.2 -1 -1.2 -1.4 0 -1.4 -1 1 -1.4 1.2 -0.5 0.6 -1.4 1.5 0.7 1.4 -1.2 1.2 1.4 -0.5 1.3M1007.9 504.7l-4.5 0.8M1010.7 502.2l-0.7 0 -0.6 0 -0.7 0 -0.6 0.2 -0.6 0.1 -0.5 0.1 -0.4 -0.2 -0.4 -0.3 -0.2 -0.4 0 -0.3 0.1 -0.4 0.2 -0.3 0.2 -0.2 0.4 0 0.2 0 0.3 0.2 0.1 0.2 0.1 0.2 -0.1 0.2 -0.1 0.1 -0.1 0.1M1007.1 507.8l0.6 1.3M1007.9 509.5l1 -1.8 2.8 0.1 -0.1 2.8 2.2 1.1 -1.3 2 0.4 2.1 -1 2.5 -2.5 -0.8 -1.2 -1.7 -2.3 -0.3 0.5 -2.4 -2.2 -1.6 1.6 -2.3 2.1 0.3M1007.9 509.5l2.9 6.2M1008.4 510.6l2.8 0.6M1008.4 510.6l-1.3 2.6M1006.2 510.0l-1.4 -0.3M1004.3 509.6l0.8 2.4 -2.4 2.5 -2.3 -2.4 -2.8 1.1 -0.7 -2.7 -2.1 -1.2 -1.5 -2.8 2.6 -1.6 2.5 0.1 1.9 -2 1.9 2.4 3.2 -0.9 0.7 3.3 -1.8 1.8M1004.3 509.6l-7.8 -2.2M1003.0 509.2l-2.9 2.1M1003.0 509.2l-1.4 -3.3M1004.8 514.8l-1.3 0 -1.3 -0.1 -1.2 -0.1 -1.2 -0.3 -1.1 -0.4 -0.7 -0.1 -0.6 0.3 -0.4 0.4 -0.2 0.6 0.1 0.6 0.3 0.4 0.5 0.3 0.4 0 0.4 -0.2 0.3 -0.3 0.1 -0.4 -0.1 -0.3 -0.2 -0.3 -0.3 -0.1 -0.2 0 -0.2 0.2M1005.6 515.9l0.4 -1.4 1.9 -0.3 0.3 1.9 1.7 0.5 -0.5 1.6 0.6 1.3 -0.3 1.9 -1.8 -0.3 -1.1 -0.9 -1.6 0.1 -0.1 -1.8 -1.7 -0.8 0.8 -1.8 1.4 0M1005.6 515.9l2.9 3.8M1005.5 512.2l0.3 0.6 0.2 0.6 0.3 0.6 0.1 0.6 0.1 0.6 0.2 0.5 0.3 0.3 0.4 0.1 0.5 0.1 0.3 -0.2 0.3 -0.2 0.2 -0.3 0 -0.4 -0.1 -0.3 -0.2 -0.2 -0.2 -0.1 -0.3 0 -0.2 0 -0.1 0.2 -0.1 0.1 0 0.2M1003.6 519.0l0.4 1.3M1004.1 520.7l1 -1.6 2.4 0.2 -0.1 2.5 1.9 1.1 -1.2 1.7 0.3 1.9 -0.9 2.2 -2.1 -0.8 -1.1 -1.6 -2 -0.3 0.5 -2.2 -1.9 -1.5 1.5 -1.9 1.7 0.3M1004.1 520.7l2.5 5.6M1004.6 521.7l2.4 0.6M1004.6 521.7l-1.2 2.3M1002.7 521.0l-1.4 0.2M1000.9 521.2l1.1 1.5 -1.3 2.3 -2.4 -1.3 -1.9 1.4 -1.2 -1.8 -2 -0.5 -1.7 -1.7 1.7 -1.6 2 -0.4 1.1 -1.8 2 1.4 2.4 -1.2 1.3 2.2 -1.1 1.5M1000.9 521.2l-6.7 -0.1M999.7 521.2l-1.7 2M999.7 521.2l-1.8 -2M1000.0 525.2l0.4 0.9 0.5 1 0.5 0.8 0.6 0.8 0.6 0.7 0.3 0.7 0 0.7 -0.3 0.6 -0.5 0.4 -0.6 0.2 -0.5 -0.2 -0.4 -0.3 -0.2 -0.5 0 -0.5 0.2 -0.3 0.4 -0.3 0.3 0 0.4 0.1 0.2 0.2 0 0.3 0 0.2M998.7 524.9l0.5 1.3 -1.4 1.4 -1.5 -1.4 -1.7 0.6 -0.5 -1.5 -1.3 -0.8 -1 -1.6 1.7 -0.9 1.5 0.1 1.2 -1.1 1.2 1.4 2 -0.4 0.4 1.9 -1.1 1M998.7 524.9l-4.8 -1.4M1001.6 523.0l-0.6 0.1 -0.6 0.1 -0.6 0.1 -0.6 0.1 -0.5 0.2 -0.4 0.1 -0.4 -0.1 -0.4 -0.2 -0.2 -0.3 -0.1 -0.4 0.1 -0.3 0.1 -0.3 0.3 -0.2 0.2 0 0.3 0 0.2 0.1 0.1 0.1 0.1 0.2 0 0.2 -0.1 0.2 -0.1 0M996.4 529.5l0.3 1.4M996.7 531.3l1.5 -1.3 2.5 1.1 -1 2.7 1.6 1.9 -1.8 1.5 -0.3 2.1 -1.8 2.1 -1.9 -1.8 -0.6 -2.1 -2 -1.1 1.3 -2.1 -1.4 -2.4 2.2 -1.6 1.7 1M996.7 531.3l0.6 7.1M996.8 532.6l2.4 1.6M996.8 532.6l-2 2M995.7 530.5l-1.4 0.4M994.0 531.0l1.7 1 -0.1 2.7 -2.6 -0.2 -1 2.2 -1.9 -1.2 -1.9 0.4 -2.3 -0.9 0.7 -2.3 1.5 -1.2 0.2 -2.2 2.3 0.5 1.4 -2.2 2.2 1.5 -0.2 1.9M994.0 531.0l-5.7 2.9"/>
<path stroke-width="1.05" d="M993.0 531.6l-0.5 2.6M993.0 531.6l-2.5 -1.2M993.2 534.9l-0.9 -1.3 -1 -1.4 -1.1 -1.2 -1.2 -1.1 -1.2 -0.9 -0.5 -0.5 -0.2 -0.7 0.1 -0.6 0.3 -0.5 0.5 -0.3 0.5 -0.1 0.5 0.1 0.4 0.3 0.3 0.4 0 0.4 -0.1 0.4 -0.3 0.2 -0.3 0.1 -0.3 0 -0.2 -0.1 -0.1 -0.2M993.9 536.0l0.5 -1.2 1.8 -0.1 0.1 1.8 1.5 0.6 -0.6 1.3 0.4 1.3 -0.4 1.7 -1.6 -0.4 -1 -1 -1.4 0 0.1 -1.6 -1.5 -0.9 0.8 -1.6 1.3 0.1M993.9 536.0l2.4 3.8M994.4 532.5l0.3 1 0.3 1 0.2 0.9 0.1 1 0 0.9 0.1 0.4 0.2 0.3 0.2 0.3 0.3 0.1 0.4 0.1 0.3 -0.1 0.3 -0.1 0.2 -0.2 0.1 -0.3 0 -0.2 0 -0.3 -0.1 -0.1 -0.2 -0.2 -0.2 0 -0.1 0 -0.1 0M991.0 540.7l0.3 1.4M991.4 542.5l1.1 -1.4 2.3 0.7 -0.5 2.5 1.6 1.5 -1.4 1.6 0 2 -1.2 2 -1.9 -1.3 -0.8 -1.8 -1.8 -0.7 0.8 -2.2 -1.6 -1.9 1.7 -1.7 1.7 0.7M991.4 542.5l1.4 6.3M991.6 543.6l2.3 1.2M991.6 543.6l-1.4 2.1M990.1 542.5l-1.4 0.1M988.3 542.6l1.5 2 -1.3 3.1 -3 -1.4 -2.2 2 -1.5 -2.3 -2.4 -0.4 -2.3 -2.1 1.9 -2.4 2.2 -0.7 1.1 -2.5 2.5 1.6 2.6 -1.9 1.9 2.8 -1 2.2M988.3 542.6l-8 0.7M986.9 542.8l-1.9 2.9M986.9 542.8l-2.4 -2.6M987.5 546.2l0.2 1.5 0.3 1.4 0.3 1.4 0.5 1.3 0.6 1.2 0.2 1.1 -0.4 0.9 -0.7 0.7 -0.8 0.2 -0.8 -0.2 -0.6 -0.6 -0.2 -0.7 0.1 -0.7 0.4 -0.5 0.6 -0.2 0.6 0.1 0.4 0.3 0.1 0.4 0 0.4 -0.2 0.3 -0.3 0.2M986.4 545.6l0.1 1.3 -1.6 0.9 -0.9 -1.6 -1.6 0.1 -0.1 -1.4 -0.9 -1 -0.5 -1.6 1.7 -0.4 1.2 0.5 1.4 -0.7 0.6 1.5 1.8 0.1 0 1.7 -1.2 0.6M986.4 545.6l-3.9 -2.3M989.1 544.1l-0.6 -0.2 -0.7 -0.2 -0.7 -0.2 -0.6 -0.1 -0.7 0 -0.4 -0.1 -0.4 -0.2 -0.2 -0.3 -0.2 -0.4 0 -0.4 0.1 -0.3 0.2 -0.2 0.2 -0.2 0.3 -0.1 0.2 0 0.3 0 0.1 0.2 0.2 0.1 0 0.2 0 0.2 0 0.1M983.5 550.0l0.7 1.3M984.3 551.7l1.5 -1.8 3.3 0.5 -0.6 3.2 2.4 1.6 -1.9 2.2 0.1 2.4 -1.7 2.8 -2.7 -1.4 -1.2 -2.1 -2.6 -0.7 1.1 -2.7 -2.3 -2.3 2.3 -2.3 2.3 0.6M984.3 551.7l2.3 7.7M984.7 553.1l3.2 1.1M984.7 553.1l-1.9 2.8M981.9 551.6l-1.4 0M980.1 551.6l1.3 1.8 -1.2 2.9 -2.8 -1.4 -2.1 1.8 -1.4 -2.2 -2.2 -0.4 -2.1 -2.1 1.8 -2.1 2.1 -0.6 1.1 -2.2 2.4 1.5 2.4 -1.6 1.7 2.6 -1 2M980.1 551.6l-7.5 0.3M978.8 551.7l-1.9 2.6M978.8 551.7l-2.2 -2.4M979.2 554.9l-0.6 -1.2 -0.7 -1.2 -0.7 -1.1 -0.9 -1 -0.9 -0.9 -0.3 -0.5 -0.1 -0.5 0.1 -0.5 0.3 -0.4 0.4 -0.3 0.4 0 0.4 0.1 0.4 0.2 0.2 0.4 0 0.3 -0.1 0.3 -0.2 0.2 -0.2 0.1 -0.3 0 -0.2 0 -0.1 -0.2M980.0 555.9l0.4 -1.3 1.8 -0.3 0.3 1.8 1.6 0.5 -0.5 1.5 0.6 1.2 -0.3 1.8 -1.7 -0.3 -1.1 -0.9 -1.5 0.2 0 -1.7 -1.7 -0.8 0.8 -1.7 1.3 0M980.0 555.9l2.8 3.6M980.8 552.8l0.6 0.7 0.5 0.8 0.4 0.8 0.3 0.9 0.3 0.8 0.1 0.3 0.3 0.2 0.3 0.2 0.3 0 0.3 -0.1 0.2 -0.1 0.2 -0.3 0.1 -0.2 0 -0.2 -0.1 -0.2 -0.1 -0.2 -0.2 -0.1 -0.2 0 -0.1 0 -0.1 0.1 -0.1 0.1M976.6 559.6l0.2 1.3M976.9 561.4l1.6 -1.6 2.8 1.1 -1 3.1 2 2.2 -2 1.8 -0.2 2.5 -1.9 2.5 -2.2 -1.9 -0.7 -2.4 -2.3 -1.2 1.3 -2.6 -1.7 -2.6 2.3 -1.9 2 1M976.9 561.4l1 8.2M977.1 562.8l2.7 1.8M977.1 562.8l-2.1 2.5M975.5 561.6l-1.4 0.1M973.6 561.7l1.2 1.6 -1.4 2.4 -2.4 -1.3 -2.1 1.4 -1.2 -2 -2 -0.5 -1.8 -1.9 1.8 -1.7 2 -0.4 1.2 -1.8 2.1 1.4 2.4 -1.2 1.4 2.3 -1.2 1.7M973.6 561.7l-6.9 -0.2M972.4 561.7l-1.8 2.1M972.4 561.7l-1.8 -2.2M973.2 564.8l1.4 1 1.3 1 1.3 1.1 1.1 1.1 0.9 1.3 0.6 0.5 0.6 0.2 0.7 -0.1 0.6 -0.4 0.4 -0.5 0.1 -0.5 -0.1 -0.6 -0.2 -0.4 -0.4 -0.3 -0.5 0 -0.4 0.1 -0.3 0.2 -0.1 0.3 -0.1 0.3 0.1 0.3 0.2 0.2M972.0 564.6l0.5 1.1 -1 1.3 -1.4 -1.1 -1.3 0.7 -0.6 -1.3 -1.1 -0.5 -0.9 -1.3 1.2 -0.9 1.3 0 0.9 -1 1.1 1.1 1.6 -0.6 0.6 1.6 -0.9 0.9M972.0 564.6l-4.1 -0.8M974.8 562.6l-0.7 -0.3 -0.7 -0.4 -0.7 -0.3 -0.7 -0.2 -0.7 -0.1 -0.3 -0.2 -0.3 -0.2 -0.2 -0.3 -0.1 -0.3 0 -0.3 0.1 -0.3 0.2 -0.2 0.1 -0.1 0.3 -0.1 0.2 -0.1 0.2 0.1 0.1 0.1 0.2 0.1 0 0.1 0.1 0.2 -0.1 0.1M968.7 568.8l0.3 1.4M969.1 570.5l0.9 -1.5 2.3 0.3 -0.1 2.4 1.9 1.1 -1.1 1.7 0.4 1.9 -0.9 2.1 -2.1 -0.8 -1 -1.6 -1.9 -0.3 0.4 -2.2 -1.8 -1.6 1.4 -1.8 1.6 0.3M969.1 570.5l2.4 5.7M969.6 571.5l2.3 0.7M969.6 571.5l-1.1 2.3M966.6 570.2l-1.4 0.1M964.9 570.3l0.8 1.2 -1.1 1.8 -1.7 -1.1 -1.6 0.9 -0.7 -1.5 -1.5 -0.5 -1.2 -1.5 1.4 -1.2 1.5 -0.2 1 -1.3 1.4 1.2 1.8 -0.9 0.8 1.9 -0.9 1.2M964.9 570.3l-4.9 -0.5M964.1 570.2l-1.5 1.5M964.1 570.2l-1.3 -1.8M963.9 572.3l-0.6 -1.5 -0.8 -1.4 -0.7 -1.4 -0.9 -1.2 -1.1 -1.1 -0.3 -0.7 -0.1 -0.7 0.2 -0.6 0.4 -0.5 0.6 -0.2 0.6 0 0.5 0.3 0.3 0.4 0.1 0.4 0 0.5 -0.2 0.3 -0.4 0.2 -0.3 0 -0.3 -0.1 -0.2 -0.2 -0.1 -0.2M964.3 573.5l1 -1.2 2.1 0.5 -0.5 2.1 1.6 1.2 -1.2 1.3 0 1.7 -1 1.8 -1.8 -1 -0.7 -1.5 -1.7 -0.5 0.7 -1.8 -1.5 -1.6 1.5 -1.5 1.5 0.5M964.3 573.5l1.4 5.2M966.0 570.6l0.2 0.7 0.2 0.7 0.1 0.7 0 0.6 0 0.7 0.1 0.5 0.3 0.5 0.4 0.3 0.5 0 0.4 -0.1 0.4 -0.2 0.2 -0.4 0.1 -0.4 -0.1 -0.3 -0.2 -0.3 -0.3 -0.1 -0.3 0 -0.2 0 -0.2 0.2 -0.1 0.2 0 0.2M777.2 576.6l1.2 -0.9 1.2 -0.8 1.3 -0.7 1.3 -0.7 1.3 -0.4 0.4 -0.3 0.4 -0.4 0.2 -0.4 0 -0.5 0 -0.4 -0.1 -0.3 -0.3 -0.3 -0.3 -0.2 -0.3 -0.1 -0.3 0 -0.3 0.1 -0.2 0.2 -0.1 0.2 -0.1 0.2 0 0.2 0 0.1M777.2 576.6l0.3 1 0.4 0.9 0.5 0.9 0.5 0.9 0.6 0.7 0.2 0.5 0.1 0.5 0 0.5 -0.2 0.4 -0.3 0.3 -0.3 0.2 -0.4 0.2 -0.3 0 -0.4 -0.1 -0.2 -0.2 -0.2 -0.2 -0.2 -0.3 0 -0.2 0.1 -0.3 0.1 -0.1 0.1 -0.1M777.2 576.6l-1 1.4 -0.9 1.4 -0.8 1.5 -0.6 1.5 -0.4 1.5 -0.2 0.5 -0.4 0.3 -0.4 0.2 -0.5 0.1 -0.4 0 -0.4 -0.2 -0.4 -0.2 -0.2 -0.4 -0.1 -0.3 0 -0.3 0.1 -0.3 0.1 -0.2 0.2 -0.2 0.2 -0.1 0.2 0 0.2 0.1M724.8 499.7l-1.2 0.8M723.2 500.7l0.2 -2.2 -2.7 -1.4 -1.8 2.7 -2.9 -0.1 -0.1 2.6 -1.8 1.7 -0.8 3 3 0.6 2.3 -0.9 2.4 1 1.2 -2.7 3.2 -0.4 -0.1 -3.1 -2.1 -0.8M723.2 500.7l-7 4.4M722.0 501.5l-3.2 -0.9M722.0 501.5l-0.6 3.2M724.9 499.8l1.4 0.2M726.7 500.0l-1.3 1.4 1.1 2.4 2.6 -0.9 1.8 1.6 1.5 -1.7 2 -0.2 2.1 -1.5 -1.7 -1.9 -1.9 -0.6 -1 -1.9 -2.2 1.1 -2.3 -1.5 -1.6 2.1 0.9 1.6M726.7 500.0l6.9 0.8M727.9 500.2l1.6 2.2M727.9 500.2l2.1 -1.8M727.9 504.4l-0.5 1.6 -0.4 1.6 -0.6 1.6 -0.7 1.4 -0.8 1.4 -0.2 0.6 0 0.6 0.3 0.6 0.4 0.4 0.5 0.2 0.5 0 0.5 -0.2 0.3 -0.3 0.1 -0.4 0.1 -0.4 -0.2 -0.3 -0.2 -0.3 -0.3 -0.1 -0.3 0 -0.2 0.1 -0.1 0.1M729.1 504.7l-0.9 0.9 0.6 1.7 1.7 -0.5 1.2 1.2 1 -1.2 1.4 0 1.5 -1 -1 -1.4 -1.3 -0.5 -0.5 -1.4 -1.6 0.7 -1.4 -1.2 -1.2 1.4 0.5 1.3M729.1 504.7l4.6 0.8M726.4 502.2l0.6 0 0.7 0 0.6 0 0.7 0.2 0.5 0.1 0.5 0.1 0.5 -0.2 0.3 -0.3 0.2 -0.4 0.1 -0.3 -0.1 -0.4 -0.2 -0.3 -0.3 -0.2 -0.3 0 -0.3 0 -0.2 0.2 -0.2 0.2 0 0.2 0 0.2 0.1 0.1 0.2 0.1M729.9 507.8l-0.5 1.3M729.2 509.5l-1.1 -1.8 -2.8 0.1 0.2 2.8 -2.3 1.1 1.3 2 -0.4 2.1 1 2.5 2.5 -0.8 1.3 -1.7 2.3 -0.3 -0.6 -2.4 2.3 -1.6 -1.7 -2.3 -2 0.3M729.2 509.5l-2.9 6.2M728.7 510.6l-2.9 0.6M728.7 510.6l1.3 2.6M730.9 510.0l1.3 -0.3M732.7 509.6l-0.7 2.4 2.3 2.5 2.3 -2.4 2.8 1.1 0.7 -2.7 2.2 -1.2 1.5 -2.8 -2.7 -1.6 -2.4 0.1 -2 -2 -1.9 2.4 -3.1 -0.9 -0.8 3.3 1.8 1.8M732.7 509.6l7.8 -2.2M734.1 509.2l2.8 2.1M734.1 509.2l1.4 -3.3M732.3 514.8l1.2 0 1.3 -0.1 1.2 -0.1 1.2 -0.3 1.1 -0.4 0.7 -0.1 0.7 0.3 0.4 0.4 0.2 0.6 -0.1 0.6 -0.4 0.4 -0.4 0.3 -0.5 0 -0.4 -0.2 -0.3 -0.3 0 -0.4 0 -0.3 0.2 -0.3 0.3 -0.1 0.3 0 0.2 0.2M731.5 515.9l-0.5 -1.4 -1.9 -0.3 -0.3 1.9 -1.7 0.5 0.6 1.6 -0.6 1.3 0.3 1.9 1.8 -0.3 1.1 -0.9 1.6 0.1 0 -1.8 1.7 -0.8 -0.7 -1.8 -1.4 0M731.5 515.9l-2.9 3.8M731.6 512.2l-0.3 0.6 -0.3 0.6 -0.2 0.6 -0.2 0.6 -0.1 0.6 -0.2 0.5 -0.3 0.3 -0.4 0.1 -0.4 0.1 -0.4 -0.2 -0.3 -0.2 -0.1 -0.3 0 -0.4 0.1 -0.3 0.1 -0.2 0.3 -0.1 0.2 0 0.2 0 0.2 0.2 0 0.1 0.1 0.2M733.4 519.0l-0.4 1.3M732.9 520.7l-1 -1.6 -2.4 0.2 0.2 2.5 -1.9 1.1 1.1 1.7 -0.3 1.9 0.9 2.2 2.2 -0.8 1.1 -1.6 2 -0.3 -0.6 -2.2 2 -1.5 -1.5 -1.9 -1.8 0.3M732.9 520.7l-2.4 5.6M732.5 521.7l-2.5 0.6M732.5 521.7l1.2 2.3M734.3 521.0l1.4 0.2M736.1 521.2l-1.1 1.5 1.3 2.3 2.4 -1.3 2 1.4 1.2 -1.8 1.9 -0.5 1.8 -1.7 -1.8 -1.6 -1.9 -0.4 -1.2 -1.8 -2 1.4 -2.3 -1.2 -1.4 2.2 1.1 1.5M736.1 521.2l6.7 -0.1M737.3 521.2l1.8 2M737.3 521.2l1.8 -2M737.1 525.2l-0.5 0.9 -0.4 1 -0.5 0.8 -0.6 0.8 -0.7 0.7 -0.3 0.7 0 0.7 0.3 0.6 0.5 0.4 0.6 0.2 0.6 -0.2 0.4 -0.3 0.2 -0.5 -0.1 -0.5 -0.2 -0.3 -0.3 -0.3 -0.4 0 -0.3 0.1 -0.2 0.2 -0.1 0.3 0.1 0.2M738.3 524.9l-0.4 1.3 1.4 1.4 1.4 -1.4 1.8 0.6 0.4 -1.5 1.4 -0.8 0.9 -1.6 -1.6 -0.9 -1.6 0.1 -1.2 -1.1 -1.1 1.4 -2 -0.4 -0.5 1.9 1.1 1M738.3 524.9l4.9 -1.4M735.5 523.0l0.6 0.1 0.6 0.1 0.6 0.1 0.5 0.1 0.6 0.2 0.4 0.1 0.4 -0.1 0.3 -0.2 0.2 -0.3 0.1 -0.4 0 -0.3 -0.2 -0.3 -0.2 -0.2 -0.3 0 -0.2 0 -0.2 0.1 -0.2 0.1 -0.1 0.2 0 0.2 0.1 0.2 0.1 0M740.7 529.5l-0.3 1.4M740.3 531.3l-1.5 -1.3 -2.5 1.1 1.1 2.7 -1.7 1.9 1.9 1.5 0.3 2.1 1.7 2.1 1.9 -1.8 0.6 -2.1 2 -1.1 -1.3 -2.1 1.5 -2.4 -2.2 -1.6 -1.8 1M740.3 531.3l-0.5 7.1M740.2 532.6l-2.3 1.6M740.2 532.6l2 2M741.4 530.5l1.3 0.4M743.0 531.0l-1.6 1 0 2.7 2.6 -0.2 1.1 2.2 1.8 -1.2 1.9 0.4 2.3 -0.9 -0.7 -2.3 -1.5 -1.2 -0.1 -2.2 -2.3 0.5 -1.4 -2.2 -2.2 1.5 0.1 1.9M743.0 531.0l5.8 2.9M744.0 531.6l0.6 2.6M744.0 531.6l2.5 -1.2M743.8 534.9l1 -1.3 1 -1.4 1.1 -1.2 1.1 -1.1 1.3 -0.9 0.4 -0.5 0.2 -0.7 0 -0.6 -0.4 -0.5 -0.4 -0.3 -0.6 -0.1 -0.5 0.1 -0.4 0.3 -0.2 0.4 0 0.4 0.1 0.4 0.2 0.2 0.3 0.1 0.3 0 0.3 -0.1 0.1 -0.2M743.1 536.0l-0.5 -1.2 -1.7 -0.1 -0.2 1.8 -1.5 0.6 0.7 1.3 -0.5 1.3 0.4 1.7 1.7 -0.4 0.9 -1 1.5 0 -0.2 -1.6 1.6 -0.9 -0.9 -1.6 -1.3 0.1M743.1 536.0l-2.3 3.8"/>
<path stroke-width="1.05" d="M742.7 532.5l-0.3 1 -0.3 1 -0.2 0.9 -0.1 1 0 0.9 -0.1 0.4 -0.2 0.3 -0.3 0.3 -0.3 0.1 -0.3 0.1 -0.3 -0.1 -0.3 -0.1 -0.2 -0.2 -0.1 -0.3 0 -0.2 0 -0.3 0.1 -0.1 0.1 -0.2 0.2 0 0.2 0 0.1 0M746.1 540.7l-0.3 1.4M745.7 542.5l-1.2 -1.4 -2.3 0.7 0.6 2.5 -1.7 1.5 1.4 1.6 0 2 1.2 2 1.9 -1.3 0.8 -1.8 1.9 -0.7 -0.9 -2.2 1.6 -1.9 -1.7 -1.7 -1.6 0.7M745.7 542.5l-1.4 6.3M745.4 543.6l-2.2 1.2M745.4 543.6l1.5 2.1M746.9 542.5l1.4 0.1M748.8 542.6l-1.5 2 1.3 3.1 2.9 -1.4 2.2 2 1.6 -2.3 2.4 -0.4 2.2 -2.1 -1.8 -2.4 -2.3 -0.7 -1.1 -2.5 -2.5 1.6 -2.6 -1.9 -1.9 2.8 1.1 2.2M748.8 542.6l7.9 0.7M750.2 542.8l1.8 2.9M750.2 542.8l2.4 -2.6M749.6 546.2l-0.3 1.5 -0.2 1.4 -0.4 1.4 -0.5 1.3 -0.5 1.2 -0.2 1.1 0.3 0.9 0.7 0.7 0.9 0.2 0.8 -0.2 0.6 -0.6 0.2 -0.7 -0.2 -0.7 -0.4 -0.5 -0.5 -0.2 -0.6 0.1 -0.4 0.3 -0.2 0.4 0.1 0.4 0.2 0.3 0.3 0.2M750.7 545.6l-0.1 1.3 1.5 0.9 0.9 -1.6 1.7 0.1 0 -1.4 1 -1 0.4 -1.6 -1.6 -0.4 -1.3 0.5 -1.3 -0.7 -0.7 1.5 -1.8 0.1 0.1 1.7 1.2 0.6M750.7 545.6l3.8 -2.3M747.9 544.1l0.7 -0.2 0.7 -0.2 0.6 -0.2 0.7 -0.1 0.6 0 0.5 -0.1 0.3 -0.2 0.3 -0.3 0.1 -0.4 0 -0.4 0 -0.3 -0.2 -0.2 -0.3 -0.2 -0.2 -0.1 -0.3 0 -0.2 0 -0.2 0.2 -0.1 0.1 -0.1 0.2 0 0.2 0.1 0.1M753.5 550.0l-0.6 1.3M752.7 551.7l-1.5 -1.8 -3.3 0.5 0.7 3.2 -2.4 1.6 1.8 2.2 0 2.4 1.6 2.8 2.8 -1.4 1.1 -2.1 2.7 -0.7 -1.1 -2.7 2.3 -2.3 -2.4 -2.3 -2.3 0.6M752.7 551.7l-2.2 7.7M752.3 553.1l-3.2 1.1M752.3 553.1l2 2.8M755.1 551.6l1.4 0M757.0 551.6l-1.4 1.8 1.3 2.9 2.7 -1.4 2.1 1.8 1.5 -2.2 2.2 -0.4 2.1 -2.1 -1.9 -2.1 -2.1 -0.6 -1.1 -2.2 -2.3 1.5 -2.5 -1.6 -1.7 2.6 1.1 2M757.0 551.6l7.4 0.3M758.3 551.7l1.8 2.6M758.3 551.7l2.2 -2.4M757.8 554.9l0.7 -1.2 0.6 -1.2 0.8 -1.1 0.8 -1 0.9 -0.9 0.4 -0.5 0.1 -0.5 -0.1 -0.5 -0.3 -0.4 -0.4 -0.3 -0.5 0 -0.4 0.1 -0.3 0.2 -0.2 0.4 -0.1 0.3 0.1 0.3 0.2 0.2 0.3 0.1 0.2 0 0.2 0 0.1 -0.2M757.0 555.9l-0.4 -1.3 -1.8 -0.3 -0.3 1.8 -1.6 0.5 0.6 1.5 -0.6 1.2 0.3 1.8 1.7 -0.3 1 -0.9 1.5 0.2 0.1 -1.7 1.6 -0.8 -0.7 -1.7 -1.4 0M757.0 555.9l-2.7 3.6M756.2 552.8l-0.5 0.7 -0.5 0.8 -0.4 0.8 -0.4 0.9 -0.2 0.8 -0.2 0.3 -0.2 0.2 -0.3 0.2 -0.4 0 -0.2 -0.1 -0.3 -0.1 -0.1 -0.3 -0.1 -0.2 0 -0.2 0.1 -0.2 0.1 -0.2 0.1 -0.1 0.2 0 0.2 0 0.1 0.1 0 0.1M760.5 559.6l-0.3 1.3M760.2 561.4l-1.6 -1.6 -2.8 1.1 0.9 3.1 -1.9 2.2 1.9 1.8 0.3 2.5 1.8 2.5 2.2 -1.9 0.8 -2.4 2.2 -1.2 -1.3 -2.6 1.8 -2.6 -2.3 -1.9 -2 1M760.2 561.4l-1.1 8.2M760.0 562.8l-2.7 1.8M760.0 562.8l2.1 2.5M761.6 561.6l1.4 0.1M763.4 561.7l-1.1 1.6 1.3 2.4 2.5 -1.3 2.1 1.4 1.1 -2 2.1 -0.5 1.7 -1.9 -1.8 -1.7 -2 -0.4 -1.2 -1.8 -2 1.4 -2.4 -1.2 -1.4 2.3 1.1 1.7M763.4 561.7l6.9 -0.2M764.6 561.7l1.9 2.1M764.6 561.7l1.9 -2.2M763.8 564.8l-1.4 1 -1.3 1 -1.2 1.1 -1.1 1.1 -0.9 1.3 -0.6 0.5 -0.7 0.2 -0.7 -0.1 -0.5 -0.4 -0.4 -0.5 -0.2 -0.5 0.1 -0.6 0.3 -0.4 0.4 -0.3 0.4 0 0.4 0.1 0.3 0.2 0.2 0.3 0 0.3 -0.1 0.3 -0.1 0.2M765.0 564.6l-0.5 1.1 1.1 1.3 1.3 -1.1 1.4 0.7 0.5 -1.3 1.2 -0.5 0.9 -1.3 -1.3 -0.9 -1.2 0 -1 -1 -1 1.1 -1.6 -0.6 -0.6 1.6 0.8 0.9M765.0 564.6l4.2 -0.8M762.2 562.6l0.7 -0.3 0.7 -0.4 0.7 -0.3 0.7 -0.2 0.7 -0.1 0.4 -0.2 0.2 -0.2 0.2 -0.3 0.1 -0.3 0 -0.3 -0.1 -0.3 -0.1 -0.2 -0.2 -0.1 -0.2 -0.1 -0.2 -0.1 -0.2 0.1 -0.2 0.1 -0.1 0.1 -0.1 0.1 0 0.2 0 0.1M768.4 568.8l-0.4 1.4M767.9 570.5l-0.9 -1.5 -2.3 0.3 0.1 2.4 -1.9 1.1 1.1 1.7 -0.3 1.9 0.9 2.1 2 -0.8 1.1 -1.6 1.9 -0.3 -0.5 -2.2 1.9 -1.6 -1.4 -1.8 -1.7 0.3M767.9 570.5l-2.4 5.7M767.5 571.5l-2.4 0.7M767.5 571.5l1.1 2.3M770.4 570.2l1.4 0.1M772.1 570.3l-0.7 1.2 1.1 1.8 1.7 -1.1 1.5 0.9 0.8 -1.5 1.4 -0.5 1.2 -1.5 -1.4 -1.2 -1.5 -0.2 -0.9 -1.3 -1.4 1.2 -1.8 -0.9 -0.9 1.9 0.9 1.2M772.1 570.3l5 -0.5M773.0 570.2l1.4 1.5M773.0 570.2l1.2 -1.8M773.1 572.3l0.7 -1.5 0.7 -1.4 0.8 -1.4 0.9 -1.2 1 -1.1 0.4 -0.7 0 -0.7 -0.2 -0.6 -0.4 -0.5 -0.6 -0.2 -0.5 0 -0.5 0.3 -0.3 0.4 -0.2 0.4 0.1 0.5 0.2 0.3 0.3 0.2 0.4 0 0.2 -0.1 0.2 -0.2 0.1 -0.2M772.8 573.5l-1 -1.2 -2.1 0.5 0.4 2.1 -1.5 1.2 1.2 1.3 -0.1 1.7 1 1.8 1.8 -1 0.7 -1.5 1.7 -0.5 -0.7 -1.8 1.5 -1.6 -1.5 -1.5 -1.4 0.5M772.8 573.5l-1.5 5.2M771.0 570.6l-0.2 0.7 -0.1 0.7 -0.1 0.7 -0.1 0.6 0.1 0.7 -0.1 0.5 -0.3 0.5 -0.4 0.3 -0.5 0 -0.5 -0.1 -0.3 -0.2 -0.3 -0.4 0 -0.4 0.1 -0.3 0.2 -0.3 0.2 -0.1 0.3 0 0.3 0 0.1 0.2 0.1 0.2 0 0.2M777.2 205.6l1.2 0.9 1.2 0.8 1.3 0.8 1.3 0.6 1.3 0.5 0.4 0.3 0.4 0.3 0.2 0.5 0 0.4 0 0.4 -0.1 0.4 -0.3 0.3 -0.3 0.1 -0.3 0.1 -0.3 0 -0.3 -0.1 -0.2 -0.1 -0.1 -0.2 -0.1 -0.2 0 -0.2 0 -0.2M777.2 205.6l0.3 -0.9 0.4 -1 0.5 -0.9 0.5 -0.8 0.6 -0.8 0.2 -0.4 0.1 -0.5 0 -0.5 -0.2 -0.4 -0.3 -0.4 -0.3 -0.2 -0.4 -0.1 -0.3 0 -0.4 0.1 -0.2 0.1 -0.2 0.3 -0.2 0.2 0 0.3 0.1 0.2 0.1 0.2 0.1 0.1M777.2 205.6l-1 -1.4 -0.9 -1.4 -0.8 -1.4 -0.6 -1.5 -0.4 -1.6 -0.2 -0.4 -0.4 -0.4 -0.4 -0.2 -0.5 -0.1 -0.4 0.1 -0.4 0.1 -0.4 0.3 -0.2 0.3 -0.1 0.3 0 0.4 0.1 0.2 0.1 0.3 0.2 0.1 0.2 0.1 0.2 0 0.2 0M724.8 282.6l-1.2 -0.8M723.2 281.5l0.2 2.3 -2.7 1.4 -1.8 -2.8 -2.9 0.2 -0.1 -2.6 -1.8 -1.8 -0.8 -2.9 3 -0.6 2.3 0.9 2.4 -1.1 1.2 2.7 3.2 0.4 -0.1 3.1 -2.1 0.8M723.2 281.5l-7 -4.4M722.0 280.7l-3.2 1M722.0 280.7l-0.6 -3.2M724.9 282.4l1.4 -0.2M726.7 282.2l-1.3 -1.4 1.1 -2.4 2.6 0.9 1.8 -1.5 1.5 1.6 2 0.3 2.1 1.5 -1.7 1.8 -1.9 0.6 -1 1.9 -2.2 -1.1 -2.3 1.5 -1.6 -2 0.9 -1.7M726.7 282.2l6.9 -0.8M727.9 282.0l1.6 -2.2M727.9 282.0l2.1 1.9M727.9 277.8l-0.5 -1.6 -0.4 -1.6 -0.6 -1.5 -0.7 -1.5 -0.8 -1.3 -0.2 -0.7 0 -0.6 0.3 -0.5 0.4 -0.4 0.5 -0.2 0.5 0 0.5 0.1 0.3 0.4 0.1 0.3 0.1 0.4 -0.2 0.4 -0.2 0.2 -0.3 0.2 -0.3 0 -0.2 -0.1 -0.1 -0.2M729.1 277.6l-0.9 -1 0.6 -1.7 1.7 0.6 1.2 -1.2 1 1.1 1.4 0.1 1.5 1 -1 1.3 -1.3 0.6 -0.5 1.4 -1.6 -0.7 -1.4 1.1 -1.2 -1.4 0.5 -1.2M729.1 277.6l4.6 -0.8M726.4 280.1l0.6 0 0.7 -0.1 0.6 0 0.7 -0.1 0.5 -0.2 0.5 0 0.5 0.1 0.3 0.3 0.2 0.4 0.1 0.4 -0.1 0.3 -0.2 0.3 -0.3 0.2 -0.3 0.1 -0.3 -0.1 -0.2 -0.1 -0.2 -0.2 0 -0.2 0 -0.2 0.1 -0.2 0.2 -0.1M729.9 274.4l-0.5 -1.3M729.2 272.8l-1.1 1.7 -2.8 -0.1 0.2 -2.7 -2.3 -1.2 1.3 -2 -0.4 -2.1 1 -2.5 2.5 0.9 1.3 1.6 2.3 0.3 -0.6 2.5 2.3 1.6 -1.7 2.2 -2 -0.2M729.2 272.8l-2.9 -6.3M728.7 271.7l-2.9 -0.7M728.7 271.7l1.3 -2.7M730.9 272.2l1.3 0.4M732.7 272.7l-0.7 -2.4 2.3 -2.5 2.3 2.3 2.8 -1.1 0.7 2.8 2.2 1.2 1.5 2.8 -2.7 1.6 -2.4 -0.1 -2 2 -1.9 -2.4 -3.1 0.8 -0.8 -3.3 1.8 -1.7M732.7 272.7l7.8 2.1M734.1 273.1l2.8 -2.2M734.1 273.1l1.4 3.2M732.3 267.4l1.2 0 1.3 0.1 1.2 0.2 1.2 0.2 1.1 0.4 0.7 0.1 0.7 -0.2 0.4 -0.5 0.2 -0.6 -0.1 -0.5 -0.4 -0.5 -0.4 -0.2 -0.5 0 -0.4 0.1 -0.3 0.3 0 0.4 0 0.3 0.2 0.3 0.3 0.1 0.3 0 0.2 -0.1M731.5 266.4l-0.5 1.3 -1.9 0.3 -0.3 -1.9 -1.7 -0.5 0.6 -1.5 -0.6 -1.4 0.3 -1.8 1.8 0.2 1.1 1 1.6 -0.1 0 1.7 1.7 0.9 -0.7 1.7 -1.4 0.1M731.5 266.4l-2.9 -3.9M731.6 270.0l-0.3 -0.6 -0.3 -0.6 -0.2 -0.6 -0.2 -0.6 -0.1 -0.6 -0.2 -0.4 -0.3 -0.3 -0.4 -0.2 -0.4 0 -0.4 0.1 -0.3 0.3 -0.1 0.3 0 0.3 0.1 0.3 0.1 0.2 0.3 0.1 0.2 0.1 0.2 -0.1 0.2 -0.1 0 -0.2 0.1 -0.1M733.4 263.3l-0.4 -1.4M732.9 261.6l-1 1.5 -2.4 -0.2 0.2 -2.5 -1.9 -1.1 1.1 -1.7 -0.3 -1.9 0.9 -2.2 2.2 0.9 1.1 1.5 2 0.3 -0.6 2.2 2 1.6 -1.5 1.9 -1.8 -0.3M732.9 261.6l-2.4 -5.7M732.5 260.6l-2.5 -0.7M732.5 260.6l1.2 -2.3M734.3 261.2l1.4 -0.2M736.1 261.0l-1.1 -1.5 1.3 -2.2 2.4 1.2 2 -1.3 1.2 1.8 1.9 0.5 1.8 1.7 -1.8 1.6 -1.9 0.4 -1.2 1.7 -2 -1.3 -2.3 1.2 -1.4 -2.2 1.1 -1.6M736.1 261.0l6.7 0.1M737.3 261.0l1.8 -2M737.3 261.0l1.8 2.1M737.1 257.0l-0.5 -0.9 -0.4 -0.9 -0.5 -0.9 -0.6 -0.8 -0.7 -0.7 -0.3 -0.7 0 -0.7 0.3 -0.6 0.5 -0.4 0.6 -0.1 0.6 0.1 0.4 0.4 0.2 0.4 -0.1 0.5 -0.2 0.4 -0.3 0.2 -0.4 0.1 -0.3 -0.2 -0.2 -0.2 -0.1 -0.2 0.1 -0.3M738.3 257.4l-0.4 -1.4 1.4 -1.4 1.4 1.4 1.8 -0.6 0.4 1.6 1.4 0.7 0.9 1.7 -1.6 0.9 -1.6 -0.1 -1.2 1.1 -1.1 -1.5 -2 0.5 -0.5 -2 1.1 -0.9M738.3 257.4l4.9 1.4M735.5 259.2l0.6 -0.1 0.6 0 0.6 -0.1 0.5 -0.2 0.6 -0.2 0.4 -0.1 0.4 0.1 0.3 0.3 0.2 0.3 0.1 0.3 0 0.3 -0.2 0.3 -0.2 0.2 -0.3 0.1 -0.2 0 -0.2 -0.1 -0.2 -0.2 -0.1 -0.2 0 -0.2 0.1 -0.1 0.1 -0.1M740.7 252.7l-0.3 -1.4M740.3 250.9l-1.5 1.3 -2.5 -1.1 1.1 -2.6 -1.7 -2 1.9 -1.4 0.3 -2.2 1.7 -2 1.9 1.7 0.6 2.1 2 1.1 -1.3 2.2 1.5 2.4 -2.2 1.5 -1.8 -1M740.3 250.9l-0.5 -7.1M740.2 249.7l-2.3 -1.7M740.2 249.7l2 -2.1M741.4 251.8l1.3 -0.4M743.0 251.2l-1.6 -1 0 -2.6 2.6 0.1 1.1 -2.1 1.8 1.2 1.9 -0.4 2.3 0.9 -0.7 2.3 -1.5 1.2 -0.1 2.1 -2.3 -0.4 -1.4 2.1 -2.2 -1.5 0.1 -1.9M743.0 251.2l5.8 -2.8M744.0 250.7l0.6 -2.7M744.0 250.7l2.5 1.1M743.8 247.3l1 1.4 1 1.3 1.1 1.2 1.1 1.1 1.3 0.9 0.4 0.6 0.2 0.6 0 0.7 -0.4 0.5 -0.4 0.3 -0.6 0.1 -0.5 -0.2 -0.4 -0.2 -0.2 -0.4 0 -0.5 0.1 -0.3 0.2 -0.3 0.3 -0.1 0.3 0 0.3 0.2 0.1 0.2M743.1 246.3l-0.5 1.1 -1.7 0.1 -0.2 -1.7 -1.5 -0.6 0.7 -1.4 -0.5 -1.3 0.4 -1.6 1.7 0.4 0.9 0.9 1.5 0 -0.2 1.7 1.6 0.9 -0.9 1.5 -1.3 0M743.1 246.3l-2.3 -3.8M742.7 249.7l-0.3 -1 -0.3 -0.9 -0.2 -1 -0.1 -0.9 0 -1 -0.1 -0.4 -0.2 -0.3 -0.3 -0.3 -0.3 -0.1 -0.3 0 -0.3 0 -0.3 0.2 -0.2 0.2 -0.1 0.2 0 0.3 0 0.2 0.1 0.2 0.1 0.1 0.2 0.1 0.2 0 0.1 -0.1M746.1 241.5l-0.3 -1.4M745.7 239.8l-1.2 1.3 -2.3 -0.6 0.6 -2.6 -1.7 -1.5 1.4 -1.5 0 -2 1.2 -2.1 1.9 1.3 0.8 1.8 1.9 0.8 -0.9 2.1 1.6 2 -1.7 1.7 -1.6 -0.7M745.7 239.8l-1.4 -6.4M745.4 238.7l-2.2 -1.2"/>
<path stroke-width="1.05" d="M745.4 238.7l1.5 -2.1M746.9 239.8l1.4 -0.1M748.8 239.6l-1.5 -1.9 1.3 -3.2 2.9 1.4 2.2 -2 1.6 2.3 2.4 0.4 2.2 2.2 -1.8 2.3 -2.3 0.7 -1.1 2.5 -2.5 -1.6 -2.6 1.9 -1.9 -2.8 1.1 -2.2M748.8 239.6l7.9 -0.6M750.2 239.5l1.8 -3M750.2 239.5l2.4 2.5M749.6 236.0l-0.3 -1.4 -0.2 -1.5 -0.4 -1.3 -0.5 -1.4 -0.5 -1.2 -0.2 -1 0.3 -1 0.7 -0.6 0.9 -0.3 0.8 0.3 0.6 0.5 0.2 0.7 -0.2 0.7 -0.4 0.5 -0.5 0.2 -0.6 0 -0.4 -0.3 -0.2 -0.5 0.1 -0.4 0.2 -0.3 0.3 -0.1M750.7 236.7l-0.1 -1.3 1.5 -0.9 0.9 1.5 1.7 -0.1 0 1.5 1 0.9 0.4 1.6 -1.6 0.4 -1.3 -0.4 -1.3 0.6 -0.7 -1.4 -1.8 -0.1 0.1 -1.8 1.2 -0.5M750.7 236.7l3.8 2.3M747.9 238.1l0.7 0.2 0.7 0.2 0.6 0.2 0.7 0.1 0.6 0 0.5 0.1 0.3 0.3 0.3 0.3 0.1 0.3 0 0.4 0 0.3 -0.2 0.3 -0.3 0.2 -0.2 0.1 -0.3 0 -0.2 -0.1 -0.2 -0.1 -0.1 -0.2 -0.1 -0.2 0 -0.1 0.1 -0.2M753.5 232.2l-0.6 -1.3M752.7 230.5l-1.5 1.8 -3.3 -0.4 0.7 -3.2 -2.4 -1.7 1.8 -2.1 0 -2.5 1.6 -2.7 2.8 1.4 1.1 2.1 2.7 0.6 -1.1 2.8 2.3 2.2 -2.4 2.3 -2.3 -0.6M752.7 230.5l-2.2 -7.6M752.3 229.2l-3.2 -1.2M752.3 229.2l2 -2.9M755.1 230.6l1.4 0.1M757.0 230.6l-1.4 -1.8 1.3 -2.9 2.7 1.4 2.1 -1.8 1.5 2.2 2.2 0.5 2.1 2 -1.9 2.2 -2.1 0.5 -1.1 2.3 -2.3 -1.6 -2.5 1.7 -1.7 -2.7 1.1 -2M757.0 230.6l7.4 -0.3M758.3 230.6l1.8 -2.7M758.3 230.6l2.2 2.4M757.8 227.4l0.7 1.2 0.6 1.1 0.8 1.1 0.8 1 0.9 0.9 0.4 0.5 0.1 0.5 -0.1 0.6 -0.3 0.4 -0.4 0.2 -0.5 0.1 -0.4 -0.2 -0.3 -0.2 -0.2 -0.3 -0.1 -0.4 0.1 -0.3 0.2 -0.2 0.3 -0.1 0.2 0 0.2 0.1 0.1 0.1M757.0 226.4l-0.4 1.2 -1.8 0.3 -0.3 -1.8 -1.6 -0.5 0.6 -1.4 -0.6 -1.3 0.3 -1.7 1.7 0.2 1 0.9 1.5 -0.1 0.1 1.7 1.6 0.8 -0.7 1.6 -1.4 0.1M757.0 226.4l-2.7 -3.7M756.2 229.5l-0.5 -0.8 -0.5 -0.8 -0.4 -0.8 -0.4 -0.8 -0.2 -0.9 -0.2 -0.3 -0.2 -0.2 -0.3 -0.1 -0.4 -0.1 -0.2 0.1 -0.3 0.2 -0.1 0.2 -0.1 0.2 0 0.3 0.1 0.2 0.1 0.1 0.1 0.1 0.2 0.1 0.2 -0.1 0.1 0 0 -0.1M760.5 222.7l-0.3 -1.4M760.2 220.8l-1.6 1.6 -2.8 -1.1 0.9 -3.1 -1.9 -2.1 1.9 -1.8 0.3 -2.6 1.8 -2.5 2.2 2 0.8 2.3 2.2 1.2 -1.3 2.6 1.8 2.7 -2.3 1.9 -2 -1.1M760.2 220.8l-1.1 -8.1M760.0 219.4l-2.7 -1.8M760.0 219.4l2.1 -2.5M761.6 220.7l1.4 -0.1M763.4 220.6l-1.1 -1.7 1.3 -2.4 2.5 1.3 2.1 -1.4 1.1 2 2.1 0.5 1.7 1.9 -1.8 1.7 -2 0.4 -1.2 1.9 -2 -1.5 -2.4 1.3 -1.4 -2.4 1.1 -1.6M763.4 220.6l6.9 0.1M764.6 220.6l1.9 -2.2M764.6 220.6l1.9 2.2M763.8 217.5l-1.4 -1 -1.3 -1 -1.2 -1.1 -1.1 -1.2 -0.9 -1.3 -0.6 -0.5 -0.7 -0.1 -0.7 0.1 -0.5 0.3 -0.4 0.5 -0.2 0.6 0.1 0.5 0.3 0.4 0.4 0.3 0.4 0.1 0.4 -0.1 0.3 -0.3 0.2 -0.3 0 -0.3 -0.1 -0.3 -0.1 -0.1M765.0 217.7l-0.5 -1.1 1.1 -1.3 1.3 1 1.4 -0.7 0.5 1.3 1.2 0.5 0.9 1.3 -1.3 0.9 -1.2 0 -1 1.1 -1 -1.1 -1.6 0.5 -0.6 -1.5 0.8 -0.9M765.0 217.7l4.2 0.7M762.2 219.6l0.7 0.4 0.7 0.3 0.7 0.3 0.7 0.2 0.7 0.2 0.4 0.1 0.2 0.2 0.2 0.3 0.1 0.3 0 0.3 -0.1 0.3 -0.1 0.2 -0.2 0.2 -0.2 0.1 -0.2 0 -0.2 0 -0.2 -0.1 -0.1 -0.2 -0.1 -0.1 0 -0.1 0 -0.2M768.4 213.4l-0.4 -1.3M767.9 211.7l-0.9 1.5 -2.3 -0.2 0.1 -2.5 -1.9 -1.1 1.1 -1.7 -0.3 -1.8 0.9 -2.2 2 0.9 1.1 1.5 1.9 0.4 -0.5 2.1 1.9 1.6 -1.4 1.9 -1.7 -0.4M767.9 211.7l-2.4 -5.6M767.5 210.7l-2.4 -0.7M767.5 210.7l1.1 -2.2M770.4 212.0l1.4 0M772.1 212.0l-0.7 -1.3 1.1 -1.7 1.7 1.1 1.5 -1 0.8 1.5 1.4 0.5 1.2 1.5 -1.4 1.2 -1.5 0.2 -0.9 1.4 -1.4 -1.2 -1.8 0.8 -0.9 -1.8 0.9 -1.2M772.1 212.0l5 0.4M773.0 212.1l1.4 -1.6M773.0 212.1l1.2 1.7M773.1 210.0l0.7 1.5 0.7 1.4 0.8 1.3 0.9 1.3 1 1.1 0.4 0.6 0 0.7 -0.2 0.7 -0.4 0.4 -0.6 0.2 -0.5 0 -0.5 -0.3 -0.3 -0.3 -0.2 -0.5 0.1 -0.4 0.2 -0.4 0.3 -0.2 0.4 0 0.2 0.1 0.2 0.2 0.1 0.2M772.8 208.7l-1 1.2 -2.1 -0.4 0.4 -2.1 -1.5 -1.2 1.2 -1.4 -0.1 -1.6 1 -1.8 1.8 1 0.7 1.4 1.7 0.5 -0.7 1.9 1.5 1.5 -1.5 1.5 -1.4 -0.5M772.8 208.7l-1.5 -5.2M771.0 211.6l-0.2 -0.7 -0.1 -0.7 -0.1 -0.6 -0.1 -0.7 0.1 -0.6 -0.1 -0.6 -0.3 -0.4 -0.4 -0.3 -0.5 -0.1 -0.5 0.1 -0.3 0.3 -0.3 0.3 0 0.4 0.1 0.3 0.2 0.3 0.2 0.2 0.3 0 0.3 -0.1 0.1 -0.2 0.1 -0.2 0 -0.1"/>
</g>
<circle cx="562.30" cy="636.10" r="6.8" fill="none" stroke="#f00" stroke-width="1.4"/>
<path d="M562.30 636.10V629.10A7 7 0 0 1 569.30 636.10Z" fill="#fff"/>
<path d="M562.30 636.10V643.10A7 7 0 0 1 555.30 636.10Z" fill="#f1f1f1"/>
<path d="M562.30 636.10V629.10A7 7 0 0 0 555.30 636.10Z" fill="#f00"/>
<path d="M562.30 636.10V643.10A7 7 0 0 0 569.30 636.10Z" fill="#f00"/>
</svg>
<div id="title"><span class="t">C:/001 mill/oval.c2d* - Carbide Create, Build 757</span>
<div class="wb" style="left:1314px"></div>
<div class="wb" style="left:1330px"></div>
<div class="wb" style="left:1348px"></div>
</div>
<div id="menu"><span style="left:5px"><u>F</u>ile</span><span style="left:33px"><u>E</u>dit</span><span style="left:63px">Library</span><span style="left:108px">View</span><span style="left:142px"><u>H</u>elp</span></div>
<div class="hl" style="left:0;top:36px;width:1366px;background:#808080"></div>
<div class="abs" style="left:5px;top:62px;width:373px;height:636px;border-top:1px solid #fff;border-left:1px solid #fff;border-right:1px solid #404040;border-bottom:1px solid #404040"></div>
<div class="abs" style="left:6px;top:63px;width:371px;height:634px;border-right:1px solid #808080;border-bottom:1px solid #808080"></div>
<div class="tab" style="left:5px;top:43px;width:56px;height:20px;line-height:20px;padding-left:1px">Design</div>
<div class="tab" style="left:61px;top:45px;width:69px;height:17px;line-height:18px">Toolpaths</div>
<div class="grp" style="left:12px;top:79px;width:358px;height:60px"><span class="lbl">Setup</span></div>
<div class="grp" style="left:12px;top:152px;width:358px;height:60px"><span class="lbl">Create Vector</span></div>
<div class="grp" style="left:12px;top:225px;width:358px;height:60px"><span class="lbl">Import</span></div>
<div id="status">Cursor Position X: 2.314 Y: 11.294 in</div>
<div class="hl" style="left:0;top:725px;width:1366px;background:#fff"></div>
<svg width="390" height="300" viewBox="0 0 390 300" fill="none" stroke="#7ac474" stroke-width="2" stroke-linejoin="miter">
<path d="M49.60 110.26L52.34 110.72L52.34 114.88L49.60 115.34A10.90 10.90 0 0 1 46.50 120.71L47.47 123.31L43.86 125.39L42.10 123.25A10.90 10.90 0 0 1 35.90 123.25L34.14 125.39L30.53 123.31L31.50 120.71A10.90 10.90 0 0 1 28.40 115.34L25.66 114.88L25.66 110.72L28.40 110.26A10.90 10.90 0 0 1 31.50 104.89L30.53 102.29L34.14 100.21L35.90 102.35A10.90 10.90 0 0 1 42.10 102.35L43.86 100.21L47.47 102.29L46.50 104.89A10.90 10.90 0 0 1 49.60 110.26Z"/>
<circle cx="39" cy="112.8" r="3.3"/>
<path d="M86.2 101.3H68.7V125.4H92.5V109.6"/>
<path d="M83.2 111.2L84.6 106.2L91.7 99.4L95.2 102.8L88 109.8Z" stroke-width="1.7"/>
<path d="M109.2 101.5H133.5V125.7H109.2ZM117.4 101.5V125.7M125.4 101.5V125.7M109.2 109.7H133.5M109.2 117.7H133.5"/>
<path d="M147.9 99H175.7V126.8H147.9Z"/>
<path d="M150.3 123.8L159.5 113.3L168.6 123.6M164.6 117.4L166.7 115.3L175.2 123.4" stroke-width="1.5"/>
<circle cx="169.2" cy="107.8" r="2.3" stroke-width="1.3"/>
<path d="M188.3 121.3L211.2 98.4L217.3 104.5L194.4 127.4Z"/>
<path d="M192.6 120.4l1 1M196.2 115.4l2.6 2.6M200.5 111.1l2.6 2.6M204.8 106.9l2.6 2.6M209.9 103.4l1 1" stroke-width="1.7"/>
<circle cx="38.9" cy="185.7" r="13.9" stroke-width="1.8"/>
<rect x="66" y="172.2" width="28" height="27.4" stroke-width="1.8"/>
<path d="M107 200.6L112.9 172.6L130.5 195.2L135.7 173" stroke-width="1.8" stroke-linejoin="round" stroke-linecap="round"/>
<path d="M153.6 176.8C156 173 162.5 172.6 166.5 173.4C169.6 174.2 168.6 177.5 170 180.2C172 183.6 175 186.5 174.8 192.5C174.7 197.6 173.2 199.6 171 198.6C167.5 196.6 166 195.2 163 195.6C159 196 156.5 198.2 154 197.8C151.6 197.3 150.6 194 150.7 188C150.8 183 151.6 179.8 153.6 176.8Z" stroke-width="2.1"/>
<path d="M202.9 172.5L216.7 183.1L211.6 199.8H194.3L189.2 183.1Z" stroke-width="2.2" stroke-linejoin="round"/>
<text x="230.9" y="199.7" style="font-family:'Liberation Serif',serif;font-weight:bold;font-size:43px;fill:none" stroke-width="1.25" textLength="26" lengthAdjust="spacingAndGlyphs">T</text>
<path d="M34 253.1H25V270.9H52.9V253.1H44" stroke-width="1.9"/>
<path d="M39.3 244.4V259" stroke-width="1.4"/>
<path d="M35 257.2H43.8L39.4 268.6Z" fill="#7ac474" stroke="none"/>
<path d="M66.5 273.3V268.6H70.4V264.9H74.3V261.9H78.8V273.3Z" stroke-width="1.9"/>
<path d="M82.9 256.9V252.6L89.3 245.9H94V256.9Z" stroke-width="1.9"/>
<path d="M80.6 271.3C86 270.9 88.8 268 89.2 263.6" stroke-width="1.8"/>
<path d="M85.6 265.2L89.3 259.2L92.2 265.8Z" fill="#7ac474" stroke-width="0.8"/>
<path d="M121.4 248.6C116.5 245.6 111.5 245.6 107 247.8V271.2C111.5 269.2 116.5 269.2 121.4 271.6C126.3 269.2 131.3 269.2 135.8 271.2V247.8C131.3 245.6 126.3 245.6 121.4 248.6ZM121.4 248.6V271.6" stroke-width="2.1"/>
</svg>
<svg width="20" height="18" viewBox="0 0 20 18"><defs><linearGradient id="lg" x1="0" y1="0" x2="0" y2="1"><stop offset="0" stop-color="#8cd24a"/><stop offset="0.55" stop-color="#5cbf3e"/><stop offset="1" stop-color="#0a8f3c"/></linearGradient></defs><path d="M3.9 12.3L10 16L16.1 12.3" fill="none" stroke="#fff" stroke-width="1.5"/><path d="M13.6 6.3L10 4.2L6.2 6.4V12.1L10 14.3L13.8 12.1" fill="none" stroke="url(#lg)" stroke-width="2.3"/><path d="M6 11.6L10 14.4L14.4 11.8L12.2 10.4L10 11.8L7.8 10.4Z" fill="#0f9440"/><path d="M10 8.9L12.3 10.3L10 11.7L7.7 10.3Z" fill="#fff"/></svg>
<svg width="1366" height="18" viewBox="0 0 1366 18" shape-rendering="crispEdges"><rect x="1318" y="11" width="6" height="2" fill="#000"/><path d="M1335 4h6v2h-6zM1335 6h1v2h-1zM1340 6h1v4h-1zM1339 9h1v1h-1z" fill="#000"/><path d="M1333 7h6v2h-6zM1333 9h1v4h-1zM1338 9h1v4h-1zM1333 12h6v1h-6z" fill="#000"/><path d="M1352 5h2v1h-2zM1358 5h2v1h-2zM1353 6h2v1h-2zM1357 6h2v1h-2zM1354 7h4v1h-4zM1355 8h2v1h-2zM1354 9h4v1h-4zM1353 10h2v1h-2zM1357 10h2v1h-2zM1352 11h2v1h-2zM1358 11h2v1h-2z" fill="#000"/></svg>
</body></html>
